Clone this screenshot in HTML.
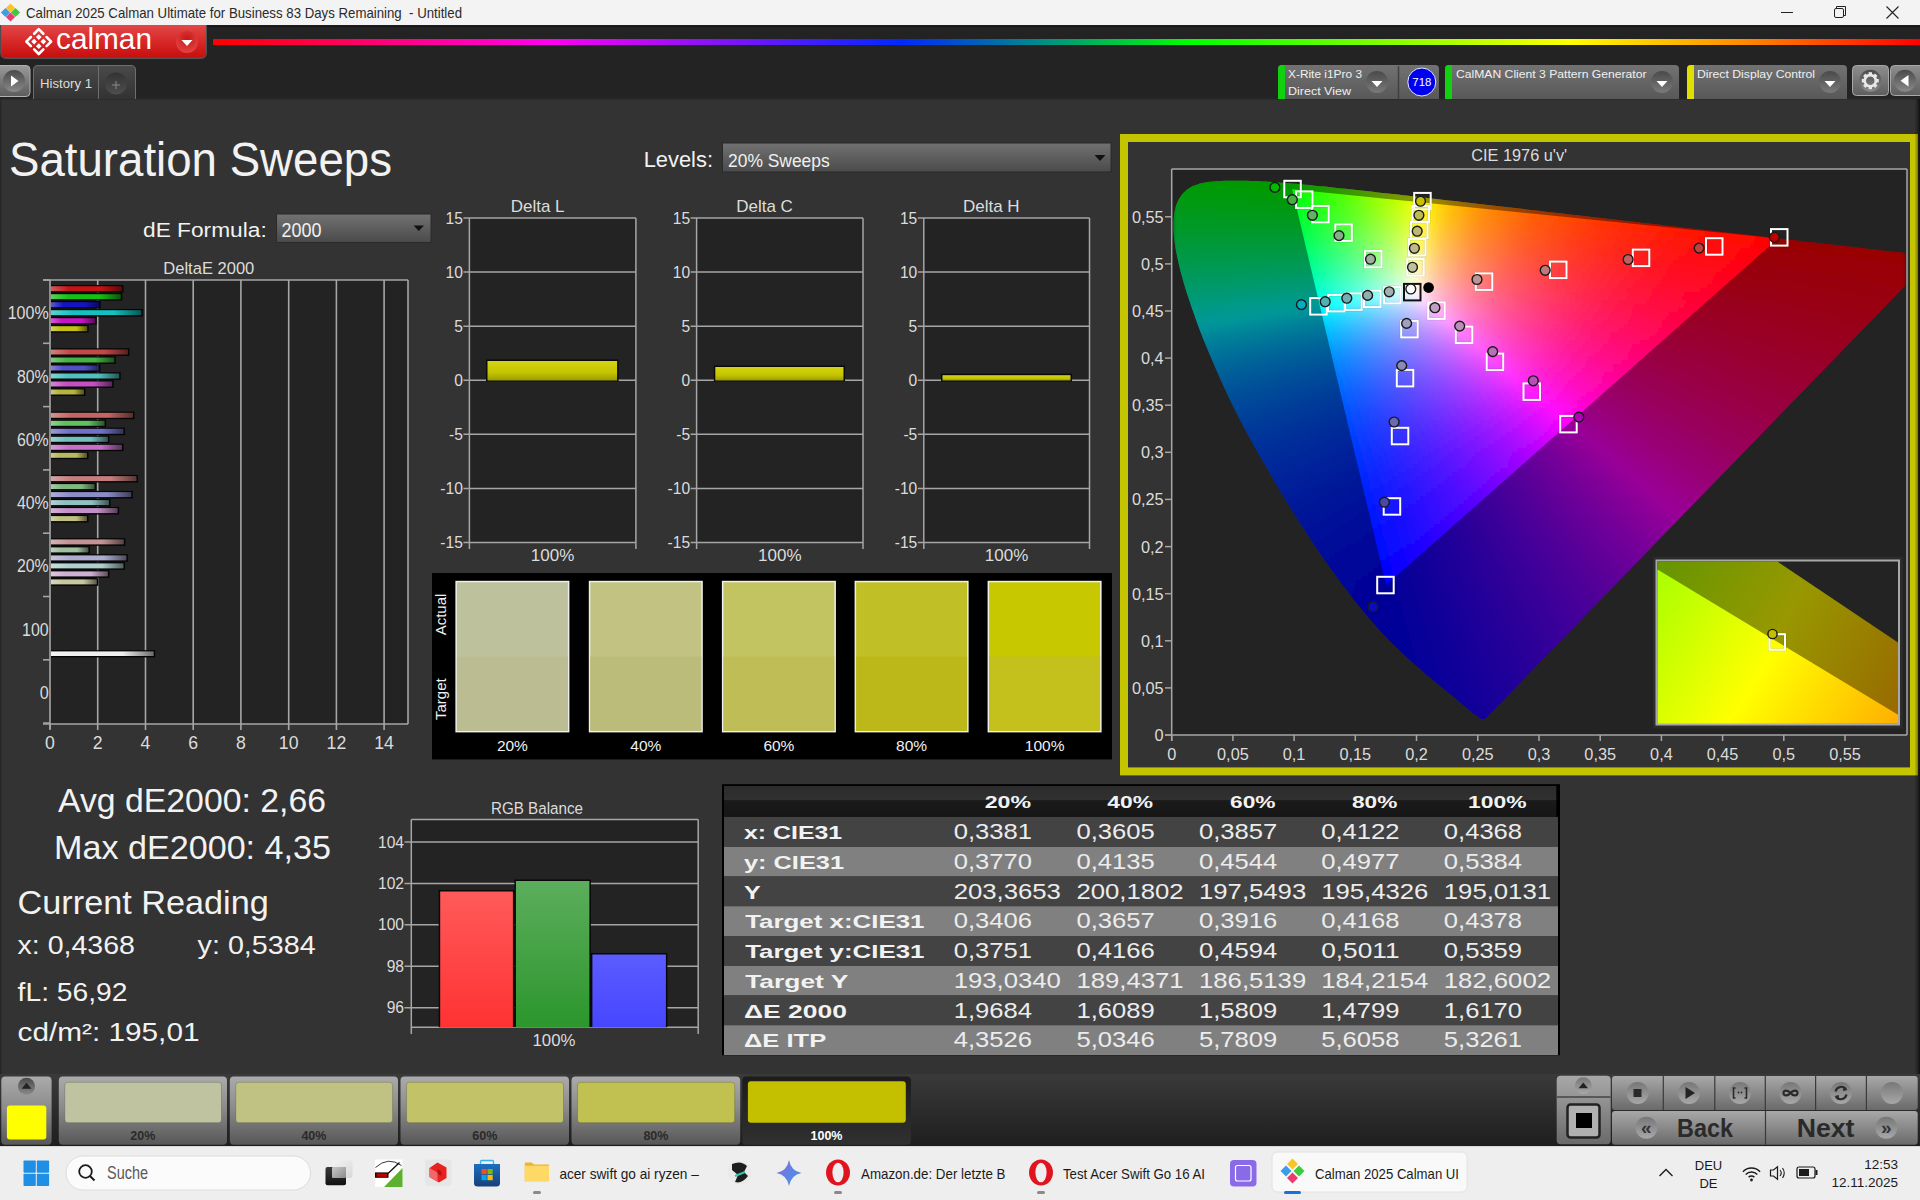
<!DOCTYPE html>
<html><head><meta charset="utf-8"><title>Calman</title>
<style>
html,body{margin:0;padding:0;width:1920px;height:1200px;overflow:hidden;background:#333;}
body{position:relative;font-family:'Liberation Sans', sans-serif;}
svg{position:absolute;left:0;top:0;display:block;}
text{font-family:'Liberation Sans', sans-serif;}
</style></head><body>
<svg width="1920" height="1200" viewBox="0 0 1920 1200">
<defs><linearGradient id="botg" x1="0" y1="0" x2="0" y2="1"><stop offset="0" stop-color="#3a3a3a"/><stop offset="1" stop-color="#1e1e1e"/></linearGradient><linearGradient id="redg" x1="0" y1="0" x2="0" y2="1"><stop offset="0" stop-color="#e24848"/><stop offset="0.5" stop-color="#d82828"/><stop offset="1" stop-color="#c60e0e"/></linearGradient><radialGradient id="ddred" cx="0.5" cy="0.35" r="0.6"><stop offset="0" stop-color="#c81818"/><stop offset="1" stop-color="#e04040"/></radialGradient><linearGradient id="rainb" x1="0" y1="0" x2="1" y2="0"><stop offset="0.0000" stop-color="#ff0000"/><stop offset="0.1974" stop-color="#ff00f0"/><stop offset="0.4025" stop-color="#0028ff"/><stop offset="0.4845" stop-color="#008c88"/><stop offset="0.5723" stop-color="#00ff00"/><stop offset="0.7950" stop-color="#ffff00"/><stop offset="0.8946" stop-color="#ff8c00"/><stop offset="1.0000" stop-color="#ff0000"/></linearGradient><linearGradient id="playg" x1="0" y1="0" x2="0" y2="1"><stop offset="0" stop-color="#9a9a9a"/><stop offset="1" stop-color="#5c5c5c"/></linearGradient><linearGradient id="circg" x1="0" y1="0" x2="0" y2="1"><stop offset="0" stop-color="#4a4a4a"/><stop offset="1" stop-color="#8a8a8a"/></linearGradient><linearGradient id="tabg" x1="0" y1="0" x2="0" y2="1"><stop offset="0" stop-color="#4a4a4a"/><stop offset="1" stop-color="#323232"/></linearGradient><linearGradient id="plusg" x1="0" y1="0" x2="0" y2="1"><stop offset="0" stop-color="#333"/><stop offset="1" stop-color="#4e4e4e"/></linearGradient><linearGradient id="devg" x1="0" y1="0" x2="0" y2="1"><stop offset="0" stop-color="#727272"/><stop offset="1" stop-color="#585858"/></linearGradient><linearGradient id="ddg" x1="0" y1="0" x2="0" y2="1"><stop offset="0" stop-color="#4a4a4a"/><stop offset="1" stop-color="#7a7a7a"/></linearGradient><linearGradient id="btng" x1="0" y1="0" x2="0" y2="1"><stop offset="0" stop-color="#8e8e8e"/><stop offset="1" stop-color="#5e5e5e"/></linearGradient><linearGradient id="dropg" x1="0" y1="0" x2="0" y2="1"><stop offset="0" stop-color="#727272"/><stop offset="1" stop-color="#4a4a4a"/></linearGradient><linearGradient id="hb1"><stop offset="0" stop-color="#d55a5a"/><stop offset="0.25" stop-color="#c41414"/><stop offset="0.7" stop-color="#c41414"/><stop offset="1" stop-color="#580909"/></linearGradient><linearGradient id="hb2"><stop offset="0" stop-color="#5ad25a"/><stop offset="0.25" stop-color="#14c014"/><stop offset="0.7" stop-color="#14c014"/><stop offset="1" stop-color="#095609"/></linearGradient><linearGradient id="hb3"><stop offset="0" stop-color="#5a5ad5"/><stop offset="0.25" stop-color="#1414c4"/><stop offset="0.7" stop-color="#1414c4"/><stop offset="1" stop-color="#090958"/></linearGradient><linearGradient id="hb4"><stop offset="0" stop-color="#5ad2d2"/><stop offset="0.25" stop-color="#14c0c0"/><stop offset="0.7" stop-color="#14c0c0"/><stop offset="1" stop-color="#095656"/></linearGradient><linearGradient id="hb5"><stop offset="0" stop-color="#d55ad5"/><stop offset="0.25" stop-color="#c414c4"/><stop offset="0.7" stop-color="#c414c4"/><stop offset="1" stop-color="#580958"/></linearGradient><linearGradient id="hb6"><stop offset="0" stop-color="#d5d25a"/><stop offset="0.25" stop-color="#c4c014"/><stop offset="0.7" stop-color="#c4c014"/><stop offset="1" stop-color="#585609"/></linearGradient><linearGradient id="hb7"><stop offset="0" stop-color="#d57e7e"/><stop offset="0.25" stop-color="#c44848"/><stop offset="0.7" stop-color="#c44848"/><stop offset="1" stop-color="#582020"/></linearGradient><linearGradient id="hb8"><stop offset="0" stop-color="#7cca7c"/><stop offset="0.25" stop-color="#44b444"/><stop offset="0.7" stop-color="#44b444"/><stop offset="1" stop-color="#1e501e"/></linearGradient><linearGradient id="hb9"><stop offset="0" stop-color="#8484d5"/><stop offset="0.25" stop-color="#5050c4"/><stop offset="0.7" stop-color="#5050c4"/><stop offset="1" stop-color="#242458"/></linearGradient><linearGradient id="hb10"><stop offset="0" stop-color="#84d2d2"/><stop offset="0.25" stop-color="#50c0c0"/><stop offset="0.7" stop-color="#50c0c0"/><stop offset="1" stop-color="#245656"/></linearGradient><linearGradient id="hb11"><stop offset="0" stop-color="#d584d5"/><stop offset="0.25" stop-color="#c450c4"/><stop offset="0.7" stop-color="#c450c4"/><stop offset="1" stop-color="#582458"/></linearGradient><linearGradient id="hb12"><stop offset="0" stop-color="#caca79"/><stop offset="0.25" stop-color="#b4b440"/><stop offset="0.7" stop-color="#b4b440"/><stop offset="1" stop-color="#50501c"/></linearGradient><linearGradient id="hb13"><stop offset="0" stop-color="#d59292"/><stop offset="0.25" stop-color="#c46464"/><stop offset="0.7" stop-color="#c46464"/><stop offset="1" stop-color="#582c2c"/></linearGradient><linearGradient id="hb14"><stop offset="0" stop-color="#8fd28f"/><stop offset="0.25" stop-color="#60c060"/><stop offset="0.7" stop-color="#60c060"/><stop offset="1" stop-color="#2b562b"/></linearGradient><linearGradient id="hb15"><stop offset="0" stop-color="#9a9ad8"/><stop offset="0.25" stop-color="#7070c8"/><stop offset="0.7" stop-color="#7070c8"/><stop offset="1" stop-color="#323259"/></linearGradient><linearGradient id="hb16"><stop offset="0" stop-color="#9ad2d2"/><stop offset="0.25" stop-color="#70c0c0"/><stop offset="0.7" stop-color="#70c0c0"/><stop offset="1" stop-color="#325656"/></linearGradient><linearGradient id="hb17"><stop offset="0" stop-color="#d59ad8"/><stop offset="0.25" stop-color="#c470c8"/><stop offset="0.7" stop-color="#c470c8"/><stop offset="1" stop-color="#583259"/></linearGradient><linearGradient id="hb18"><stop offset="0" stop-color="#cdcd8f"/><stop offset="0.25" stop-color="#b8b860"/><stop offset="0.7" stop-color="#b8b860"/><stop offset="1" stop-color="#52522b"/></linearGradient><linearGradient id="hb19"><stop offset="0" stop-color="#d5a3a3"/><stop offset="0.25" stop-color="#c47c7c"/><stop offset="0.7" stop-color="#c47c7c"/><stop offset="1" stop-color="#583737"/></linearGradient><linearGradient id="hb20"><stop offset="0" stop-color="#a6cda6"/><stop offset="0.25" stop-color="#80b880"/><stop offset="0.7" stop-color="#80b880"/><stop offset="1" stop-color="#395239"/></linearGradient><linearGradient id="hb21"><stop offset="0" stop-color="#aeaed8"/><stop offset="0.25" stop-color="#8c8cc8"/><stop offset="0.7" stop-color="#8c8cc8"/><stop offset="1" stop-color="#3e3e59"/></linearGradient><linearGradient id="hb22"><stop offset="0" stop-color="#b1d2d2"/><stop offset="0.25" stop-color="#90c0c0"/><stop offset="0.7" stop-color="#90c0c0"/><stop offset="1" stop-color="#405656"/></linearGradient><linearGradient id="hb23"><stop offset="0" stop-color="#d5b1d8"/><stop offset="0.25" stop-color="#c490c8"/><stop offset="0.7" stop-color="#c490c8"/><stop offset="1" stop-color="#584059"/></linearGradient><linearGradient id="hb24"><stop offset="0" stop-color="#d2d2a6"/><stop offset="0.25" stop-color="#c0c080"/><stop offset="0.7" stop-color="#c0c080"/><stop offset="1" stop-color="#565639"/></linearGradient><linearGradient id="hb25"><stop offset="0" stop-color="#d5b4b4"/><stop offset="0.25" stop-color="#c49494"/><stop offset="0.7" stop-color="#c49494"/><stop offset="1" stop-color="#584242"/></linearGradient><linearGradient id="hb26"><stop offset="0" stop-color="#bcd2bc"/><stop offset="0.25" stop-color="#a0c0a0"/><stop offset="0.7" stop-color="#a0c0a0"/><stop offset="1" stop-color="#485648"/></linearGradient><linearGradient id="hb27"><stop offset="0" stop-color="#c4c4de"/><stop offset="0.25" stop-color="#acacd0"/><stop offset="0.7" stop-color="#acacd0"/><stop offset="1" stop-color="#4d4d5d"/></linearGradient><linearGradient id="hb28"><stop offset="0" stop-color="#c7dede"/><stop offset="0.25" stop-color="#b0d0d0"/><stop offset="0.7" stop-color="#b0d0d0"/><stop offset="1" stop-color="#4f5d5d"/></linearGradient><linearGradient id="hb29"><stop offset="0" stop-color="#dec7de"/><stop offset="0.25" stop-color="#d0b0d0"/><stop offset="0.7" stop-color="#d0b0d0"/><stop offset="1" stop-color="#5d4f5d"/></linearGradient><linearGradient id="hb30"><stop offset="0" stop-color="#d8d8bc"/><stop offset="0.25" stop-color="#c8c8a0"/><stop offset="0.7" stop-color="#c8c8a0"/><stop offset="1" stop-color="#595948"/></linearGradient><linearGradient id="hb31"><stop offset="0" stop-color="#f3f3f3"/><stop offset="0.25" stop-color="#eeeeee"/><stop offset="0.7" stop-color="#eeeeee"/><stop offset="1" stop-color="#6b6b6b"/></linearGradient><linearGradient id="ybar" x1="0" y1="0" x2="0" y2="1"><stop offset="0" stop-color="#d4d414"/><stop offset="0.6" stop-color="#c4c400"/><stop offset="1" stop-color="#9a9a00"/></linearGradient><linearGradient id="rbar" x1="0" y1="0" x2="0" y2="1"><stop offset="0" stop-color="#ff5a5a"/><stop offset="1" stop-color="#ff3232"/></linearGradient><linearGradient id="gbar" x1="0" y1="0" x2="0" y2="1"><stop offset="0" stop-color="#5cae5c"/><stop offset="1" stop-color="#2c962c"/></linearGradient><linearGradient id="bbar" x1="0" y1="0" x2="0" y2="1"><stop offset="0" stop-color="#5c5cff"/><stop offset="1" stop-color="#4646ff"/></linearGradient><linearGradient id="thead" x1="0" y1="0" x2="0" y2="1"><stop offset="0" stop-color="#2c2c2c"/><stop offset="0.45" stop-color="#303030"/><stop offset="0.47" stop-color="#1a1a1a"/><stop offset="1" stop-color="#161616"/></linearGradient><linearGradient id="g0"><stop offset="0.000" stop-color="#00ff01"/><stop offset="0.161" stop-color="#01ff00"/><stop offset="0.245" stop-color="#65ff00"/><stop offset="0.313" stop-color="#caff00"/><stop offset="0.343" stop-color="#ffff00"/><stop offset="0.384" stop-color="#ffc200"/><stop offset="0.435" stop-color="#ff8e00"/><stop offset="0.509" stop-color="#ff5f00"/><stop offset="0.620" stop-color="#ff3400"/><stop offset="0.792" stop-color="#ff1000"/><stop offset="0.941" stop-color="#ff0000"/><stop offset="0.999" stop-color="#ff0000"/><stop offset="1.000" stop-color="#ff0000"/></linearGradient><linearGradient id="g1"><stop offset="0.000" stop-color="#00ff06"/><stop offset="0.128" stop-color="#00ff00"/><stop offset="0.163" stop-color="#02ff00"/><stop offset="0.242" stop-color="#61ff00"/><stop offset="0.310" stop-color="#c6ff00"/><stop offset="0.340" stop-color="#fbff00"/><stop offset="0.348" stop-color="#fff500"/><stop offset="0.389" stop-color="#ffba00"/><stop offset="0.446" stop-color="#ff8500"/><stop offset="0.525" stop-color="#ff5600"/><stop offset="0.642" stop-color="#ff2e00"/><stop offset="0.830" stop-color="#ff0a00"/><stop offset="0.947" stop-color="#ff0000"/><stop offset="0.999" stop-color="#ff0000"/><stop offset="1.000" stop-color="#ff0000"/></linearGradient><linearGradient id="g2"><stop offset="0.000" stop-color="#00ff0b"/><stop offset="0.161" stop-color="#00ff00"/><stop offset="0.223" stop-color="#47ff00"/><stop offset="0.297" stop-color="#b0ff00"/><stop offset="0.343" stop-color="#fffd00"/><stop offset="0.378" stop-color="#ffc700"/><stop offset="0.430" stop-color="#ff9000"/><stop offset="0.503" stop-color="#ff6000"/><stop offset="0.610" stop-color="#ff3600"/><stop offset="0.776" stop-color="#ff1100"/><stop offset="0.931" stop-color="#ff0000"/><stop offset="0.999" stop-color="#ff0000"/><stop offset="1.000" stop-color="#ff0000"/></linearGradient><linearGradient id="g3"><stop offset="0.000" stop-color="#00ff11"/><stop offset="0.166" stop-color="#02ff01"/><stop offset="0.245" stop-color="#63ff00"/><stop offset="0.313" stop-color="#ccff00"/><stop offset="0.343" stop-color="#fffc00"/><stop offset="0.378" stop-color="#ffc500"/><stop offset="0.430" stop-color="#ff8f00"/><stop offset="0.503" stop-color="#ff5f00"/><stop offset="0.610" stop-color="#ff3500"/><stop offset="0.776" stop-color="#ff1000"/><stop offset="0.925" stop-color="#ff0000"/><stop offset="0.999" stop-color="#ff0000"/><stop offset="1.000" stop-color="#ff0000"/></linearGradient><linearGradient id="g4"><stop offset="0.000" stop-color="#00ff16"/><stop offset="0.166" stop-color="#01ff07"/><stop offset="0.245" stop-color="#63ff00"/><stop offset="0.313" stop-color="#ccff00"/><stop offset="0.337" stop-color="#f8ff00"/><stop offset="0.340" stop-color="#fdff00"/><stop offset="0.381" stop-color="#ffc100"/><stop offset="0.433" stop-color="#ff8c00"/><stop offset="0.506" stop-color="#ff5c00"/><stop offset="0.612" stop-color="#ff3300"/><stop offset="0.784" stop-color="#ff0e00"/><stop offset="0.917" stop-color="#ff0000"/><stop offset="0.996" stop-color="#ff0000"/><stop offset="0.999" stop-color="#ff0000"/><stop offset="1.000" stop-color="#ff0000"/></linearGradient><linearGradient id="g5"><stop offset="0.000" stop-color="#00ff1b"/><stop offset="0.166" stop-color="#00ff0e"/><stop offset="0.239" stop-color="#5aff06"/><stop offset="0.307" stop-color="#c3ff00"/><stop offset="0.337" stop-color="#f9ff00"/><stop offset="0.340" stop-color="#feff00"/><stop offset="0.376" stop-color="#ffc700"/><stop offset="0.422" stop-color="#ff9400"/><stop offset="0.490" stop-color="#ff6400"/><stop offset="0.590" stop-color="#ff3900"/><stop offset="0.746" stop-color="#ff1400"/><stop offset="0.906" stop-color="#ff0000"/><stop offset="0.996" stop-color="#ff0000"/><stop offset="0.999" stop-color="#ff0000"/><stop offset="1.000" stop-color="#ff0000"/></linearGradient><linearGradient id="g6"><stop offset="0.000" stop-color="#00ff21"/><stop offset="0.166" stop-color="#00ff14"/><stop offset="0.229" stop-color="#4bff0e"/><stop offset="0.297" stop-color="#b1ff06"/><stop offset="0.337" stop-color="#faff00"/><stop offset="0.340" stop-color="#ffff00"/><stop offset="0.376" stop-color="#ffc600"/><stop offset="0.422" stop-color="#ff9300"/><stop offset="0.490" stop-color="#ff6300"/><stop offset="0.590" stop-color="#ff3800"/><stop offset="0.746" stop-color="#ff1300"/><stop offset="0.901" stop-color="#ff0000"/><stop offset="0.996" stop-color="#ff0000"/><stop offset="0.999" stop-color="#ff0000"/><stop offset="1.000" stop-color="#ff0000"/></linearGradient><linearGradient id="g7"><stop offset="0.000" stop-color="#00ff26"/><stop offset="0.171" stop-color="#03ff1b"/><stop offset="0.245" stop-color="#61ff14"/><stop offset="0.307" stop-color="#c3ff0c"/><stop offset="0.337" stop-color="#fbff08"/><stop offset="0.346" stop-color="#fff307"/><stop offset="0.381" stop-color="#ffbd01"/><stop offset="0.433" stop-color="#ff8800"/><stop offset="0.506" stop-color="#ff5900"/><stop offset="0.612" stop-color="#ff3000"/><stop offset="0.784" stop-color="#ff0c00"/><stop offset="0.901" stop-color="#ff0000"/><stop offset="0.996" stop-color="#ff0000"/><stop offset="0.999" stop-color="#ff0000"/><stop offset="1.000" stop-color="#ff0000"/></linearGradient><linearGradient id="g8"><stop offset="0.000" stop-color="#00ff2c"/><stop offset="0.171" stop-color="#01ff22"/><stop offset="0.245" stop-color="#60ff1b"/><stop offset="0.307" stop-color="#c4ff15"/><stop offset="0.337" stop-color="#fcff11"/><stop offset="0.384" stop-color="#ffb908"/><stop offset="0.435" stop-color="#ff8501"/><stop offset="0.509" stop-color="#ff5600"/><stop offset="0.620" stop-color="#ff2d00"/><stop offset="0.797" stop-color="#ff0900"/><stop offset="0.898" stop-color="#ff0000"/><stop offset="0.999" stop-color="#ff0000"/><stop offset="1.000" stop-color="#ff0000"/></linearGradient><linearGradient id="g9"><stop offset="0.000" stop-color="#00ff32"/><stop offset="0.171" stop-color="#00ff29"/><stop offset="0.245" stop-color="#5fff23"/><stop offset="0.307" stop-color="#c4ff1d"/><stop offset="0.337" stop-color="#fdff1a"/><stop offset="0.378" stop-color="#ffbe10"/><stop offset="0.424" stop-color="#ff8d08"/><stop offset="0.493" stop-color="#ff5e00"/><stop offset="0.593" stop-color="#ff3400"/><stop offset="0.754" stop-color="#ff0f00"/><stop offset="0.887" stop-color="#ff0000"/><stop offset="0.999" stop-color="#ff0000"/><stop offset="1.000" stop-color="#ff0000"/></linearGradient><linearGradient id="g10"><stop offset="0.000" stop-color="#00ff37"/><stop offset="0.171" stop-color="#00ff30"/><stop offset="0.234" stop-color="#4fff2c"/><stop offset="0.297" stop-color="#b1ff27"/><stop offset="0.337" stop-color="#feff23"/><stop offset="0.373" stop-color="#ffc418"/><stop offset="0.419" stop-color="#ff900f"/><stop offset="0.487" stop-color="#ff5f06"/><stop offset="0.588" stop-color="#ff3500"/><stop offset="0.743" stop-color="#ff1000"/><stop offset="0.882" stop-color="#ff0000"/><stop offset="0.999" stop-color="#ff0000"/><stop offset="1.000" stop-color="#ff0000"/></linearGradient><linearGradient id="g11"><stop offset="0.000" stop-color="#00ff3d"/><stop offset="0.171" stop-color="#00ff37"/><stop offset="0.201" stop-color="#22ff36"/><stop offset="0.269" stop-color="#83ff32"/><stop offset="0.327" stop-color="#e9ff2e"/><stop offset="0.335" stop-color="#f9ff2d"/><stop offset="0.337" stop-color="#ffff2d"/><stop offset="0.373" stop-color="#ffc320"/><stop offset="0.419" stop-color="#ff8f15"/><stop offset="0.487" stop-color="#ff5e0a"/><stop offset="0.588" stop-color="#ff3401"/><stop offset="0.743" stop-color="#ff0f00"/><stop offset="0.876" stop-color="#ff0000"/><stop offset="0.999" stop-color="#ff0000"/><stop offset="1.000" stop-color="#ff0000"/></linearGradient><linearGradient id="g12"><stop offset="0.000" stop-color="#00ff43"/><stop offset="0.177" stop-color="#02ff3e"/><stop offset="0.250" stop-color="#65ff3b"/><stop offset="0.313" stop-color="#cfff38"/><stop offset="0.337" stop-color="#fffe36"/><stop offset="0.373" stop-color="#ffc228"/><stop offset="0.419" stop-color="#ff8e1b"/><stop offset="0.487" stop-color="#ff5d0f"/><stop offset="0.588" stop-color="#ff3205"/><stop offset="0.743" stop-color="#ff0e00"/><stop offset="0.865" stop-color="#ff0000"/><stop offset="0.999" stop-color="#ff0000"/><stop offset="1.000" stop-color="#ff0000"/></linearGradient><linearGradient id="g13"><stop offset="0.000" stop-color="#00ff49"/><stop offset="0.177" stop-color="#00ff46"/><stop offset="0.250" stop-color="#64ff44"/><stop offset="0.307" stop-color="#c5ff42"/><stop offset="0.337" stop-color="#fffd40"/><stop offset="0.373" stop-color="#ffc12f"/><stop offset="0.419" stop-color="#ff8c21"/><stop offset="0.487" stop-color="#ff5c14"/><stop offset="0.588" stop-color="#ff3108"/><stop offset="0.743" stop-color="#ff0e00"/><stop offset="0.860" stop-color="#ff0000"/><stop offset="0.999" stop-color="#ff0000"/><stop offset="1.000" stop-color="#ff0000"/></linearGradient><linearGradient id="g14"><stop offset="0.000" stop-color="#00ff4f"/><stop offset="0.177" stop-color="#00ff4e"/><stop offset="0.239" stop-color="#53ff4d"/><stop offset="0.302" stop-color="#bbff4b"/><stop offset="0.337" stop-color="#fffc4a"/><stop offset="0.367" stop-color="#ffc73a"/><stop offset="0.408" stop-color="#ff952b"/><stop offset="0.471" stop-color="#ff641c"/><stop offset="0.561" stop-color="#ff3a0f"/><stop offset="0.699" stop-color="#ff1503"/><stop offset="0.849" stop-color="#ff0000"/><stop offset="0.999" stop-color="#ff0000"/><stop offset="1.000" stop-color="#ff0000"/></linearGradient><linearGradient id="g15"><stop offset="0.000" stop-color="#00ff56"/><stop offset="0.177" stop-color="#00ff55"/><stop offset="0.218" stop-color="#33ff55"/><stop offset="0.280" stop-color="#94ff55"/><stop offset="0.332" stop-color="#f8ff55"/><stop offset="0.335" stop-color="#fdff55"/><stop offset="0.370" stop-color="#ffc241"/><stop offset="0.416" stop-color="#ff8c2f"/><stop offset="0.479" stop-color="#ff5e1f"/><stop offset="0.574" stop-color="#ff3411"/><stop offset="0.724" stop-color="#ff0f05"/><stop offset="0.846" stop-color="#ff0000"/><stop offset="0.996" stop-color="#ff0000"/><stop offset="0.999" stop-color="#ff0000"/><stop offset="1.000" stop-color="#ff0000"/></linearGradient><linearGradient id="g16"><stop offset="0.000" stop-color="#00ff5c"/><stop offset="0.182" stop-color="#02ff5e"/><stop offset="0.250" stop-color="#62ff5e"/><stop offset="0.307" stop-color="#c6ff5f"/><stop offset="0.332" stop-color="#f9ff60"/><stop offset="0.335" stop-color="#ffff60"/><stop offset="0.365" stop-color="#ffc94c"/><stop offset="0.405" stop-color="#ff9639"/><stop offset="0.463" stop-color="#ff6728"/><stop offset="0.547" stop-color="#ff3c18"/><stop offset="0.680" stop-color="#ff170b"/><stop offset="0.835" stop-color="#ff0002"/><stop offset="0.996" stop-color="#ff0000"/><stop offset="0.999" stop-color="#ff0000"/><stop offset="1.000" stop-color="#ff0000"/></linearGradient><linearGradient id="g17"><stop offset="0.000" stop-color="#00ff62"/><stop offset="0.182" stop-color="#01ff66"/><stop offset="0.250" stop-color="#61ff68"/><stop offset="0.307" stop-color="#c7ff6a"/><stop offset="0.332" stop-color="#faff6b"/><stop offset="0.335" stop-color="#fffe6a"/><stop offset="0.365" stop-color="#ffc755"/><stop offset="0.405" stop-color="#ff9440"/><stop offset="0.463" stop-color="#ff652d"/><stop offset="0.547" stop-color="#ff3b1d"/><stop offset="0.680" stop-color="#ff160e"/><stop offset="0.830" stop-color="#ff0004"/><stop offset="0.996" stop-color="#ff0000"/><stop offset="0.999" stop-color="#ff0000"/><stop offset="1.000" stop-color="#ff0000"/></linearGradient><linearGradient id="g18"><stop offset="0.000" stop-color="#00ff69"/><stop offset="0.182" stop-color="#00ff6e"/><stop offset="0.245" stop-color="#58ff71"/><stop offset="0.302" stop-color="#bcff74"/><stop offset="0.332" stop-color="#fbff76"/><stop offset="0.340" stop-color="#fff270"/><stop offset="0.370" stop-color="#ffbe5a"/><stop offset="0.416" stop-color="#ff8842"/><stop offset="0.479" stop-color="#ff5a2f"/><stop offset="0.574" stop-color="#ff301d"/><stop offset="0.724" stop-color="#ff0c0d"/><stop offset="0.830" stop-color="#ff0006"/><stop offset="0.996" stop-color="#ff0000"/><stop offset="0.999" stop-color="#ff0000"/><stop offset="1.000" stop-color="#ff0000"/></linearGradient><linearGradient id="g19"><stop offset="0.000" stop-color="#00ff6f"/><stop offset="0.182" stop-color="#00ff77"/><stop offset="0.229" stop-color="#3eff79"/><stop offset="0.286" stop-color="#9dff7d"/><stop offset="0.332" stop-color="#fcff81"/><stop offset="0.373" stop-color="#ffb961"/><stop offset="0.419" stop-color="#ff8448"/><stop offset="0.482" stop-color="#ff5733"/><stop offset="0.577" stop-color="#ff2e20"/><stop offset="0.727" stop-color="#ff0b10"/><stop offset="0.827" stop-color="#ff0009"/><stop offset="0.999" stop-color="#ff0001"/><stop offset="1.000" stop-color="#ff0001"/></linearGradient><linearGradient id="g20"><stop offset="0.000" stop-color="#00ff76"/><stop offset="0.188" stop-color="#03ff80"/><stop offset="0.250" stop-color="#5fff85"/><stop offset="0.307" stop-color="#c8ff8a"/><stop offset="0.332" stop-color="#fdff8d"/><stop offset="0.367" stop-color="#ffbf6d"/><stop offset="0.408" stop-color="#ff8d54"/><stop offset="0.465" stop-color="#ff603d"/><stop offset="0.555" stop-color="#ff3528"/><stop offset="0.694" stop-color="#ff1015"/><stop offset="0.816" stop-color="#ff000c"/><stop offset="0.999" stop-color="#ff0003"/><stop offset="1.000" stop-color="#ff0003"/></linearGradient><linearGradient id="g21"><stop offset="0.000" stop-color="#00ff7d"/><stop offset="0.188" stop-color="#01ff89"/><stop offset="0.250" stop-color="#5eff8f"/><stop offset="0.307" stop-color="#c8ff96"/><stop offset="0.332" stop-color="#feff99"/><stop offset="0.362" stop-color="#ffc67b"/><stop offset="0.403" stop-color="#ff915e"/><stop offset="0.460" stop-color="#ff6245"/><stop offset="0.544" stop-color="#ff382e"/><stop offset="0.678" stop-color="#ff121a"/><stop offset="0.805" stop-color="#ff000f"/><stop offset="0.999" stop-color="#ff0005"/><stop offset="1.000" stop-color="#ff0005"/></linearGradient><linearGradient id="g22"><stop offset="0.000" stop-color="#00ff84"/><stop offset="0.188" stop-color="#00ff92"/><stop offset="0.250" stop-color="#5dff99"/><stop offset="0.302" stop-color="#beffa0"/><stop offset="0.332" stop-color="#ffffa5"/><stop offset="0.362" stop-color="#ffc584"/><stop offset="0.403" stop-color="#ff9066"/><stop offset="0.460" stop-color="#ff604a"/><stop offset="0.544" stop-color="#ff3632"/><stop offset="0.678" stop-color="#ff111d"/><stop offset="0.800" stop-color="#ff0012"/><stop offset="0.999" stop-color="#ff0007"/><stop offset="1.000" stop-color="#ff0007"/></linearGradient><linearGradient id="g23"><stop offset="0.000" stop-color="#00ff8b"/><stop offset="0.188" stop-color="#00ff9c"/><stop offset="0.234" stop-color="#42ffa2"/><stop offset="0.291" stop-color="#a8ffaa"/><stop offset="0.332" stop-color="#fffeb1"/><stop offset="0.362" stop-color="#ffc38e"/><stop offset="0.403" stop-color="#ff8e6d"/><stop offset="0.460" stop-color="#ff5f50"/><stop offset="0.544" stop-color="#ff3537"/><stop offset="0.678" stop-color="#ff1020"/><stop offset="0.795" stop-color="#ff0015"/><stop offset="0.999" stop-color="#ff0009"/><stop offset="1.000" stop-color="#ff0008"/></linearGradient><linearGradient id="g24"><stop offset="0.000" stop-color="#00ff92"/><stop offset="0.188" stop-color="#00ffa5"/><stop offset="0.196" stop-color="#07ffa6"/><stop offset="0.259" stop-color="#6affb0"/><stop offset="0.310" stop-color="#d0ffba"/><stop offset="0.329" stop-color="#fbffbf"/><stop offset="0.337" stop-color="#fff0b5"/><stop offset="0.367" stop-color="#ffb992"/><stop offset="0.408" stop-color="#ff8771"/><stop offset="0.465" stop-color="#ff5a54"/><stop offset="0.555" stop-color="#ff3038"/><stop offset="0.694" stop-color="#ff0c21"/><stop offset="0.795" stop-color="#ff0017"/><stop offset="0.999" stop-color="#ff000a"/><stop offset="1.000" stop-color="#ff000a"/></linearGradient><linearGradient id="g25"><stop offset="0.000" stop-color="#00ff99"/><stop offset="0.193" stop-color="#01ffb0"/><stop offset="0.256" stop-color="#64ffbb"/><stop offset="0.307" stop-color="#caffc6"/><stop offset="0.327" stop-color="#f6ffcb"/><stop offset="0.329" stop-color="#fcffcc"/><stop offset="0.365" stop-color="#ffbc9e"/><stop offset="0.405" stop-color="#ff897b"/><stop offset="0.463" stop-color="#ff5b5b"/><stop offset="0.547" stop-color="#ff323f"/><stop offset="0.680" stop-color="#ff0e26"/><stop offset="0.786" stop-color="#ff001a"/><stop offset="0.996" stop-color="#ff000c"/><stop offset="0.999" stop-color="#ff000c"/><stop offset="1.000" stop-color="#ff000c"/></linearGradient><linearGradient id="g26"><stop offset="0.000" stop-color="#00ffa1"/><stop offset="0.193" stop-color="#00ffba"/><stop offset="0.250" stop-color="#5affc5"/><stop offset="0.302" stop-color="#bfffd2"/><stop offset="0.327" stop-color="#f7ffd9"/><stop offset="0.329" stop-color="#feffda"/><stop offset="0.359" stop-color="#ffc3ae"/><stop offset="0.395" stop-color="#ff938b"/><stop offset="0.446" stop-color="#ff6469"/><stop offset="0.525" stop-color="#ff3949"/><stop offset="0.648" stop-color="#ff142e"/><stop offset="0.776" stop-color="#ff001e"/><stop offset="0.996" stop-color="#ff000e"/><stop offset="0.999" stop-color="#ff000e"/><stop offset="1.000" stop-color="#ff000e"/></linearGradient><linearGradient id="g27"><stop offset="0.000" stop-color="#00ffa8"/><stop offset="0.193" stop-color="#00ffc4"/><stop offset="0.239" stop-color="#46ffce"/><stop offset="0.291" stop-color="#a8ffdc"/><stop offset="0.327" stop-color="#f8ffe7"/><stop offset="0.329" stop-color="#ffffe8"/><stop offset="0.359" stop-color="#ffc2b9"/><stop offset="0.395" stop-color="#ff9193"/><stop offset="0.446" stop-color="#ff636f"/><stop offset="0.525" stop-color="#ff384e"/><stop offset="0.648" stop-color="#ff1332"/><stop offset="0.770" stop-color="#ff0021"/><stop offset="0.996" stop-color="#ff0010"/><stop offset="0.999" stop-color="#ff0010"/><stop offset="1.000" stop-color="#ff0010"/></linearGradient><linearGradient id="g28"><stop offset="0.000" stop-color="#00ffb0"/><stop offset="0.193" stop-color="#00ffcf"/><stop offset="0.201" stop-color="#08ffd1"/><stop offset="0.259" stop-color="#67ffdf"/><stop offset="0.305" stop-color="#c5ffee"/><stop offset="0.329" stop-color="#fffef5"/><stop offset="0.354" stop-color="#ffcacb"/><stop offset="0.389" stop-color="#ff96a1"/><stop offset="0.441" stop-color="#ff6579"/><stop offset="0.514" stop-color="#ff3b57"/><stop offset="0.631" stop-color="#ff1538"/><stop offset="0.759" stop-color="#ff0025"/><stop offset="0.996" stop-color="#ff0012"/><stop offset="0.999" stop-color="#ff0012"/><stop offset="1.000" stop-color="#ff0012"/></linearGradient><linearGradient id="g29"><stop offset="0.000" stop-color="#00ffb7"/><stop offset="0.199" stop-color="#02ffdb"/><stop offset="0.256" stop-color="#61ffeb"/><stop offset="0.302" stop-color="#c0fffb"/><stop offset="0.327" stop-color="#f5faff"/><stop offset="0.329" stop-color="#fbf9ff"/><stop offset="0.337" stop-color="#ffe9f2"/><stop offset="0.367" stop-color="#ffb2c3"/><stop offset="0.408" stop-color="#ff8098"/><stop offset="0.465" stop-color="#ff5372"/><stop offset="0.555" stop-color="#ff2a4e"/><stop offset="0.699" stop-color="#ff0630"/><stop offset="0.773" stop-color="#ff0026"/><stop offset="0.999" stop-color="#ff0014"/><stop offset="1.000" stop-color="#ff0014"/></linearGradient><linearGradient id="g30"><stop offset="0.000" stop-color="#00ffbf"/><stop offset="0.193" stop-color="#00ffe5"/><stop offset="0.201" stop-color="#04ffe7"/><stop offset="0.259" stop-color="#65fff9"/><stop offset="0.288" stop-color="#9ffbff"/><stop offset="0.335" stop-color="#f9e9ff"/><stop offset="0.337" stop-color="#ffe8ff"/><stop offset="0.367" stop-color="#ffb0cd"/><stop offset="0.408" stop-color="#ff7ea0"/><stop offset="0.465" stop-color="#ff5278"/><stop offset="0.555" stop-color="#ff2953"/><stop offset="0.699" stop-color="#ff0533"/><stop offset="0.773" stop-color="#ff0029"/><stop offset="0.999" stop-color="#ff0016"/><stop offset="1.000" stop-color="#ff0015"/></linearGradient><linearGradient id="g31"><stop offset="0.000" stop-color="#00ffc7"/><stop offset="0.188" stop-color="#00ffef"/><stop offset="0.201" stop-color="#02fff3"/><stop offset="0.248" stop-color="#4ffcff"/><stop offset="0.343" stop-color="#fdd9ff"/><stop offset="0.378" stop-color="#ff9fc9"/><stop offset="0.424" stop-color="#ff6d9a"/><stop offset="0.493" stop-color="#ff4170"/><stop offset="0.593" stop-color="#ff1c4c"/><stop offset="0.732" stop-color="#ff0031"/><stop offset="0.996" stop-color="#ff0018"/><stop offset="0.999" stop-color="#ff0017"/><stop offset="1.000" stop-color="#ff0017"/></linearGradient><linearGradient id="g32"><stop offset="0.000" stop-color="#00ffcf"/><stop offset="0.182" stop-color="#00fff8"/><stop offset="0.201" stop-color="#00fffe"/><stop offset="0.302" stop-color="#a7ddff"/><stop offset="0.348" stop-color="#fbcbff"/><stop offset="0.356" stop-color="#ffbff4"/><stop offset="0.392" stop-color="#ff8cc1"/><stop offset="0.444" stop-color="#ff5d92"/><stop offset="0.517" stop-color="#ff346a"/><stop offset="0.634" stop-color="#ff1046"/><stop offset="0.740" stop-color="#ff0033"/><stop offset="0.999" stop-color="#ff0019"/><stop offset="1.000" stop-color="#ff0019"/></linearGradient><linearGradient id="g33"><stop offset="0.000" stop-color="#00ffd8"/><stop offset="0.171" stop-color="#00fdff"/><stop offset="0.201" stop-color="#00f4ff"/><stop offset="0.291" stop-color="#8cd5ff"/><stop offset="0.354" stop-color="#fabeff"/><stop offset="0.356" stop-color="#ffbdff"/><stop offset="0.392" stop-color="#ff8bcb"/><stop offset="0.444" stop-color="#ff5b99"/><stop offset="0.517" stop-color="#ff336f"/><stop offset="0.634" stop-color="#ff0f49"/><stop offset="0.729" stop-color="#ff0037"/><stop offset="0.999" stop-color="#ff001b"/><stop offset="1.000" stop-color="#ff001b"/></linearGradient><linearGradient id="g34"><stop offset="0.000" stop-color="#00ffe0"/><stop offset="0.139" stop-color="#00fcff"/><stop offset="0.201" stop-color="#00e9ff"/><stop offset="0.215" stop-color="#10e5ff"/><stop offset="0.321" stop-color="#b7c0ff"/><stop offset="0.362" stop-color="#fdb1ff"/><stop offset="0.403" stop-color="#ff7dc7"/><stop offset="0.454" stop-color="#ff5298"/><stop offset="0.533" stop-color="#ff2b6d"/><stop offset="0.656" stop-color="#ff0948"/><stop offset="0.729" stop-color="#ff003a"/><stop offset="0.999" stop-color="#ff001d"/><stop offset="1.000" stop-color="#ff001d"/></linearGradient><linearGradient id="g35"><stop offset="0.000" stop-color="#00ffe9"/><stop offset="0.101" stop-color="#00fdff"/><stop offset="0.207" stop-color="#02ddff"/><stop offset="0.318" stop-color="#aab8ff"/><stop offset="0.370" stop-color="#ffa4fe"/><stop offset="0.405" stop-color="#ff78cc"/><stop offset="0.457" stop-color="#ff4f9d"/><stop offset="0.536" stop-color="#ff2971"/><stop offset="0.659" stop-color="#ff084b"/><stop offset="0.727" stop-color="#ff003e"/><stop offset="0.985" stop-color="#ff0020"/><stop offset="0.999" stop-color="#ff001f"/><stop offset="1.000" stop-color="#ff001f"/></linearGradient><linearGradient id="g36"><stop offset="0.000" stop-color="#00fff1"/><stop offset="0.068" stop-color="#00fcff"/><stop offset="0.207" stop-color="#01d4ff"/><stop offset="0.324" stop-color="#abadff"/><stop offset="0.376" stop-color="#fe9aff"/><stop offset="0.416" stop-color="#ff6cc9"/><stop offset="0.473" stop-color="#ff4498"/><stop offset="0.558" stop-color="#ff206d"/><stop offset="0.686" stop-color="#ff0248"/><stop offset="0.906" stop-color="#ff0029"/><stop offset="0.996" stop-color="#ff0021"/><stop offset="0.999" stop-color="#ff0021"/><stop offset="1.000" stop-color="#ff0021"/></linearGradient><linearGradient id="g37"><stop offset="0.000" stop-color="#00fffa"/><stop offset="0.046" stop-color="#00f8ff"/><stop offset="0.207" stop-color="#00cbff"/><stop offset="0.313" stop-color="#93a8ff"/><stop offset="0.381" stop-color="#fd90ff"/><stop offset="0.427" stop-color="#ff61c5"/><stop offset="0.484" stop-color="#ff3c97"/><stop offset="0.569" stop-color="#ff1b6d"/><stop offset="0.697" stop-color="#ff0049"/><stop offset="0.917" stop-color="#ff002a"/><stop offset="0.996" stop-color="#ff0023"/><stop offset="0.999" stop-color="#ff0023"/><stop offset="1.000" stop-color="#ff0023"/></linearGradient><linearGradient id="g38"><stop offset="0.000" stop-color="#00fbff"/><stop offset="0.210" stop-color="#01c2ff"/><stop offset="0.332" stop-color="#a99aff"/><stop offset="0.389" stop-color="#ff85fe"/><stop offset="0.430" stop-color="#ff5dca"/><stop offset="0.487" stop-color="#ff399b"/><stop offset="0.571" stop-color="#ff1971"/><stop offset="0.694" stop-color="#ff004d"/><stop offset="0.909" stop-color="#ff002d"/><stop offset="0.999" stop-color="#ff0025"/><stop offset="1.000" stop-color="#ff0025"/></linearGradient><linearGradient id="g39"><stop offset="0.000" stop-color="#00f2ff"/><stop offset="0.210" stop-color="#00baff"/><stop offset="0.327" stop-color="#9a94ff"/><stop offset="0.395" stop-color="#fe7cff"/><stop offset="0.441" stop-color="#ff53c7"/><stop offset="0.503" stop-color="#ff3097"/><stop offset="0.593" stop-color="#ff126d"/><stop offset="0.694" stop-color="#ff0050"/><stop offset="0.903" stop-color="#ff0030"/><stop offset="0.999" stop-color="#ff0027"/><stop offset="1.000" stop-color="#ff0027"/></linearGradient><linearGradient id="g40"><stop offset="0.000" stop-color="#00eaff"/><stop offset="0.210" stop-color="#00b2ff"/><stop offset="0.305" stop-color="#7795ff"/><stop offset="0.400" stop-color="#fd74ff"/><stop offset="0.452" stop-color="#ff4ac4"/><stop offset="0.514" stop-color="#ff2a96"/><stop offset="0.610" stop-color="#ff0d6b"/><stop offset="0.688" stop-color="#ff0055"/><stop offset="0.893" stop-color="#ff0033"/><stop offset="0.999" stop-color="#ff0029"/><stop offset="1.000" stop-color="#ff0029"/></linearGradient><linearGradient id="g41"><stop offset="0.000" stop-color="#00e2ff"/><stop offset="0.215" stop-color="#03aaff"/><stop offset="0.348" stop-color="#ab80ff"/><stop offset="0.405" stop-color="#fb6cff"/><stop offset="0.419" stop-color="#ff61f0"/><stop offset="0.471" stop-color="#ff3dba"/><stop offset="0.544" stop-color="#ff1e8b"/><stop offset="0.650" stop-color="#ff0362"/><stop offset="0.822" stop-color="#ff003f"/><stop offset="0.999" stop-color="#ff002b"/><stop offset="1.000" stop-color="#ff002b"/></linearGradient><linearGradient id="g42"><stop offset="0.000" stop-color="#00dbff"/><stop offset="0.215" stop-color="#01a3ff"/><stop offset="0.354" stop-color="#ac78ff"/><stop offset="0.416" stop-color="#ff62fc"/><stop offset="0.463" stop-color="#ff40c8"/><stop offset="0.531" stop-color="#ff2197"/><stop offset="0.631" stop-color="#ff056c"/><stop offset="0.694" stop-color="#ff005a"/><stop offset="0.893" stop-color="#ff0038"/><stop offset="0.999" stop-color="#ff002d"/><stop offset="1.000" stop-color="#ff002c"/></linearGradient><linearGradient id="g43"><stop offset="0.000" stop-color="#00d4ff"/><stop offset="0.215" stop-color="#009dff"/><stop offset="0.348" stop-color="#9f74ff"/><stop offset="0.422" stop-color="#ff5bfe"/><stop offset="0.468" stop-color="#ff3cca"/><stop offset="0.536" stop-color="#ff1e99"/><stop offset="0.637" stop-color="#ff036e"/><stop offset="0.792" stop-color="#ff0049"/><stop offset="0.996" stop-color="#ff002f"/><stop offset="0.999" stop-color="#ff002f"/><stop offset="1.000" stop-color="#ff002e"/></linearGradient><linearGradient id="g44"><stop offset="0.000" stop-color="#00cdff"/><stop offset="0.215" stop-color="#0096ff"/><stop offset="0.332" stop-color="#8574ff"/><stop offset="0.427" stop-color="#ff55ff"/><stop offset="0.473" stop-color="#ff37cc"/><stop offset="0.541" stop-color="#ff1a9c"/><stop offset="0.642" stop-color="#ff0170"/><stop offset="0.797" stop-color="#ff004b"/><stop offset="0.996" stop-color="#ff0031"/><stop offset="0.999" stop-color="#ff0031"/><stop offset="1.000" stop-color="#ff0030"/></linearGradient><linearGradient id="g45"><stop offset="0.000" stop-color="#00c7ff"/><stop offset="0.220" stop-color="#038fff"/><stop offset="0.365" stop-color="#a865ff"/><stop offset="0.433" stop-color="#fe4eff"/><stop offset="0.490" stop-color="#ff2dc4"/><stop offset="0.563" stop-color="#ff1295"/><stop offset="0.653" stop-color="#ff0070"/><stop offset="0.814" stop-color="#ff004b"/><stop offset="0.996" stop-color="#ff0033"/><stop offset="0.999" stop-color="#ff0033"/><stop offset="1.000" stop-color="#ff0032"/></linearGradient><linearGradient id="g46"><stop offset="0.000" stop-color="#00c0ff"/><stop offset="0.220" stop-color="#018aff"/><stop offset="0.370" stop-color="#a95eff"/><stop offset="0.438" stop-color="#fd48ff"/><stop offset="0.501" stop-color="#ff27c2"/><stop offset="0.580" stop-color="#ff0c91"/><stop offset="0.648" stop-color="#ff0076"/><stop offset="0.803" stop-color="#ff004f"/><stop offset="0.996" stop-color="#ff0035"/><stop offset="0.999" stop-color="#ff0034"/><stop offset="1.000" stop-color="#ff0034"/></linearGradient><linearGradient id="g47"><stop offset="0.000" stop-color="#00bbff"/><stop offset="0.220" stop-color="#0085ff"/><stop offset="0.370" stop-color="#a35aff"/><stop offset="0.444" stop-color="#fc42ff"/><stop offset="0.463" stop-color="#ff38ec"/><stop offset="0.520" stop-color="#ff1eba"/><stop offset="0.604" stop-color="#ff058b"/><stop offset="0.661" stop-color="#ff0075"/><stop offset="0.822" stop-color="#ff004f"/><stop offset="0.999" stop-color="#ff0036"/><stop offset="1.000" stop-color="#ff0036"/></linearGradient><linearGradient id="g48"><stop offset="0.000" stop-color="#00b5ff"/><stop offset="0.220" stop-color="#0080ff"/><stop offset="0.359" stop-color="#9159ff"/><stop offset="0.454" stop-color="#ff3bfd"/><stop offset="0.506" stop-color="#ff21ca"/><stop offset="0.580" stop-color="#ff0a9b"/><stop offset="0.637" stop-color="#ff0082"/><stop offset="0.776" stop-color="#ff005a"/><stop offset="0.996" stop-color="#ff0039"/><stop offset="0.999" stop-color="#ff0038"/><stop offset="1.000" stop-color="#ff0038"/></linearGradient><linearGradient id="g49"><stop offset="0.000" stop-color="#00afff"/><stop offset="0.226" stop-color="#0379ff"/><stop offset="0.386" stop-color="#ab4dff"/><stop offset="0.460" stop-color="#ff36fe"/><stop offset="0.517" stop-color="#ff1bc7"/><stop offset="0.596" stop-color="#ff0497"/><stop offset="0.659" stop-color="#ff007e"/><stop offset="0.808" stop-color="#ff0056"/><stop offset="0.996" stop-color="#ff003b"/><stop offset="0.999" stop-color="#ff003a"/><stop offset="1.000" stop-color="#ff003a"/></linearGradient><linearGradient id="g50"><stop offset="0.000" stop-color="#00aaff"/><stop offset="0.226" stop-color="#0175ff"/><stop offset="0.392" stop-color="#ab47ff"/><stop offset="0.465" stop-color="#ff31ff"/><stop offset="0.522" stop-color="#ff18c9"/><stop offset="0.601" stop-color="#ff0299"/><stop offset="0.718" stop-color="#ff006e"/><stop offset="0.901" stop-color="#ff0049"/><stop offset="0.996" stop-color="#ff003d"/><stop offset="0.999" stop-color="#ff003c"/><stop offset="1.000" stop-color="#ff003c"/></linearGradient><linearGradient id="g51"><stop offset="0.000" stop-color="#00a5ff"/><stop offset="0.226" stop-color="#0071ff"/><stop offset="0.392" stop-color="#a644ff"/><stop offset="0.471" stop-color="#fe2cff"/><stop offset="0.533" stop-color="#ff13c7"/><stop offset="0.612" stop-color="#ff0098"/><stop offset="0.735" stop-color="#ff006d"/><stop offset="0.922" stop-color="#ff0048"/><stop offset="0.996" stop-color="#ff003f"/><stop offset="0.999" stop-color="#ff003e"/><stop offset="1.000" stop-color="#ff003e"/></linearGradient><linearGradient id="g52"><stop offset="0.000" stop-color="#00a0ff"/><stop offset="0.226" stop-color="#006dff"/><stop offset="0.381" stop-color="#9643ff"/><stop offset="0.476" stop-color="#fd27ff"/><stop offset="0.544" stop-color="#ff0ec4"/><stop offset="0.612" stop-color="#ff009d"/><stop offset="0.729" stop-color="#ff0072"/><stop offset="0.912" stop-color="#ff004c"/><stop offset="0.996" stop-color="#ff0041"/><stop offset="0.999" stop-color="#ff0041"/><stop offset="1.000" stop-color="#ff0040"/></linearGradient><linearGradient id="g53"><stop offset="0.000" stop-color="#009cff"/><stop offset="0.231" stop-color="#0367ff"/><stop offset="0.408" stop-color="#ad38ff"/><stop offset="0.487" stop-color="#ff21fc"/><stop offset="0.550" stop-color="#ff0bc6"/><stop offset="0.607" stop-color="#ff00a4"/><stop offset="0.718" stop-color="#ff0078"/><stop offset="0.890" stop-color="#ff0052"/><stop offset="0.996" stop-color="#ff0043"/><stop offset="0.999" stop-color="#ff0043"/><stop offset="1.000" stop-color="#ff0042"/></linearGradient><linearGradient id="g54"><stop offset="0.000" stop-color="#0097ff"/><stop offset="0.231" stop-color="#0163ff"/><stop offset="0.408" stop-color="#a835ff"/><stop offset="0.493" stop-color="#ff1dfd"/><stop offset="0.555" stop-color="#ff08c7"/><stop offset="0.601" stop-color="#ff00ab"/><stop offset="0.707" stop-color="#ff007f"/><stop offset="0.873" stop-color="#ff0057"/><stop offset="0.996" stop-color="#ff0045"/><stop offset="0.999" stop-color="#ff0045"/><stop offset="1.000" stop-color="#ff0044"/></linearGradient><linearGradient id="g55"><stop offset="0.000" stop-color="#0093ff"/><stop offset="0.231" stop-color="#0060ff"/><stop offset="0.414" stop-color="#a931ff"/><stop offset="0.498" stop-color="#ff19fe"/><stop offset="0.561" stop-color="#ff05c9"/><stop offset="0.612" stop-color="#ff00aa"/><stop offset="0.724" stop-color="#ff007d"/><stop offset="0.895" stop-color="#ff0056"/><stop offset="0.996" stop-color="#ff0047"/><stop offset="0.999" stop-color="#ff0047"/><stop offset="1.000" stop-color="#ff0046"/></linearGradient><linearGradient id="g56"><stop offset="0.000" stop-color="#008fff"/><stop offset="0.231" stop-color="#005cff"/><stop offset="0.408" stop-color="#9f30ff"/><stop offset="0.503" stop-color="#ff15ff"/><stop offset="0.571" stop-color="#ff00c7"/><stop offset="0.661" stop-color="#ff0097"/><stop offset="0.795" stop-color="#ff006d"/><stop offset="0.999" stop-color="#ff0049"/><stop offset="1.000" stop-color="#ff0048"/></linearGradient><linearGradient id="g57"><stop offset="0.000" stop-color="#008bff"/><stop offset="0.237" stop-color="#0358ff"/><stop offset="0.424" stop-color="#aa28ff"/><stop offset="0.509" stop-color="#fe11ff"/><stop offset="0.577" stop-color="#ff00c8"/><stop offset="0.667" stop-color="#ff0099"/><stop offset="0.800" stop-color="#ff006f"/><stop offset="0.999" stop-color="#ff004b"/><stop offset="1.000" stop-color="#ff004b"/></linearGradient><linearGradient id="g58"><stop offset="0.000" stop-color="#0087ff"/><stop offset="0.237" stop-color="#0254ff"/><stop offset="0.430" stop-color="#ab24ff"/><stop offset="0.520" stop-color="#ff0cfc"/><stop offset="0.571" stop-color="#ff00d1"/><stop offset="0.661" stop-color="#ff009f"/><stop offset="0.789" stop-color="#ff0074"/><stop offset="0.988" stop-color="#ff004e"/><stop offset="0.996" stop-color="#ff004d"/><stop offset="0.999" stop-color="#ff004d"/><stop offset="1.000" stop-color="#ff004d"/></linearGradient><linearGradient id="g59"><stop offset="0.000" stop-color="#0083ff"/><stop offset="0.237" stop-color="#0151ff"/><stop offset="0.435" stop-color="#ab21ff"/><stop offset="0.525" stop-color="#ff08fd"/><stop offset="0.571" stop-color="#ff00d6"/><stop offset="0.656" stop-color="#ff00a6"/><stop offset="0.784" stop-color="#ff0079"/><stop offset="0.977" stop-color="#ff0052"/><stop offset="0.996" stop-color="#ff004f"/><stop offset="0.999" stop-color="#ff004f"/><stop offset="1.000" stop-color="#ff004f"/></linearGradient><linearGradient id="g60"><stop offset="0.000" stop-color="#0080ff"/><stop offset="0.237" stop-color="#004eff"/><stop offset="0.430" stop-color="#a220ff"/><stop offset="0.531" stop-color="#ff05fe"/><stop offset="0.571" stop-color="#ff00dc"/><stop offset="0.656" stop-color="#ff00aa"/><stop offset="0.778" stop-color="#ff007d"/><stop offset="0.966" stop-color="#ff0056"/><stop offset="0.996" stop-color="#ff0051"/><stop offset="0.999" stop-color="#ff0051"/><stop offset="1.000" stop-color="#ff0051"/></linearGradient><linearGradient id="g61"><stop offset="0.000" stop-color="#007cff"/><stop offset="0.242" stop-color="#034aff"/><stop offset="0.446" stop-color="#ad19ff"/><stop offset="0.536" stop-color="#ff02ff"/><stop offset="0.604" stop-color="#ff00ca"/><stop offset="0.699" stop-color="#ff009b"/><stop offset="0.844" stop-color="#ff006f"/><stop offset="0.999" stop-color="#ff0053"/><stop offset="1.000" stop-color="#ff0053"/></linearGradient><linearGradient id="g62"><stop offset="0.000" stop-color="#0079ff"/><stop offset="0.242" stop-color="#0247ff"/><stop offset="0.452" stop-color="#ad16ff"/><stop offset="0.541" stop-color="#fe00ff"/><stop offset="0.615" stop-color="#ff00c8"/><stop offset="0.716" stop-color="#ff0098"/><stop offset="0.865" stop-color="#ff006d"/><stop offset="0.999" stop-color="#ff0055"/><stop offset="1.000" stop-color="#ff0055"/></linearGradient><linearGradient id="g63"><stop offset="0.000" stop-color="#0075ff"/><stop offset="0.242" stop-color="#0145ff"/><stop offset="0.452" stop-color="#a914ff"/><stop offset="0.541" stop-color="#f800ff"/><stop offset="0.555" stop-color="#ff00f9"/><stop offset="0.629" stop-color="#ff00c5"/><stop offset="0.735" stop-color="#ff0095"/><stop offset="0.890" stop-color="#ff006a"/><stop offset="0.996" stop-color="#ff0058"/><stop offset="0.999" stop-color="#ff0057"/><stop offset="1.000" stop-color="#ff0057"/></linearGradient><linearGradient id="g64"><stop offset="0.000" stop-color="#0072ff"/><stop offset="0.242" stop-color="#0042ff"/><stop offset="0.452" stop-color="#a512ff"/><stop offset="0.536" stop-color="#ee00ff"/><stop offset="0.555" stop-color="#ff00ff"/><stop offset="0.629" stop-color="#ff00c9"/><stop offset="0.735" stop-color="#ff0098"/><stop offset="0.890" stop-color="#ff006d"/><stop offset="0.996" stop-color="#ff005a"/><stop offset="0.999" stop-color="#ff0059"/><stop offset="1.000" stop-color="#ff0059"/></linearGradient><linearGradient id="g65"><stop offset="0.000" stop-color="#006fff"/><stop offset="0.248" stop-color="#033eff"/><stop offset="0.463" stop-color="#aa0eff"/><stop offset="0.531" stop-color="#e400ff"/><stop offset="0.561" stop-color="#fe00ff"/><stop offset="0.639" stop-color="#ff00c7"/><stop offset="0.746" stop-color="#ff0097"/><stop offset="0.901" stop-color="#ff006d"/><stop offset="0.996" stop-color="#ff005c"/><stop offset="0.999" stop-color="#ff005b"/><stop offset="1.000" stop-color="#ff005b"/></linearGradient><linearGradient id="g66"><stop offset="0.000" stop-color="#006cff"/><stop offset="0.248" stop-color="#023cff"/><stop offset="0.468" stop-color="#aa0bff"/><stop offset="0.525" stop-color="#da00ff"/><stop offset="0.571" stop-color="#ff00fc"/><stop offset="0.650" stop-color="#ff00c6"/><stop offset="0.762" stop-color="#ff0095"/><stop offset="0.928" stop-color="#ff006a"/><stop offset="0.996" stop-color="#ff005e"/><stop offset="0.999" stop-color="#ff005e"/><stop offset="1.000" stop-color="#ff005d"/></linearGradient><linearGradient id="g67"><stop offset="0.000" stop-color="#0069ff"/><stop offset="0.248" stop-color="#013aff"/><stop offset="0.473" stop-color="#ab08ff"/><stop offset="0.525" stop-color="#d500ff"/><stop offset="0.577" stop-color="#ff00fd"/><stop offset="0.656" stop-color="#ff00c7"/><stop offset="0.767" stop-color="#ff0096"/><stop offset="0.933" stop-color="#ff006b"/><stop offset="0.996" stop-color="#ff0060"/><stop offset="0.999" stop-color="#ff0060"/><stop offset="1.000" stop-color="#ff005f"/></linearGradient><linearGradient id="g68"><stop offset="0.000" stop-color="#0067ff"/><stop offset="0.248" stop-color="#0037ff"/><stop offset="0.473" stop-color="#a706ff"/><stop offset="0.520" stop-color="#cc00ff"/><stop offset="0.582" stop-color="#ff00fe"/><stop offset="0.661" stop-color="#ff00c8"/><stop offset="0.773" stop-color="#ff0098"/><stop offset="0.939" stop-color="#ff006d"/><stop offset="0.996" stop-color="#ff0062"/><stop offset="0.999" stop-color="#ff0062"/><stop offset="1.000" stop-color="#ff0062"/></linearGradient><linearGradient id="g69"><stop offset="0.000" stop-color="#0064ff"/><stop offset="0.253" stop-color="#0334ff"/><stop offset="0.484" stop-color="#ac02ff"/><stop offset="0.590" stop-color="#ff00fc"/><stop offset="0.669" stop-color="#ff00c8"/><stop offset="0.781" stop-color="#ff0098"/><stop offset="0.947" stop-color="#ff006d"/><stop offset="0.999" stop-color="#ff0064"/><stop offset="1.000" stop-color="#ff0064"/></linearGradient><linearGradient id="g70"><stop offset="0.000" stop-color="#0061ff"/><stop offset="0.253" stop-color="#0232ff"/><stop offset="0.490" stop-color="#ac00ff"/><stop offset="0.596" stop-color="#ff00fd"/><stop offset="0.675" stop-color="#ff00c9"/><stop offset="0.792" stop-color="#ff0098"/><stop offset="0.963" stop-color="#ff006c"/><stop offset="0.999" stop-color="#ff0066"/><stop offset="1.000" stop-color="#ff0066"/></linearGradient><linearGradient id="g71"><stop offset="0.000" stop-color="#005fff"/><stop offset="0.253" stop-color="#0130ff"/><stop offset="0.490" stop-color="#a900ff"/><stop offset="0.601" stop-color="#ff00fe"/><stop offset="0.686" stop-color="#ff00c7"/><stop offset="0.803" stop-color="#ff0097"/><stop offset="0.974" stop-color="#ff006d"/><stop offset="0.999" stop-color="#ff0068"/><stop offset="1.000" stop-color="#ff0068"/></linearGradient><linearGradient id="g72"><stop offset="0.000" stop-color="#005cff"/><stop offset="0.253" stop-color="#002eff"/><stop offset="0.490" stop-color="#a500ff"/><stop offset="0.607" stop-color="#ff00ff"/><stop offset="0.691" stop-color="#ff00c8"/><stop offset="0.808" stop-color="#ff0098"/><stop offset="0.985" stop-color="#ff006d"/><stop offset="0.999" stop-color="#ff006a"/><stop offset="1.000" stop-color="#ff006a"/></linearGradient><linearGradient id="g73"><stop offset="0.000" stop-color="#005aff"/><stop offset="0.259" stop-color="#032bff"/><stop offset="0.479" stop-color="#9a00ff"/><stop offset="0.612" stop-color="#ff00ff"/><stop offset="0.702" stop-color="#ff00c7"/><stop offset="0.824" stop-color="#ff0096"/><stop offset="0.996" stop-color="#ff006d"/><stop offset="0.999" stop-color="#ff006d"/><stop offset="1.000" stop-color="#ff006c"/></linearGradient><linearGradient id="g74"><stop offset="0.000" stop-color="#0057ff"/><stop offset="0.259" stop-color="#0229ff"/><stop offset="0.473" stop-color="#9300ff"/><stop offset="0.618" stop-color="#fe00ff"/><stop offset="0.713" stop-color="#ff00c5"/><stop offset="0.835" stop-color="#ff0096"/><stop offset="0.996" stop-color="#ff006f"/><stop offset="0.999" stop-color="#ff006f"/><stop offset="1.000" stop-color="#ff006e"/></linearGradient><linearGradient id="g75"><stop offset="0.000" stop-color="#0055ff"/><stop offset="0.259" stop-color="#0127ff"/><stop offset="0.468" stop-color="#8c00ff"/><stop offset="0.629" stop-color="#ff00fd"/><stop offset="0.718" stop-color="#ff00c6"/><stop offset="0.846" stop-color="#ff0095"/><stop offset="0.996" stop-color="#ff0071"/><stop offset="0.999" stop-color="#ff0071"/><stop offset="1.000" stop-color="#ff0071"/></linearGradient><linearGradient id="g76"><stop offset="0.000" stop-color="#0053ff"/><stop offset="0.259" stop-color="#0026ff"/><stop offset="0.463" stop-color="#8500ff"/><stop offset="0.634" stop-color="#ff00fd"/><stop offset="0.724" stop-color="#ff00c7"/><stop offset="0.852" stop-color="#ff0096"/><stop offset="0.996" stop-color="#ff0074"/><stop offset="0.999" stop-color="#ff0073"/><stop offset="1.000" stop-color="#ff0073"/></linearGradient><linearGradient id="g77"><stop offset="0.000" stop-color="#0051ff"/><stop offset="0.264" stop-color="#0323ff"/><stop offset="0.457" stop-color="#7f00ff"/><stop offset="0.639" stop-color="#ff00fe"/><stop offset="0.729" stop-color="#ff00c8"/><stop offset="0.857" stop-color="#ff0098"/><stop offset="0.996" stop-color="#ff0076"/><stop offset="0.999" stop-color="#ff0075"/><stop offset="1.000" stop-color="#ff0075"/></linearGradient><linearGradient id="g78"><stop offset="0.000" stop-color="#004eff"/><stop offset="0.264" stop-color="#0221ff"/><stop offset="0.452" stop-color="#7800ff"/><stop offset="0.645" stop-color="#ff00ff"/><stop offset="0.735" stop-color="#ff00c9"/><stop offset="0.863" stop-color="#ff0099"/><stop offset="0.996" stop-color="#ff0078"/><stop offset="0.999" stop-color="#ff0078"/><stop offset="1.000" stop-color="#ff0077"/></linearGradient><linearGradient id="g79"><stop offset="0.000" stop-color="#004cff"/><stop offset="0.264" stop-color="#0120ff"/><stop offset="0.446" stop-color="#7200ff"/><stop offset="0.650" stop-color="#fe00ff"/><stop offset="0.746" stop-color="#ff00c8"/><stop offset="0.879" stop-color="#ff0097"/><stop offset="0.996" stop-color="#ff007a"/><stop offset="0.999" stop-color="#ff007a"/><stop offset="1.000" stop-color="#ff0079"/></linearGradient><linearGradient id="g80"><stop offset="0.000" stop-color="#004aff"/><stop offset="0.264" stop-color="#001eff"/><stop offset="0.441" stop-color="#6c00ff"/><stop offset="0.661" stop-color="#ff00fc"/><stop offset="0.756" stop-color="#ff00c6"/><stop offset="0.890" stop-color="#ff0096"/><stop offset="0.996" stop-color="#ff007d"/><stop offset="0.999" stop-color="#ff007c"/><stop offset="1.000" stop-color="#ff007c"/></linearGradient><linearGradient id="g81"><stop offset="0.000" stop-color="#0048ff"/><stop offset="0.269" stop-color="#031cff"/><stop offset="0.435" stop-color="#6700ff"/><stop offset="0.667" stop-color="#ff00fd"/><stop offset="0.762" stop-color="#ff00c7"/><stop offset="0.895" stop-color="#ff0097"/><stop offset="0.996" stop-color="#ff007f"/><stop offset="0.999" stop-color="#ff007e"/><stop offset="1.000" stop-color="#ff007e"/></linearGradient><linearGradient id="g82"><stop offset="0.000" stop-color="#0046ff"/><stop offset="0.269" stop-color="#021aff"/><stop offset="0.430" stop-color="#6100ff"/><stop offset="0.672" stop-color="#ff00fe"/><stop offset="0.767" stop-color="#ff00c8"/><stop offset="0.901" stop-color="#ff0098"/><stop offset="0.996" stop-color="#ff0081"/><stop offset="0.999" stop-color="#ff0080"/><stop offset="1.000" stop-color="#ff0080"/></linearGradient><linearGradient id="g83"><stop offset="0.000" stop-color="#0045ff"/><stop offset="0.269" stop-color="#0119ff"/><stop offset="0.424" stop-color="#5c00ff"/><stop offset="0.678" stop-color="#ff00fe"/><stop offset="0.773" stop-color="#ff00c9"/><stop offset="0.912" stop-color="#ff0098"/><stop offset="0.996" stop-color="#ff0083"/><stop offset="0.999" stop-color="#ff0083"/><stop offset="1.000" stop-color="#ff0082"/></linearGradient><linearGradient id="g84"><stop offset="0.000" stop-color="#0043ff"/><stop offset="0.269" stop-color="#0117ff"/><stop offset="0.419" stop-color="#5700ff"/><stop offset="0.683" stop-color="#ff00ff"/><stop offset="0.784" stop-color="#ff00c8"/><stop offset="0.922" stop-color="#ff0098"/><stop offset="0.996" stop-color="#ff0086"/><stop offset="0.999" stop-color="#ff0085"/><stop offset="1.000" stop-color="#ff0085"/></linearGradient><linearGradient id="g85"><stop offset="0.000" stop-color="#0041ff"/><stop offset="0.275" stop-color="#0315ff"/><stop offset="0.414" stop-color="#5200ff"/><stop offset="0.694" stop-color="#ff00fc"/><stop offset="0.795" stop-color="#ff00c6"/><stop offset="0.939" stop-color="#ff0096"/><stop offset="0.996" stop-color="#ff0088"/><stop offset="0.999" stop-color="#ff0087"/><stop offset="1.000" stop-color="#ff0087"/></linearGradient><linearGradient id="g86"><stop offset="0.000" stop-color="#003fff"/><stop offset="0.275" stop-color="#0214ff"/><stop offset="0.408" stop-color="#4d00ff"/><stop offset="0.688" stop-color="#fa00ff"/><stop offset="0.707" stop-color="#ff00f7"/><stop offset="0.814" stop-color="#ff00c2"/><stop offset="0.963" stop-color="#ff0092"/><stop offset="0.999" stop-color="#ff0089"/><stop offset="1.000" stop-color="#ff0089"/></linearGradient><linearGradient id="g87"><stop offset="0.000" stop-color="#003dff"/><stop offset="0.275" stop-color="#0112ff"/><stop offset="0.403" stop-color="#4800ff"/><stop offset="0.688" stop-color="#f600ff"/><stop offset="0.707" stop-color="#ff00fc"/><stop offset="0.814" stop-color="#ff00c5"/><stop offset="0.963" stop-color="#ff0094"/><stop offset="0.999" stop-color="#ff008c"/><stop offset="1.000" stop-color="#ff008b"/></linearGradient><linearGradient id="g88"><stop offset="0.000" stop-color="#003cff"/><stop offset="0.275" stop-color="#0111ff"/><stop offset="0.397" stop-color="#4300ff"/><stop offset="0.683" stop-color="#ee00ff"/><stop offset="0.713" stop-color="#ff00fc"/><stop offset="0.819" stop-color="#ff00c6"/><stop offset="0.969" stop-color="#ff0095"/><stop offset="0.999" stop-color="#ff008e"/><stop offset="1.000" stop-color="#ff008e"/></linearGradient><linearGradient id="g89"><stop offset="0.000" stop-color="#003aff"/><stop offset="0.280" stop-color="#030fff"/><stop offset="0.392" stop-color="#3f00ff"/><stop offset="0.683" stop-color="#eb00ff"/><stop offset="0.718" stop-color="#ff00fd"/><stop offset="0.824" stop-color="#ff00c7"/><stop offset="0.974" stop-color="#ff0096"/><stop offset="0.999" stop-color="#ff0090"/><stop offset="1.000" stop-color="#ff0090"/></linearGradient><linearGradient id="g90"><stop offset="0.000" stop-color="#0039ff"/><stop offset="0.280" stop-color="#020eff"/><stop offset="0.386" stop-color="#3a00ff"/><stop offset="0.683" stop-color="#e700ff"/><stop offset="0.724" stop-color="#ff00fe"/><stop offset="0.830" stop-color="#ff00c8"/><stop offset="0.980" stop-color="#ff0097"/><stop offset="0.999" stop-color="#ff0093"/><stop offset="1.000" stop-color="#ff0092"/></linearGradient><linearGradient id="g91"><stop offset="0.000" stop-color="#0037ff"/><stop offset="0.280" stop-color="#010dff"/><stop offset="0.381" stop-color="#3600ff"/><stop offset="0.683" stop-color="#e300ff"/><stop offset="0.729" stop-color="#ff00fe"/><stop offset="0.835" stop-color="#ff00c9"/><stop offset="0.985" stop-color="#ff0098"/><stop offset="0.999" stop-color="#ff0095"/><stop offset="1.000" stop-color="#ff0095"/></linearGradient><linearGradient id="g92"><stop offset="0.000" stop-color="#0035ff"/><stop offset="0.280" stop-color="#010bff"/><stop offset="0.376" stop-color="#3200ff"/><stop offset="0.678" stop-color="#dc00ff"/><stop offset="0.735" stop-color="#ff00ff"/><stop offset="0.841" stop-color="#ff00c9"/><stop offset="0.990" stop-color="#ff0099"/><stop offset="0.999" stop-color="#ff0097"/><stop offset="1.000" stop-color="#ff0097"/></linearGradient><linearGradient id="g93"><stop offset="0.000" stop-color="#0034ff"/><stop offset="0.286" stop-color="#0309ff"/><stop offset="0.370" stop-color="#2e00ff"/><stop offset="0.678" stop-color="#d900ff"/><stop offset="0.746" stop-color="#ff00fc"/><stop offset="0.857" stop-color="#ff00c6"/><stop offset="0.996" stop-color="#ff009a"/><stop offset="0.999" stop-color="#ff009a"/><stop offset="1.000" stop-color="#ff0099"/></linearGradient><linearGradient id="g94"><stop offset="0.000" stop-color="#0032ff"/><stop offset="0.286" stop-color="#0208ff"/><stop offset="0.365" stop-color="#2a00ff"/><stop offset="0.678" stop-color="#d600ff"/><stop offset="0.751" stop-color="#ff00fd"/><stop offset="0.863" stop-color="#ff00c7"/><stop offset="0.996" stop-color="#ff009d"/><stop offset="0.999" stop-color="#ff009c"/><stop offset="1.000" stop-color="#ff009c"/></linearGradient><linearGradient id="g95"><stop offset="0.000" stop-color="#0031ff"/><stop offset="0.286" stop-color="#0207ff"/><stop offset="0.365" stop-color="#2900ff"/><stop offset="0.683" stop-color="#d500ff"/><stop offset="0.756" stop-color="#ff00fd"/><stop offset="0.868" stop-color="#ff00c8"/><stop offset="0.996" stop-color="#ff009f"/><stop offset="0.999" stop-color="#ff009e"/><stop offset="1.000" stop-color="#ff009e"/></linearGradient><linearGradient id="g96"><stop offset="0.000" stop-color="#0030ff"/><stop offset="0.286" stop-color="#0106ff"/><stop offset="0.359" stop-color="#2500ff"/><stop offset="0.678" stop-color="#cf00ff"/><stop offset="0.762" stop-color="#ff00fe"/><stop offset="0.873" stop-color="#ff00c9"/><stop offset="0.996" stop-color="#ff00a1"/><stop offset="0.999" stop-color="#ff00a1"/><stop offset="1.000" stop-color="#ff00a0"/></linearGradient><linearGradient id="g97"><stop offset="0.000" stop-color="#002eff"/><stop offset="0.291" stop-color="#0305ff"/><stop offset="0.376" stop-color="#2c00ff"/><stop offset="0.699" stop-color="#d800ff"/><stop offset="0.767" stop-color="#ff00fe"/><stop offset="0.884" stop-color="#ff00c7"/><stop offset="0.996" stop-color="#ff00a4"/><stop offset="0.999" stop-color="#ff00a3"/><stop offset="1.000" stop-color="#ff00a3"/></linearGradient><linearGradient id="g98"><stop offset="0.000" stop-color="#002dff"/><stop offset="0.291" stop-color="#0204ff"/><stop offset="0.452" stop-color="#5100ff"/><stop offset="0.776" stop-color="#ff00fd"/><stop offset="0.893" stop-color="#ff00c7"/><stop offset="0.999" stop-color="#ff00a5"/><stop offset="1.000" stop-color="#ff00a5"/></linearGradient><linearGradient id="g99"><stop offset="0.000" stop-color="#002cff"/><stop offset="0.291" stop-color="#0203ff"/><stop offset="0.631" stop-color="#ad00ff"/><stop offset="0.781" stop-color="#ff00fe"/><stop offset="0.898" stop-color="#ff00c8"/><stop offset="0.999" stop-color="#ff00a8"/><stop offset="1.000" stop-color="#ff00a7"/></linearGradient><linearGradient id="g100"><stop offset="0.000" stop-color="#002aff"/><stop offset="0.291" stop-color="#0102ff"/><stop offset="0.631" stop-color="#aa00ff"/><stop offset="0.786" stop-color="#ff00fe"/><stop offset="0.903" stop-color="#ff00c9"/><stop offset="0.999" stop-color="#ff00aa"/><stop offset="1.000" stop-color="#ff00aa"/></linearGradient><linearGradient id="g101"><stop offset="0.000" stop-color="#0029ff"/><stop offset="0.297" stop-color="#0300ff"/><stop offset="0.642" stop-color="#ad00ff"/><stop offset="0.797" stop-color="#ff00fc"/><stop offset="0.920" stop-color="#ff00c6"/><stop offset="0.999" stop-color="#ff00ad"/><stop offset="1.000" stop-color="#ff00ac"/></linearGradient><linearGradient id="g102"><stop offset="0.000" stop-color="#0028ff"/><stop offset="0.297" stop-color="#0200ff"/><stop offset="0.648" stop-color="#ae00ff"/><stop offset="0.803" stop-color="#ff00fd"/><stop offset="0.925" stop-color="#ff00c6"/><stop offset="0.999" stop-color="#ff00af"/><stop offset="1.000" stop-color="#ff00af"/></linearGradient><linearGradient id="g103"><stop offset="0.000" stop-color="#0027ff"/><stop offset="0.297" stop-color="#0200ff"/><stop offset="0.648" stop-color="#ab00ff"/><stop offset="0.808" stop-color="#ff00fd"/><stop offset="0.931" stop-color="#ff00c7"/><stop offset="0.999" stop-color="#ff00b1"/><stop offset="1.000" stop-color="#ff00b1"/></linearGradient><linearGradient id="g104"><stop offset="0.000" stop-color="#0025ff"/><stop offset="0.297" stop-color="#0100ff"/><stop offset="0.653" stop-color="#ab00ff"/><stop offset="0.814" stop-color="#ff00fe"/><stop offset="0.936" stop-color="#ff00c8"/><stop offset="0.999" stop-color="#ff00b4"/><stop offset="1.000" stop-color="#ff00b3"/></linearGradient><linearGradient id="g105"><stop offset="0.000" stop-color="#0024ff"/><stop offset="0.291" stop-color="#0000ff"/><stop offset="0.582" stop-color="#8600ff"/><stop offset="0.819" stop-color="#ff00fe"/><stop offset="0.941" stop-color="#ff00c9"/><stop offset="0.999" stop-color="#ff00b6"/><stop offset="1.000" stop-color="#ff00b6"/></linearGradient><linearGradient id="g106"><stop offset="0.000" stop-color="#0023ff"/><stop offset="0.286" stop-color="#0000ff"/><stop offset="0.310" stop-color="#0600ff"/><stop offset="0.672" stop-color="#b000ff"/><stop offset="0.827" stop-color="#ff00fd"/><stop offset="0.955" stop-color="#ff00c7"/><stop offset="0.996" stop-color="#ff00b9"/><stop offset="0.999" stop-color="#ff00b9"/><stop offset="1.000" stop-color="#ff00b8"/></linearGradient><linearGradient id="g107"><stop offset="0.000" stop-color="#0022ff"/><stop offset="0.280" stop-color="#0000ff"/><stop offset="0.305" stop-color="#0300ff"/><stop offset="0.672" stop-color="#ae00ff"/><stop offset="0.833" stop-color="#ff00fe"/><stop offset="0.961" stop-color="#ff00c7"/><stop offset="0.996" stop-color="#ff00bc"/><stop offset="0.999" stop-color="#ff00bb"/><stop offset="1.000" stop-color="#ff00bb"/></linearGradient><linearGradient id="g108"><stop offset="0.000" stop-color="#0021ff"/><stop offset="0.275" stop-color="#0000ff"/><stop offset="0.305" stop-color="#0200ff"/><stop offset="0.672" stop-color="#ab00ff"/><stop offset="0.838" stop-color="#ff00fe"/><stop offset="0.966" stop-color="#ff00c8"/><stop offset="0.996" stop-color="#ff00be"/><stop offset="0.999" stop-color="#ff00be"/><stop offset="1.000" stop-color="#ff00bd"/></linearGradient><linearGradient id="g109"><stop offset="0.000" stop-color="#0020ff"/><stop offset="0.269" stop-color="#0000ff"/><stop offset="0.305" stop-color="#0200ff"/><stop offset="0.678" stop-color="#ac00ff"/><stop offset="0.849" stop-color="#ff00fc"/><stop offset="0.982" stop-color="#ff00c5"/><stop offset="0.996" stop-color="#ff00c1"/><stop offset="0.999" stop-color="#ff00c0"/><stop offset="1.000" stop-color="#ff00c0"/></linearGradient><linearGradient id="g110"><stop offset="0.000" stop-color="#001fff"/><stop offset="0.264" stop-color="#0000ff"/><stop offset="0.310" stop-color="#0400ff"/><stop offset="0.688" stop-color="#ae00ff"/><stop offset="0.854" stop-color="#ff00fc"/><stop offset="0.988" stop-color="#ff00c6"/><stop offset="0.996" stop-color="#ff00c3"/><stop offset="0.999" stop-color="#ff00c3"/><stop offset="1.000" stop-color="#ff00c2"/></linearGradient><linearGradient id="g111"><stop offset="0.000" stop-color="#001eff"/><stop offset="0.259" stop-color="#0000ff"/><stop offset="0.310" stop-color="#0300ff"/><stop offset="0.688" stop-color="#ac00ff"/><stop offset="0.860" stop-color="#ff00fd"/><stop offset="0.993" stop-color="#ff00c7"/><stop offset="0.996" stop-color="#ff00c6"/><stop offset="0.999" stop-color="#ff00c5"/><stop offset="1.000" stop-color="#ff00c5"/></linearGradient><linearGradient id="g112"><stop offset="0.000" stop-color="#001dff"/><stop offset="0.253" stop-color="#0000ff"/><stop offset="0.310" stop-color="#0200ff"/><stop offset="0.694" stop-color="#ac00ff"/><stop offset="0.865" stop-color="#ff00fd"/><stop offset="0.999" stop-color="#ff00c7"/><stop offset="1.000" stop-color="#ff00c7"/></linearGradient><linearGradient id="g113"><stop offset="0.000" stop-color="#001cff"/><stop offset="0.248" stop-color="#0000ff"/><stop offset="0.310" stop-color="#0200ff"/><stop offset="0.699" stop-color="#ad00ff"/><stop offset="0.871" stop-color="#ff00fe"/><stop offset="0.999" stop-color="#ff00ca"/><stop offset="1.000" stop-color="#ff00ca"/></linearGradient><linearGradient id="g114"><stop offset="0.000" stop-color="#001bff"/><stop offset="0.242" stop-color="#0000ff"/><stop offset="0.310" stop-color="#0100ff"/><stop offset="0.699" stop-color="#aa00ff"/><stop offset="0.876" stop-color="#ff00fe"/><stop offset="0.999" stop-color="#ff00cd"/><stop offset="1.000" stop-color="#ff00cc"/></linearGradient><linearGradient id="g115"><stop offset="0.000" stop-color="#001aff"/><stop offset="0.237" stop-color="#0000ff"/><stop offset="0.316" stop-color="#0300ff"/><stop offset="0.710" stop-color="#ad00ff"/><stop offset="0.887" stop-color="#ff00fc"/><stop offset="0.999" stop-color="#ff00cf"/><stop offset="1.000" stop-color="#ff00cf"/></linearGradient><linearGradient id="g116"><stop offset="0.000" stop-color="#0019ff"/><stop offset="0.231" stop-color="#0000ff"/><stop offset="0.316" stop-color="#0200ff"/><stop offset="0.716" stop-color="#ad00ff"/><stop offset="0.893" stop-color="#ff00fd"/><stop offset="0.999" stop-color="#ff00d2"/><stop offset="1.000" stop-color="#ff00d1"/></linearGradient><linearGradient id="g117"><stop offset="0.000" stop-color="#0018ff"/><stop offset="0.226" stop-color="#0000ff"/><stop offset="0.316" stop-color="#0200ff"/><stop offset="0.716" stop-color="#ab00ff"/><stop offset="0.898" stop-color="#ff00fd"/><stop offset="0.999" stop-color="#ff00d4"/><stop offset="1.000" stop-color="#ff00d4"/></linearGradient><linearGradient id="g118"><stop offset="0.000" stop-color="#0017ff"/><stop offset="0.220" stop-color="#0000ff"/><stop offset="0.316" stop-color="#0100ff"/><stop offset="0.721" stop-color="#ac00ff"/><stop offset="0.903" stop-color="#ff00fe"/><stop offset="0.999" stop-color="#ff00d7"/><stop offset="1.000" stop-color="#ff00d6"/></linearGradient><linearGradient id="g119"><stop offset="0.000" stop-color="#0016ff"/><stop offset="0.210" stop-color="#0000ff"/><stop offset="0.321" stop-color="#0300ff"/><stop offset="0.732" stop-color="#ae00ff"/><stop offset="0.909" stop-color="#ff00fe"/><stop offset="0.999" stop-color="#ff00d9"/><stop offset="1.000" stop-color="#ff00d9"/></linearGradient><linearGradient id="g120"><stop offset="0.000" stop-color="#0015ff"/><stop offset="0.204" stop-color="#0000ff"/><stop offset="0.321" stop-color="#0200ff"/><stop offset="0.732" stop-color="#ac00ff"/><stop offset="0.920" stop-color="#ff00fc"/><stop offset="0.999" stop-color="#ff00dc"/><stop offset="1.000" stop-color="#ff00db"/></linearGradient><linearGradient id="g121"><stop offset="0.000" stop-color="#0014ff"/><stop offset="0.199" stop-color="#0000ff"/><stop offset="0.321" stop-color="#0200ff"/><stop offset="0.737" stop-color="#ac00ff"/><stop offset="0.925" stop-color="#ff00fd"/><stop offset="0.999" stop-color="#ff00de"/><stop offset="1.000" stop-color="#ff00de"/></linearGradient><linearGradient id="g122"><stop offset="0.000" stop-color="#0013ff"/><stop offset="0.193" stop-color="#0000ff"/><stop offset="0.321" stop-color="#0100ff"/><stop offset="0.743" stop-color="#ad00ff"/><stop offset="0.931" stop-color="#ff00fd"/><stop offset="0.999" stop-color="#ff00e1"/><stop offset="1.000" stop-color="#ff00e0"/></linearGradient><linearGradient id="g123"><stop offset="0.000" stop-color="#0012ff"/><stop offset="0.188" stop-color="#0000ff"/><stop offset="0.327" stop-color="#0300ff"/><stop offset="0.748" stop-color="#ad00ff"/><stop offset="0.936" stop-color="#ff00fd"/><stop offset="0.999" stop-color="#ff00e4"/><stop offset="1.000" stop-color="#ff00e3"/></linearGradient><linearGradient id="g124"><stop offset="0.000" stop-color="#0011ff"/><stop offset="0.182" stop-color="#0000ff"/><stop offset="0.327" stop-color="#0200ff"/><stop offset="0.754" stop-color="#ad00ff"/><stop offset="0.941" stop-color="#ff00fe"/><stop offset="0.999" stop-color="#ff00e6"/><stop offset="1.000" stop-color="#ff00e6"/></linearGradient><linearGradient id="g125"><stop offset="0.000" stop-color="#0011ff"/><stop offset="0.177" stop-color="#0000ff"/><stop offset="0.327" stop-color="#0200ff"/><stop offset="0.759" stop-color="#ad00ff"/><stop offset="0.952" stop-color="#ff00fc"/><stop offset="0.999" stop-color="#ff00e9"/><stop offset="1.000" stop-color="#ff00e8"/></linearGradient><linearGradient id="g126"><stop offset="0.000" stop-color="#0010ff"/><stop offset="0.171" stop-color="#0000ff"/><stop offset="0.327" stop-color="#0100ff"/><stop offset="0.759" stop-color="#ab00ff"/><stop offset="0.958" stop-color="#ff00fc"/><stop offset="0.999" stop-color="#ff00eb"/><stop offset="1.000" stop-color="#ff00eb"/></linearGradient><linearGradient id="g127"><stop offset="0.000" stop-color="#000fff"/><stop offset="0.166" stop-color="#0000ff"/><stop offset="0.332" stop-color="#0300ff"/><stop offset="0.770" stop-color="#ae00ff"/><stop offset="0.963" stop-color="#ff00fd"/><stop offset="0.999" stop-color="#ff00ee"/><stop offset="1.000" stop-color="#ff00ee"/></linearGradient><linearGradient id="g128"><stop offset="0.000" stop-color="#000eff"/><stop offset="0.161" stop-color="#0000ff"/><stop offset="0.332" stop-color="#0200ff"/><stop offset="0.776" stop-color="#ae00ff"/><stop offset="0.969" stop-color="#ff00fd"/><stop offset="0.999" stop-color="#ff00f1"/><stop offset="1.000" stop-color="#ff00f0"/></linearGradient><linearGradient id="g129"><stop offset="0.000" stop-color="#000dff"/><stop offset="0.155" stop-color="#0000ff"/><stop offset="0.332" stop-color="#0200ff"/><stop offset="0.776" stop-color="#ac00ff"/><stop offset="0.974" stop-color="#ff00fe"/><stop offset="0.999" stop-color="#ff00f3"/><stop offset="1.000" stop-color="#ff00f3"/></linearGradient><linearGradient id="g130"><stop offset="0.000" stop-color="#000dff"/><stop offset="0.150" stop-color="#0000ff"/><stop offset="0.332" stop-color="#0200ff"/><stop offset="0.781" stop-color="#ac00ff"/><stop offset="0.980" stop-color="#ff00fe"/><stop offset="0.999" stop-color="#ff00f6"/><stop offset="1.000" stop-color="#ff00f6"/></linearGradient><linearGradient id="g131"><stop offset="0.000" stop-color="#000cff"/><stop offset="0.144" stop-color="#0000ff"/><stop offset="0.337" stop-color="#0300ff"/><stop offset="0.786" stop-color="#ad00ff"/><stop offset="0.990" stop-color="#ff00fc"/><stop offset="0.999" stop-color="#ff00f9"/><stop offset="1.000" stop-color="#ff00f8"/></linearGradient><linearGradient id="g132"><stop offset="0.000" stop-color="#000bff"/><stop offset="0.139" stop-color="#0000ff"/><stop offset="0.337" stop-color="#0200ff"/><stop offset="0.792" stop-color="#ad00ff"/><stop offset="0.996" stop-color="#ff00fd"/><stop offset="0.999" stop-color="#ff00fb"/><stop offset="1.000" stop-color="#ff00fb"/></linearGradient><linearGradient id="g133"><stop offset="0.000" stop-color="#000aff"/><stop offset="0.139" stop-color="#0000ff"/><stop offset="0.337" stop-color="#0200ff"/><stop offset="0.797" stop-color="#ad00ff"/><stop offset="0.996" stop-color="#ff00ff"/><stop offset="0.999" stop-color="#ff00fe"/><stop offset="1.000" stop-color="#ff00fe"/></linearGradient><linearGradient id="g134"><stop offset="0.000" stop-color="#000aff"/><stop offset="0.133" stop-color="#0000ff"/><stop offset="0.337" stop-color="#0200ff"/><stop offset="0.797" stop-color="#ab00ff"/><stop offset="0.996" stop-color="#fc00ff"/><stop offset="0.999" stop-color="#fd00ff"/><stop offset="1.000" stop-color="#fe00ff"/></linearGradient><linearGradient id="g135"><stop offset="0.000" stop-color="#0009ff"/><stop offset="0.128" stop-color="#0000ff"/><stop offset="0.343" stop-color="#0300ff"/><stop offset="0.808" stop-color="#ad00ff"/><stop offset="0.996" stop-color="#f900ff"/><stop offset="0.999" stop-color="#fb00ff"/><stop offset="1.000" stop-color="#fb00ff"/></linearGradient><linearGradient id="g136"><stop offset="0.000" stop-color="#0008ff"/><stop offset="0.122" stop-color="#0000ff"/><stop offset="0.343" stop-color="#0300ff"/><stop offset="0.814" stop-color="#ae00ff"/><stop offset="0.996" stop-color="#f700ff"/><stop offset="0.999" stop-color="#f800ff"/><stop offset="1.000" stop-color="#f800ff"/></linearGradient><linearGradient id="g137"><stop offset="0.000" stop-color="#0008ff"/><stop offset="0.122" stop-color="#0000ff"/><stop offset="0.343" stop-color="#0200ff"/><stop offset="0.814" stop-color="#ac00ff"/><stop offset="0.996" stop-color="#f400ff"/><stop offset="0.999" stop-color="#f500ff"/><stop offset="1.000" stop-color="#f600ff"/></linearGradient><clipPath id="locclip"><path d="M1485.5 718.4 L1485.5 718.4 L1485.4 718.4 L1485.3 718.5 L1485.2 718.5 L1485.2 718.6 L1485.0 718.7 L1484.9 718.7 L1484.8 718.8 L1484.7 718.8 L1484.5 718.9 L1484.3 718.9 L1484.2 719.0 L1484.0 719.0 L1483.8 719.0 L1483.6 719.1 L1483.3 719.1 L1483.1 719.0 L1482.7 719.0 L1482.4 718.9 L1482.1 718.9 L1481.7 718.9 L1481.2 718.7 L1480.7 718.5 L1479.9 718.1 L1479.0 717.5 L1478.0 716.8 L1476.9 716.0 L1475.6 715.1 L1474.1 714.0 L1472.5 712.7 L1470.5 711.0 L1468.1 709.1 L1465.6 707.0 L1463.1 704.9 L1460.7 702.8 L1458.5 701.0 L1456.6 699.4 L1455.0 698.1 L1453.5 696.8 L1452.0 695.6 L1450.4 694.3 L1448.6 692.8 L1446.7 691.2 L1444.7 689.5 L1442.5 687.8 L1440.3 686.0 L1438.1 684.1 L1435.7 682.2 L1433.3 680.2 L1430.9 678.2 L1428.3 676.1 L1425.7 673.9 L1423.0 671.6 L1420.2 669.1 L1417.2 666.6 L1414.2 663.9 L1411.1 661.1 L1407.9 658.2 L1404.5 655.1 L1401.1 651.9 L1397.6 648.5 L1394.0 645.0 L1390.3 641.4 L1386.5 637.5 L1382.5 633.2 L1378.2 628.4 L1373.6 623.2 L1368.8 617.7 L1363.8 611.7 L1358.6 605.4 L1353.2 598.7 L1347.8 591.6 L1342.1 584.2 L1336.3 576.3 L1330.3 568.1 L1324.3 559.5 L1318.1 550.5 L1311.9 541.3 L1305.5 531.6 L1299.0 521.5 L1292.5 511.0 L1285.9 500.3 L1279.3 489.5 L1272.9 478.6 L1266.5 467.6 L1260.0 456.3 L1253.6 444.9 L1247.2 433.4 L1241.2 422.0 L1235.4 410.8 L1229.9 399.7 L1224.7 388.6 L1219.7 377.5 L1214.9 366.6 L1210.4 356.0 L1206.1 345.8 L1202.1 335.9 L1198.4 326.2 L1195.0 316.8 L1191.8 307.8 L1188.9 299.1 L1186.2 290.9 L1183.9 283.2 L1181.8 275.8 L1180.0 268.9 L1178.4 262.3 L1177.1 256.1 L1175.9 250.2 L1175.0 244.6 L1174.3 239.5 L1173.8 234.7 L1173.5 230.1 L1173.4 225.9 L1173.5 221.8 L1173.7 218.0 L1174.1 214.4 L1174.7 211.0 L1175.4 207.9 L1176.3 205.0 L1177.4 202.3 L1178.6 199.8 L1179.9 197.4 L1181.5 195.3 L1183.1 193.3 L1184.9 191.5 L1186.7 189.9 L1188.7 188.5 L1190.7 187.2 L1192.9 186.1 L1195.2 185.2 L1197.6 184.4 L1199.9 183.6 L1202.4 183.0 L1205.0 182.5 L1207.6 182.1 L1210.3 181.8 L1213.0 181.5 L1215.7 181.3 L1218.5 181.1 L1221.3 180.9 L1224.2 180.8 L1227.1 180.8 L1230.0 180.7 L1232.9 180.7 L1235.8 180.7 L1238.6 180.7 L1241.5 180.7 L1244.4 180.8 L1247.4 180.8 L1250.3 180.9 L1253.3 181.0 L1256.3 181.1 L1259.3 181.3 L1262.3 181.4 L1265.4 181.6 L1268.5 181.8 L1271.7 182.0 L1274.9 182.2 L1278.1 182.4 L1281.4 182.7 L1284.7 182.9 L1288.1 183.2 L1291.5 183.5 L1295.0 183.8 L1298.5 184.1 L1302.1 184.4 L1305.7 184.8 L1309.4 185.1 L1313.2 185.5 L1317.0 185.9 L1320.8 186.2 L1324.8 186.6 L1328.8 187.1 L1332.8 187.5 L1337.0 187.9 L1341.2 188.4 L1345.5 188.8 L1349.8 189.3 L1354.3 189.8 L1358.8 190.3 L1363.4 190.8 L1368.0 191.3 L1372.8 191.8 L1377.6 192.4 L1382.5 192.9 L1387.5 193.5 L1392.6 194.1 L1397.7 194.6 L1403.0 195.2 L1408.3 195.8 L1413.8 196.5 L1419.3 197.1 L1424.9 197.7 L1430.6 198.4 L1436.3 199.0 L1442.2 199.7 L1448.2 200.4 L1454.2 201.1 L1460.3 201.8 L1466.5 202.5 L1472.9 203.3 L1479.2 204.0 L1485.7 204.7 L1492.3 205.5 L1498.9 206.3 L1505.7 207.1 L1512.5 207.8 L1519.4 208.6 L1526.3 209.4 L1533.4 210.2 L1540.5 211.1 L1547.6 211.9 L1554.9 212.7 L1562.2 213.6 L1569.5 214.4 L1576.8 215.2 L1584.2 216.1 L1591.7 217.0 L1599.2 217.8 L1606.6 218.7 L1614.1 219.6 L1621.5 220.4 L1628.8 221.3 L1636.0 222.1 L1643.3 222.9 L1650.5 223.8 L1657.6 224.6 L1664.7 225.4 L1671.9 226.2 L1679.0 227.1 L1686.1 227.9 L1693.2 228.7 L1700.1 229.5 L1706.9 230.3 L1713.5 231.0 L1720.0 231.8 L1726.5 232.5 L1732.8 233.2 L1739.0 233.9 L1745.0 234.6 L1751.0 235.3 L1756.8 236.0 L1762.5 236.6 L1768.0 237.3 L1773.5 237.9 L1778.8 238.5 L1783.9 239.1 L1788.9 239.7 L1793.7 240.3 L1798.4 240.8 L1803.0 241.3 L1807.5 241.9 L1811.8 242.4 L1815.9 242.8 L1820.0 243.3 L1823.9 243.7 L1827.7 244.2 L1831.5 244.6 L1835.1 245.0 L1838.6 245.4 L1842.0 245.8 L1845.3 246.2 L1848.6 246.6 L1851.7 247.0 L1854.9 247.3 L1857.9 247.7 L1860.9 248.0 L1863.8 248.3 L1866.6 248.7 L1869.3 249.0 L1872.0 249.3 L1874.6 249.6 L1877.1 249.9 L1879.5 250.2 L1881.9 250.4 L1884.2 250.7 L1886.4 251.0 L1888.5 251.2 L1890.5 251.4 L1892.5 251.6 L1894.4 251.9 L1896.2 252.1 L1897.9 252.3 L1899.4 252.4 L1900.8 252.6 L1902.2 252.8 L1903.8 252.9 L1905.5 253.1 L1907.4 253.4 L1909.5 253.6 L1911.7 253.9 L1914.0 254.1 L1916.1 254.4 L1918.2 254.6 L1920.2 254.8 L1922.2 255.1 L1924.2 255.3 L1926.1 255.5 L1927.8 255.7 L1929.2 255.9 L1930.4 256.0 L1931.3 256.1 L1932.0 256.2 L1932.6 256.3 L1933.1 256.3 L1933.5 256.4Z"/></clipPath><clipPath id="plotclip"><rect x="1172.5" y="169.8" width="733.7" height="564.4"/></clipPath><filter id="fblur" x="-2%" y="-2%" width="104%" height="104%"><feGaussianBlur stdDeviation="2.0"/></filter><linearGradient id="insb" x1="1657" y1="569" x2="1898" y2="722" gradientUnits="userSpaceOnUse"><stop offset="0" stop-color="#a8ff00"/><stop offset="0.5" stop-color="#ffff00"/><stop offset="1" stop-color="#ffb000"/></linearGradient><linearGradient id="insd" x1="1657" y1="561" x2="1898" y2="700" gradientUnits="userSpaceOnUse"><stop offset="0" stop-color="#649600"/><stop offset="0.5" stop-color="#989800"/><stop offset="1" stop-color="#986c00"/></linearGradient><linearGradient id="rshadow" x1="0" y1="0" x2="1" y2="0"><stop offset="0" stop-color="#000" stop-opacity="0"/><stop offset="0.6" stop-color="#000" stop-opacity="0.35"/><stop offset="1" stop-color="#000" stop-opacity="0.7"/></linearGradient><linearGradient id="tileg" x1="0" y1="0" x2="0" y2="1"><stop offset="0" stop-color="#ababab"/><stop offset="0.45" stop-color="#8c8c8c"/><stop offset="1" stop-color="#575757"/></linearGradient><linearGradient id="seltile" x1="0" y1="0" x2="0" y2="1"><stop offset="0" stop-color="#1c1c1c"/><stop offset="1" stop-color="#303030"/></linearGradient><linearGradient id="ctlg" x1="0" y1="0" x2="0" y2="1"><stop offset="0" stop-color="#a8a8a8"/><stop offset="1" stop-color="#6a6a6a"/></linearGradient><linearGradient id="ctlc" x1="0" y1="0" x2="0" y2="1"><stop offset="0" stop-color="#777"/><stop offset="1" stop-color="#a8a8a8"/></linearGradient><linearGradient id="tvl" x1="0" y1="0" x2="1" y2="1"><stop offset="0" stop-color="#f4f4f4"/><stop offset="1" stop-color="#d8d8d8"/></linearGradient><linearGradient id="tvd" x1="0" y1="0" x2="0" y2="1"><stop offset="0" stop-color="#3a3a3a"/><stop offset="1" stop-color="#111"/></linearGradient><linearGradient id="tvm" x1="0" y1="0" x2="1" y2="1"><stop offset="0" stop-color="#c8c8c8"/><stop offset="1" stop-color="#8a8a8a"/></linearGradient><linearGradient id="stg" x1="0" y1="0" x2="0" y2="1"><stop offset="0" stop-color="#1d6fc0"/><stop offset="1" stop-color="#16407a"/></linearGradient><linearGradient id="copg" x1="0" y1="0" x2="1" y2="1"><stop offset="0" stop-color="#8a6ad8"/><stop offset="1" stop-color="#3a9af0"/></linearGradient></defs>
<rect x="0.0" y="0.0" width="1920.0" height="25.0" fill="#f3f3f3"/>
<rect x="0.0" y="25.0" width="1920.0" height="74.0" fill="#232323"/>
<rect x="0.0" y="25.6" width="1920.0" height="1.2" fill="#161616"/>
<rect x="0.0" y="99.0" width="1920.0" height="975.0" fill="#333333"/>
<rect x="0.0" y="97.5" width="1920.0" height="2.0" fill="#262626"/>
<rect x="0.0" y="99.0" width="1.5" height="975.0" fill="#272727"/>
<rect x="0.0" y="1074.0" width="1920.0" height="72.0" fill="url(#botg)"/>
<rect x="0.0" y="1146.0" width="1920.0" height="54.0" fill="#eeeeee"/>
<path d="M10.5 3.4L15.1 8.0L10.5 12.6L5.9 8.0Z" fill="#f7c52a"/>
<path d="M15.5 7.9L20.1 12.5L15.5 17.1L10.9 12.5Z" fill="#3ccb3c"/>
<path d="M10.5 12.4L15.1 17.0L10.5 21.6L5.9 17.0Z" fill="#ec3b6e"/>
<path d="M5.5 7.9L10.1 12.5L5.5 17.1L0.9 12.5Z" fill="#3a9ee8"/>
<text x="26.0" y="18.3" font-size="15.0" fill="#2a2a2a" textLength="436.0" lengthAdjust="spacingAndGlyphs">Calman 2025 Calman Ultimate for Business 83 Days Remaining  - Untitled</text>
<line x1="1781.0" y1="12.5" x2="1793.0" y2="12.5" stroke="#222" stroke-width="1.0"/>
<rect x="1834.5" y="8.5" width="9" height="9" fill="none" stroke="#222" stroke-width="1" rx="1.5"/>
<path d="M1836.5 8.5V6.5H1845.5V15.5H1843.5" fill="none" stroke="#222" stroke-width="1"/>
<path d="M1886.5 6.5L1898.5 18.5M1898.5 6.5L1886.5 18.5" stroke="#222" stroke-width="1.1"/>
<path d="M1 25H206V53Q206 58 201 58H6Q1 58 1 53Z" fill="url(#redg)"/>
<path d="M0.8 25V53Q0.8 58.3 6 58.3H201Q206.3 58.3 206.3 53V25" fill="none" stroke="#5e5e5e" stroke-width="1"/>
<path d="M34.16 33.79L38.75 29.20L43.34 33.79 M46.56 37.01L51.15 41.60L46.56 46.19 M43.34 49.41L38.75 54.00L34.16 49.41 M30.94 46.19L26.35 41.60L30.94 37.01" fill="none" stroke="#fff" stroke-width="2.6" stroke-linecap="round" stroke-linejoin="round"/>
<path d="M38.8 34.2L41.6 37.1L38.8 40.0L35.9 37.1Z" fill="#fff"/>
<path d="M43.4 38.7L46.2 41.6L43.4 44.5L40.5 41.6Z" fill="#fff"/>
<path d="M38.8 43.3L41.6 46.2L38.8 49.1L35.9 46.2Z" fill="#fff"/>
<path d="M34.1 38.7L37.0 41.6L34.1 44.5L31.2 41.6Z" fill="#fff"/>
<text x="56.0" y="49.0" font-size="29.0" fill="#ffffff" textLength="96.0" lengthAdjust="spacingAndGlyphs">calman</text>
<circle cx="187" cy="42" r="11" fill="url(#ddred)"/>
<path d="M181.5 40H192.5L187 46Z" fill="#fff"/>
<rect x="213.0" y="39.0" width="1707.0" height="6.0" fill="url(#rainb)"/>
<rect x="-4" y="65.5" width="34" height="31" rx="4" fill="url(#playg)" stroke="#b0b0b0" stroke-width="1"/>
<circle cx="14" cy="81" r="11" fill="url(#circg)"/>
<path d="M11 75.5V86.5L18.5 81Z" fill="#fff"/>
<path d="M33.5 99V70Q33.5 65.5 38 65.5H131Q135.5 65.5 135.5 70V99" fill="url(#tabg)" stroke="#6e6e6e" stroke-width="1"/>
<line x1="98.5" y1="66.0" x2="98.5" y2="99.0" stroke="#6e6e6e" stroke-width="1.0"/>
<text x="40.0" y="87.5" font-size="13.6" fill="#dcdcdc" textLength="52.0" lengthAdjust="spacingAndGlyphs">History 1</text>
<circle cx="116" cy="83.5" r="11" fill="url(#plusg)"/>
<path d="M112 85H120M116 81V89" stroke="#8a8a8a" stroke-width="1"/>
<path d="M1278.0 99V69Q1278.0 65 1282.0 65H1435.0Q1439.0 65 1439.0 69V99Z" fill="url(#devg)"/>
<path d="M1278.0 99V69Q1278.0 65 1282.0 65H1285.0V99Z" fill="#10d010"/>
<text x="1288.0" y="78.2" font-size="11.3" fill="#f0f0f0" textLength="74.0" lengthAdjust="spacingAndGlyphs">X-Rite i1Pro 3</text>
<text x="1288.0" y="94.6" font-size="11.3" fill="#f0f0f0" textLength="63.0" lengthAdjust="spacingAndGlyphs">Direct View</text>
<circle cx="1377.0" cy="82.0" r="11" fill="url(#ddg)"/>
<path d="M1371.5 81.0H1382.5L1377.0 87.0Z" fill="#fff"/>
<line x1="1398.5" y1="66.0" x2="1398.5" y2="99.0" stroke="#404040" stroke-width="1.5"/>
<circle cx="1421.8" cy="82" r="14" fill="#0000f0" stroke="#e8e8ff" stroke-width="1"/>
<text x="1421.8" y="85.6" font-size="10.5" fill="#ffffff" textLength="19.0" lengthAdjust="spacingAndGlyphs" text-anchor="middle">718</text>
<path d="M1445.0 99V69Q1445.0 65 1449.0 65H1675.0Q1679.0 65 1679.0 69V99Z" fill="url(#devg)"/>
<path d="M1445.0 99V69Q1445.0 65 1449.0 65H1452.0V99Z" fill="#10d010"/>
<text x="1456.0" y="78.2" font-size="11.3" fill="#f0f0f0" textLength="190.5" lengthAdjust="spacingAndGlyphs">CalMAN Client 3 Pattern Generator</text>
<circle cx="1662.0" cy="82.0" r="11" fill="url(#ddg)"/>
<path d="M1656.5 81.0H1667.5L1662.0 87.0Z" fill="#fff"/>
<path d="M1687.0 99V69Q1687.0 65 1691.0 65H1843.0Q1847.0 65 1847.0 69V99Z" fill="url(#devg)"/>
<path d="M1687.0 99V69Q1687.0 65 1691.0 65H1694.0V99Z" fill="#e0e000"/>
<text x="1697.0" y="78.2" font-size="11.3" fill="#f0f0f0" textLength="118.0" lengthAdjust="spacingAndGlyphs">Direct Display Control</text>
<circle cx="1830.0" cy="82.0" r="11" fill="url(#ddg)"/>
<path d="M1824.5 81.0H1835.5L1830.0 87.0Z" fill="#fff"/>
<rect x="1852.5" y="65.5" width="36" height="30" rx="4" fill="url(#btng)" stroke="#a8a8a8" stroke-width="1"/>
<rect x="1890.5" y="65.5" width="36" height="30" rx="4" fill="url(#btng)" stroke="#a8a8a8" stroke-width="1"/>
<circle cx="1870.3" cy="80.7" r="11" fill="url(#circg)"/>
<rect x="1868.6" y="72.2" width="3.4" height="4" fill="#e8e8e8" transform="rotate(0.0 1870.3 80.7)"/><rect x="1868.6" y="72.2" width="3.4" height="4" fill="#e8e8e8" transform="rotate(45.0 1870.3 80.7)"/><rect x="1868.6" y="72.2" width="3.4" height="4" fill="#e8e8e8" transform="rotate(90.0 1870.3 80.7)"/><rect x="1868.6" y="72.2" width="3.4" height="4" fill="#e8e8e8" transform="rotate(135.0 1870.3 80.7)"/><rect x="1868.6" y="72.2" width="3.4" height="4" fill="#e8e8e8" transform="rotate(180.0 1870.3 80.7)"/><rect x="1868.6" y="72.2" width="3.4" height="4" fill="#e8e8e8" transform="rotate(225.0 1870.3 80.7)"/><rect x="1868.6" y="72.2" width="3.4" height="4" fill="#e8e8e8" transform="rotate(270.0 1870.3 80.7)"/><rect x="1868.6" y="72.2" width="3.4" height="4" fill="#e8e8e8" transform="rotate(315.0 1870.3 80.7)"/>
<circle cx="1870.3" cy="80.7" r="5.6" fill="none" stroke="#e8e8e8" stroke-width="2.6"/>
<circle cx="1905" cy="80.7" r="11" fill="url(#circg)"/>
<path d="M1908.5 75V86.5L1900.5 80.7Z" fill="#fff"/>
<text x="9.0" y="175.5" font-size="47.5" fill="#f2f2f2" textLength="383.0" lengthAdjust="spacingAndGlyphs">Saturation Sweeps</text>
<text x="143.0" y="236.7" font-size="20.5" fill="#f2f2f2" textLength="123.7" lengthAdjust="spacingAndGlyphs">dE Formula:</text>
<rect x="276.5" y="214" width="154.5" height="28.5" fill="url(#dropg)" stroke="#2a2a2a" stroke-width="1"/>
<text x="281.6" y="236.7" font-size="19.5" fill="#f0f0f0" textLength="40.0" lengthAdjust="spacingAndGlyphs">2000</text>
<path d="M413.5 225.5H424L418.8 231Z" fill="#111"/>
<text x="208.8" y="274.0" font-size="16.8" fill="#dcdcdc" textLength="91.0" lengthAdjust="spacingAndGlyphs" text-anchor="middle">DeltaE 2000</text>
<rect x="50.0" y="280.0" width="358.0" height="444.0" fill="#232323"/>
<line x1="97.7" y1="280.0" x2="97.7" y2="730.0" stroke="#a6a6a6" stroke-width="1.6"/>
<line x1="145.5" y1="280.0" x2="145.5" y2="730.0" stroke="#a6a6a6" stroke-width="1.6"/>
<line x1="193.2" y1="280.0" x2="193.2" y2="730.0" stroke="#a6a6a6" stroke-width="1.6"/>
<line x1="240.9" y1="280.0" x2="240.9" y2="730.0" stroke="#a6a6a6" stroke-width="1.6"/>
<line x1="288.7" y1="280.0" x2="288.7" y2="730.0" stroke="#a6a6a6" stroke-width="1.6"/>
<line x1="336.4" y1="280.0" x2="336.4" y2="730.0" stroke="#a6a6a6" stroke-width="1.6"/>
<line x1="384.1" y1="280.0" x2="384.1" y2="730.0" stroke="#a6a6a6" stroke-width="1.6"/>
<line x1="408.0" y1="280.0" x2="408.0" y2="724.0" stroke="#a6a6a6" stroke-width="1.6"/>
<line x1="43.0" y1="280.0" x2="408.0" y2="280.0" stroke="#a6a6a6" stroke-width="1.6"/>
<line x1="50.0" y1="280.0" x2="50.0" y2="729.0" stroke="#a6a6a6" stroke-width="1.6"/>
<line x1="43.0" y1="724.0" x2="408.0" y2="724.0" stroke="#a6a6a6" stroke-width="1.6"/>
<line x1="43.0" y1="280.0" x2="50.0" y2="280.0" stroke="#a6a6a6" stroke-width="1.6"/>
<line x1="43.0" y1="343.3" x2="50.0" y2="343.3" stroke="#a6a6a6" stroke-width="1.6"/>
<line x1="43.0" y1="406.6" x2="50.0" y2="406.6" stroke="#a6a6a6" stroke-width="1.6"/>
<line x1="43.0" y1="469.9" x2="50.0" y2="469.9" stroke="#a6a6a6" stroke-width="1.6"/>
<line x1="43.0" y1="533.2" x2="50.0" y2="533.2" stroke="#a6a6a6" stroke-width="1.6"/>
<line x1="43.0" y1="596.5" x2="50.0" y2="596.5" stroke="#a6a6a6" stroke-width="1.6"/>
<line x1="43.0" y1="659.8" x2="50.0" y2="659.8" stroke="#a6a6a6" stroke-width="1.6"/>
<line x1="43.0" y1="723.1" x2="50.0" y2="723.1" stroke="#a6a6a6" stroke-width="1.6"/>
<line x1="50.0" y1="724.0" x2="50.0" y2="730.0" stroke="#a6a6a6" stroke-width="1.6"/>
<text x="50.0" y="749.0" font-size="17.7" fill="#dcdcdc" text-anchor="middle">0</text>
<text x="97.7" y="749.0" font-size="17.7" fill="#dcdcdc" text-anchor="middle">2</text>
<text x="145.5" y="749.0" font-size="17.7" fill="#dcdcdc" text-anchor="middle">4</text>
<text x="193.2" y="749.0" font-size="17.7" fill="#dcdcdc" text-anchor="middle">6</text>
<text x="240.9" y="749.0" font-size="17.7" fill="#dcdcdc" text-anchor="middle">8</text>
<text x="288.7" y="749.0" font-size="17.7" fill="#dcdcdc" text-anchor="middle">10</text>
<text x="336.4" y="749.0" font-size="17.7" fill="#dcdcdc" text-anchor="middle">12</text>
<text x="384.1" y="749.0" font-size="17.7" fill="#dcdcdc" text-anchor="middle">14</text>
<text x="7.7" y="319.2" font-size="17.5" fill="#dcdcdc" textLength="41.0" lengthAdjust="spacingAndGlyphs">100%</text>
<text x="17.0" y="382.5" font-size="17.5" fill="#dcdcdc" textLength="31.7" lengthAdjust="spacingAndGlyphs">80%</text>
<text x="16.9" y="445.8" font-size="17.5" fill="#dcdcdc" textLength="31.8" lengthAdjust="spacingAndGlyphs">60%</text>
<text x="16.9" y="509.1" font-size="17.5" fill="#dcdcdc" textLength="31.8" lengthAdjust="spacingAndGlyphs">40%</text>
<text x="16.9" y="572.4" font-size="17.5" fill="#dcdcdc" textLength="31.8" lengthAdjust="spacingAndGlyphs">20%</text>
<text x="22.1" y="635.7" font-size="17.5" fill="#dcdcdc" textLength="26.6" lengthAdjust="spacingAndGlyphs">100</text>
<text x="39.7" y="699.0" font-size="17.5" fill="#dcdcdc" textLength="9.0" lengthAdjust="spacingAndGlyphs">0</text>
<rect x="51.0" y="285.0" width="72.5" height="7.6" fill="#050505"/>
<rect x="51.0" y="286.2" width="71.0" height="5.0" fill="url(#hb1)"/>
<rect x="51.0" y="293.0" width="71.3" height="7.6" fill="#050505"/>
<rect x="51.0" y="294.2" width="69.8" height="5.0" fill="url(#hb2)"/>
<rect x="51.0" y="301.0" width="49.7" height="7.6" fill="#050505"/>
<rect x="51.0" y="302.2" width="48.2" height="5.0" fill="url(#hb3)"/>
<rect x="51.0" y="309.0" width="91.7" height="7.6" fill="#050505"/>
<rect x="51.0" y="310.2" width="90.2" height="5.0" fill="url(#hb4)"/>
<rect x="51.0" y="317.0" width="45.7" height="7.6" fill="#050505"/>
<rect x="51.0" y="318.2" width="44.2" height="5.0" fill="url(#hb5)"/>
<rect x="51.0" y="325.0" width="37.7" height="7.6" fill="#050505"/>
<rect x="51.0" y="326.2" width="36.2" height="5.0" fill="url(#hb6)"/>
<rect x="51.0" y="348.3" width="78.4" height="7.6" fill="#050505"/>
<rect x="51.0" y="349.5" width="76.9" height="5.0" fill="url(#hb7)"/>
<rect x="51.0" y="356.3" width="64.8" height="7.6" fill="#050505"/>
<rect x="51.0" y="357.5" width="63.3" height="5.0" fill="url(#hb8)"/>
<rect x="51.0" y="364.3" width="49.4" height="7.6" fill="#050505"/>
<rect x="51.0" y="365.5" width="47.9" height="5.0" fill="url(#hb9)"/>
<rect x="51.0" y="372.3" width="69.7" height="7.6" fill="#050505"/>
<rect x="51.0" y="373.5" width="68.2" height="5.0" fill="url(#hb10)"/>
<rect x="51.0" y="380.3" width="62.7" height="7.6" fill="#050505"/>
<rect x="51.0" y="381.5" width="61.2" height="5.0" fill="url(#hb11)"/>
<rect x="51.0" y="388.3" width="34.5" height="7.6" fill="#050505"/>
<rect x="51.0" y="389.5" width="33.0" height="5.0" fill="url(#hb12)"/>
<rect x="51.0" y="411.6" width="83.5" height="7.6" fill="#050505"/>
<rect x="51.0" y="412.8" width="82.0" height="5.0" fill="url(#hb13)"/>
<rect x="51.0" y="419.6" width="55.1" height="7.6" fill="#050505"/>
<rect x="51.0" y="420.8" width="53.6" height="5.0" fill="url(#hb14)"/>
<rect x="51.0" y="427.6" width="74.0" height="7.6" fill="#050505"/>
<rect x="51.0" y="428.8" width="72.5" height="5.0" fill="url(#hb15)"/>
<rect x="51.0" y="435.6" width="58.4" height="7.6" fill="#050505"/>
<rect x="51.0" y="436.8" width="56.9" height="5.0" fill="url(#hb16)"/>
<rect x="51.0" y="443.6" width="72.5" height="7.6" fill="#050505"/>
<rect x="51.0" y="444.8" width="71.0" height="5.0" fill="url(#hb17)"/>
<rect x="51.0" y="451.6" width="37.5" height="7.6" fill="#050505"/>
<rect x="51.0" y="452.8" width="36.0" height="5.0" fill="url(#hb18)"/>
<rect x="51.0" y="474.9" width="87.0" height="7.6" fill="#050505"/>
<rect x="51.0" y="476.1" width="85.5" height="5.0" fill="url(#hb19)"/>
<rect x="51.0" y="482.9" width="45.1" height="7.6" fill="#050505"/>
<rect x="51.0" y="484.1" width="43.6" height="5.0" fill="url(#hb20)"/>
<rect x="51.0" y="490.9" width="81.8" height="7.6" fill="#050505"/>
<rect x="51.0" y="492.1" width="80.3" height="5.0" fill="url(#hb21)"/>
<rect x="51.0" y="498.9" width="59.5" height="7.6" fill="#050505"/>
<rect x="51.0" y="500.1" width="58.0" height="5.0" fill="url(#hb22)"/>
<rect x="51.0" y="506.9" width="68.1" height="7.6" fill="#050505"/>
<rect x="51.0" y="508.1" width="66.6" height="5.0" fill="url(#hb23)"/>
<rect x="51.0" y="514.9" width="37.5" height="7.6" fill="#050505"/>
<rect x="51.0" y="516.1" width="36.0" height="5.0" fill="url(#hb24)"/>
<rect x="51.0" y="538.2" width="74.3" height="7.6" fill="#050505"/>
<rect x="51.0" y="539.4" width="72.8" height="5.0" fill="url(#hb25)"/>
<rect x="51.0" y="546.2" width="38.9" height="7.6" fill="#050505"/>
<rect x="51.0" y="547.4" width="37.4" height="5.0" fill="url(#hb26)"/>
<rect x="51.0" y="554.2" width="76.9" height="7.6" fill="#050505"/>
<rect x="51.0" y="555.4" width="75.4" height="5.0" fill="url(#hb27)"/>
<rect x="51.0" y="562.2" width="74.0" height="7.6" fill="#050505"/>
<rect x="51.0" y="563.4" width="72.5" height="5.0" fill="url(#hb28)"/>
<rect x="51.0" y="570.2" width="58.4" height="7.6" fill="#050505"/>
<rect x="51.0" y="571.4" width="56.9" height="5.0" fill="url(#hb29)"/>
<rect x="51.0" y="578.2" width="47.3" height="7.6" fill="#050505"/>
<rect x="51.0" y="579.4" width="45.8" height="5.0" fill="url(#hb30)"/>
<rect x="51.0" y="650.2" width="104.2" height="7.2" fill="#050505"/>
<rect x="51.0" y="651.4" width="102.7" height="4.6" fill="url(#hb31)"/>
<text x="58.0" y="812.0" font-size="32.5" fill="#f2f2f2" textLength="268.0" lengthAdjust="spacingAndGlyphs">Avg dE2000: 2,66</text>
<text x="54.0" y="859.0" font-size="32.5" fill="#f2f2f2" textLength="277.0" lengthAdjust="spacingAndGlyphs">Max dE2000: 4,35</text>
<text x="17.6" y="914.4" font-size="32.7" fill="#f2f2f2" textLength="251.2" lengthAdjust="spacingAndGlyphs">Current Reading</text>
<text x="17.6" y="954.4" font-size="26.0" fill="#f2f2f2" textLength="117.4" lengthAdjust="spacingAndGlyphs">x: 0,4368</text>
<text x="197.6" y="954.4" font-size="26.0" fill="#f2f2f2" textLength="118.1" lengthAdjust="spacingAndGlyphs">y: 0,5384</text>
<text x="17.6" y="1001.2" font-size="26.0" fill="#f2f2f2" textLength="109.9" lengthAdjust="spacingAndGlyphs">fL: 56,92</text>
<text x="17.6" y="1040.8" font-size="26.0" fill="#f2f2f2" textLength="181.9" lengthAdjust="spacingAndGlyphs">cd/m²: 195,01</text>
<text x="643.7" y="166.7" font-size="22.5" fill="#f2f2f2" textLength="69.3" lengthAdjust="spacingAndGlyphs">Levels:</text>
<rect x="722.5" y="143" width="388.5" height="29" fill="url(#dropg)" stroke="#2a2a2a" stroke-width="1"/>
<text x="728.0" y="166.7" font-size="19.0" fill="#f0f0f0" textLength="101.7" lengthAdjust="spacingAndGlyphs">20% Sweeps</text>
<path d="M1094.5 155H1105.5L1100 161Z" fill="#111"/>
<rect x="469.4" y="218.0" width="166.5" height="324.5" fill="#232323"/>
<line x1="463.4" y1="218.0" x2="635.9" y2="218.0" stroke="#a6a6a6" stroke-width="1.5"/>
<text x="462.9" y="223.6" font-size="15.6" fill="#dcdcdc" text-anchor="end">15</text>
<line x1="463.4" y1="272.1" x2="635.9" y2="272.1" stroke="#a6a6a6" stroke-width="1.5"/>
<text x="462.9" y="277.7" font-size="15.6" fill="#dcdcdc" text-anchor="end">10</text>
<line x1="463.4" y1="326.2" x2="635.9" y2="326.2" stroke="#a6a6a6" stroke-width="1.5"/>
<text x="462.9" y="331.8" font-size="15.6" fill="#dcdcdc" text-anchor="end">5</text>
<line x1="463.4" y1="380.2" x2="635.9" y2="380.2" stroke="#a6a6a6" stroke-width="1.5"/>
<text x="462.9" y="385.8" font-size="15.6" fill="#dcdcdc" text-anchor="end">0</text>
<line x1="463.4" y1="434.3" x2="635.9" y2="434.3" stroke="#a6a6a6" stroke-width="1.5"/>
<text x="462.9" y="439.9" font-size="15.6" fill="#dcdcdc" text-anchor="end">-5</text>
<line x1="463.4" y1="488.4" x2="635.9" y2="488.4" stroke="#a6a6a6" stroke-width="1.5"/>
<text x="462.9" y="494.0" font-size="15.6" fill="#dcdcdc" text-anchor="end">-10</text>
<line x1="463.4" y1="542.5" x2="635.9" y2="542.5" stroke="#a6a6a6" stroke-width="1.5"/>
<text x="462.9" y="548.1" font-size="15.6" fill="#dcdcdc" text-anchor="end">-15</text>
<line x1="469.4" y1="218.0" x2="469.4" y2="549.0" stroke="#a6a6a6" stroke-width="1.5"/>
<line x1="635.9" y1="218.0" x2="635.9" y2="549.0" stroke="#a6a6a6" stroke-width="1.5"/>
<text x="537.6" y="211.7" font-size="17.0" fill="#dcdcdc" text-anchor="middle">Delta L</text>
<text x="552.6" y="561.0" font-size="17.0" fill="#dcdcdc" text-anchor="middle">100%</text>
<rect x="486.0" y="359.5" width="132.6" height="22.0" fill="#0a0a0a"/>
<rect x="487.5" y="361.0" width="129.6" height="19.5" fill="url(#ybar)"/>
<rect x="696.6" y="218.0" width="166.4" height="324.5" fill="#232323"/>
<line x1="690.6" y1="218.0" x2="863.0" y2="218.0" stroke="#a6a6a6" stroke-width="1.5"/>
<text x="690.1" y="223.6" font-size="15.6" fill="#dcdcdc" text-anchor="end">15</text>
<line x1="690.6" y1="272.1" x2="863.0" y2="272.1" stroke="#a6a6a6" stroke-width="1.5"/>
<text x="690.1" y="277.7" font-size="15.6" fill="#dcdcdc" text-anchor="end">10</text>
<line x1="690.6" y1="326.2" x2="863.0" y2="326.2" stroke="#a6a6a6" stroke-width="1.5"/>
<text x="690.1" y="331.8" font-size="15.6" fill="#dcdcdc" text-anchor="end">5</text>
<line x1="690.6" y1="380.2" x2="863.0" y2="380.2" stroke="#a6a6a6" stroke-width="1.5"/>
<text x="690.1" y="385.8" font-size="15.6" fill="#dcdcdc" text-anchor="end">0</text>
<line x1="690.6" y1="434.3" x2="863.0" y2="434.3" stroke="#a6a6a6" stroke-width="1.5"/>
<text x="690.1" y="439.9" font-size="15.6" fill="#dcdcdc" text-anchor="end">-5</text>
<line x1="690.6" y1="488.4" x2="863.0" y2="488.4" stroke="#a6a6a6" stroke-width="1.5"/>
<text x="690.1" y="494.0" font-size="15.6" fill="#dcdcdc" text-anchor="end">-10</text>
<line x1="690.6" y1="542.5" x2="863.0" y2="542.5" stroke="#a6a6a6" stroke-width="1.5"/>
<text x="690.1" y="548.1" font-size="15.6" fill="#dcdcdc" text-anchor="end">-15</text>
<line x1="696.6" y1="218.0" x2="696.6" y2="549.0" stroke="#a6a6a6" stroke-width="1.5"/>
<line x1="863.0" y1="218.0" x2="863.0" y2="549.0" stroke="#a6a6a6" stroke-width="1.5"/>
<text x="764.5" y="211.7" font-size="17.0" fill="#dcdcdc" text-anchor="middle">Delta C</text>
<text x="779.8" y="561.0" font-size="17.0" fill="#dcdcdc" text-anchor="middle">100%</text>
<rect x="713.8" y="365.5" width="131.2" height="16.0" fill="#0a0a0a"/>
<rect x="715.3" y="367.0" width="128.2" height="13.5" fill="url(#ybar)"/>
<rect x="923.8" y="218.0" width="165.7" height="324.5" fill="#232323"/>
<line x1="917.8" y1="218.0" x2="1089.5" y2="218.0" stroke="#a6a6a6" stroke-width="1.5"/>
<text x="917.3" y="223.6" font-size="15.6" fill="#dcdcdc" text-anchor="end">15</text>
<line x1="917.8" y1="272.1" x2="1089.5" y2="272.1" stroke="#a6a6a6" stroke-width="1.5"/>
<text x="917.3" y="277.7" font-size="15.6" fill="#dcdcdc" text-anchor="end">10</text>
<line x1="917.8" y1="326.2" x2="1089.5" y2="326.2" stroke="#a6a6a6" stroke-width="1.5"/>
<text x="917.3" y="331.8" font-size="15.6" fill="#dcdcdc" text-anchor="end">5</text>
<line x1="917.8" y1="380.2" x2="1089.5" y2="380.2" stroke="#a6a6a6" stroke-width="1.5"/>
<text x="917.3" y="385.8" font-size="15.6" fill="#dcdcdc" text-anchor="end">0</text>
<line x1="917.8" y1="434.3" x2="1089.5" y2="434.3" stroke="#a6a6a6" stroke-width="1.5"/>
<text x="917.3" y="439.9" font-size="15.6" fill="#dcdcdc" text-anchor="end">-5</text>
<line x1="917.8" y1="488.4" x2="1089.5" y2="488.4" stroke="#a6a6a6" stroke-width="1.5"/>
<text x="917.3" y="494.0" font-size="15.6" fill="#dcdcdc" text-anchor="end">-10</text>
<line x1="917.8" y1="542.5" x2="1089.5" y2="542.5" stroke="#a6a6a6" stroke-width="1.5"/>
<text x="917.3" y="548.1" font-size="15.6" fill="#dcdcdc" text-anchor="end">-15</text>
<line x1="923.8" y1="218.0" x2="923.8" y2="549.0" stroke="#a6a6a6" stroke-width="1.5"/>
<line x1="1089.5" y1="218.0" x2="1089.5" y2="549.0" stroke="#a6a6a6" stroke-width="1.5"/>
<text x="991.3" y="211.7" font-size="17.0" fill="#dcdcdc" text-anchor="middle">Delta H</text>
<text x="1006.6" y="561.0" font-size="17.0" fill="#dcdcdc" text-anchor="middle">100%</text>
<rect x="941.0" y="373.7" width="131.0" height="7.8" fill="#0a0a0a"/>
<rect x="942.5" y="375.2" width="128.0" height="5.3" fill="url(#ybar)"/>
<rect x="432.0" y="573.0" width="680.0" height="186.4" fill="#000000"/>
<rect x="455.4" y="580.8" width="114.0" height="151.6" fill="#f0f0f0"/>
<rect x="456.9" y="582.3" width="111.0" height="148.6" fill="rgb(189,193,156)"/>
<rect x="456.9" y="656.6" width="111.0" height="74.3" fill="rgb(187,188,146)"/>
<text x="512.4" y="751.4" font-size="15.5" fill="#f0f0f0" text-anchor="middle">20%</text>
<rect x="588.8" y="580.8" width="114.0" height="151.6" fill="#f0f0f0"/>
<rect x="590.3" y="582.3" width="111.0" height="148.6" fill="rgb(194,195,130)"/>
<rect x="590.3" y="656.6" width="111.0" height="74.3" fill="rgb(188,188,122)"/>
<text x="645.8" y="751.4" font-size="15.5" fill="#f0f0f0" text-anchor="middle">40%</text>
<rect x="721.9" y="580.8" width="114.0" height="151.6" fill="#f0f0f0"/>
<rect x="723.4" y="582.3" width="111.0" height="148.6" fill="rgb(194,196,98)"/>
<rect x="723.4" y="656.6" width="111.0" height="74.3" fill="rgb(190,189,86)"/>
<text x="778.9" y="751.4" font-size="15.5" fill="#f0f0f0" text-anchor="middle">60%</text>
<rect x="854.6" y="580.8" width="114.0" height="151.6" fill="#f0f0f0"/>
<rect x="856.1" y="582.3" width="111.0" height="148.6" fill="rgb(192,192,38)"/>
<rect x="856.1" y="656.6" width="111.0" height="74.3" fill="rgb(188,184,26)"/>
<text x="911.6" y="751.4" font-size="15.5" fill="#f0f0f0" text-anchor="middle">80%</text>
<rect x="987.6" y="580.8" width="114.0" height="151.6" fill="#f0f0f0"/>
<rect x="989.1" y="582.3" width="111.0" height="148.6" fill="rgb(200,200,0)"/>
<rect x="989.1" y="656.6" width="111.0" height="74.3" fill="rgb(196,192,28)"/>
<text x="1044.6" y="751.4" font-size="15.5" fill="#f0f0f0" text-anchor="middle">100%</text>
<text x="0" y="0" font-size="15" fill="#f0f0f0" text-anchor="middle" transform="translate(445.8 614.5) rotate(-90)">Actual</text>
<text x="0" y="0" font-size="15" fill="#f0f0f0" text-anchor="middle" transform="translate(445.8 699.2) rotate(-90)">Target</text>
<text x="537.0" y="813.9" font-size="16.8" fill="#dcdcdc" textLength="92.0" lengthAdjust="spacingAndGlyphs" text-anchor="middle">RGB Balance</text>
<rect x="411.3" y="819.5" width="286.9" height="207.7" fill="#232323"/>
<line x1="404.5" y1="842.0" x2="698.2" y2="842.0" stroke="#a6a6a6" stroke-width="1.5"/>
<text x="404.0" y="847.6" font-size="15.6" fill="#dcdcdc" text-anchor="end">104</text>
<line x1="404.5" y1="883.4" x2="698.2" y2="883.4" stroke="#a6a6a6" stroke-width="1.5"/>
<text x="404.0" y="889.0" font-size="15.6" fill="#dcdcdc" text-anchor="end">102</text>
<line x1="404.5" y1="924.8" x2="698.2" y2="924.8" stroke="#a6a6a6" stroke-width="1.5"/>
<text x="404.0" y="930.4" font-size="15.6" fill="#dcdcdc" text-anchor="end">100</text>
<line x1="404.5" y1="966.3" x2="698.2" y2="966.3" stroke="#a6a6a6" stroke-width="1.5"/>
<text x="404.0" y="971.9" font-size="15.6" fill="#dcdcdc" text-anchor="end">98</text>
<line x1="404.5" y1="1007.7" x2="698.2" y2="1007.7" stroke="#a6a6a6" stroke-width="1.5"/>
<text x="404.0" y="1013.3" font-size="15.6" fill="#dcdcdc" text-anchor="end">96</text>
<line x1="411.3" y1="819.5" x2="698.2" y2="819.5" stroke="#a6a6a6" stroke-width="1.5"/>
<line x1="411.3" y1="819.5" x2="411.3" y2="1034.0" stroke="#a6a6a6" stroke-width="1.5"/>
<line x1="698.2" y1="819.5" x2="698.2" y2="1034.0" stroke="#a6a6a6" stroke-width="1.5"/>
<line x1="411.3" y1="1027.2" x2="698.2" y2="1027.2" stroke="#a6a6a6" stroke-width="1.5"/>
<text x="554.0" y="1046.3" font-size="16.8" fill="#dcdcdc" text-anchor="middle">100%</text>
<rect x="438.7" y="890.0" width="75.7" height="137.2" fill="#080808"/>
<rect x="440.2" y="891.5" width="72.7" height="135.7" fill="url(#rbar)"/>
<rect x="514.4" y="879.5" width="76.5" height="147.7" fill="#080808"/>
<rect x="515.9" y="881.0" width="73.5" height="146.2" fill="url(#gbar)"/>
<rect x="590.9" y="953.0" width="76.5" height="74.2" fill="#080808"/>
<rect x="592.4" y="954.5" width="73.5" height="72.7" fill="url(#bbar)"/>
<rect x="722.0" y="784.2" width="838.0" height="271.0" fill="#000"/>
<rect x="724.0" y="786.0" width="832.3" height="31.0" fill="url(#thead)"/>
<rect x="724.0" y="817.0" width="834.0" height="29.8" fill="#434343"/>
<text x="744.0" y="839.1" font-size="19.0" fill="#f2f2f2" textLength="98.2" lengthAdjust="spacingAndGlyphs" font-weight="bold">x: CIE31</text>
<text x="953.7" y="839.1" font-size="21.6" fill="#ececec" textLength="78.3" lengthAdjust="spacingAndGlyphs">0,3381</text>
<text x="1076.4" y="839.1" font-size="21.6" fill="#ececec" textLength="78.3" lengthAdjust="spacingAndGlyphs">0,3605</text>
<text x="1199.0" y="839.1" font-size="21.6" fill="#ececec" textLength="78.3" lengthAdjust="spacingAndGlyphs">0,3857</text>
<text x="1321.2" y="839.1" font-size="21.6" fill="#ececec" textLength="78.3" lengthAdjust="spacingAndGlyphs">0,4122</text>
<text x="1443.8" y="839.1" font-size="21.6" fill="#ececec" textLength="78.3" lengthAdjust="spacingAndGlyphs">0,4368</text>
<rect x="724.0" y="846.8" width="834.0" height="29.8" fill="#808080"/>
<text x="744.0" y="868.9" font-size="19.0" fill="#f2f2f2" textLength="100.0" lengthAdjust="spacingAndGlyphs" font-weight="bold">y: CIE31</text>
<text x="953.7" y="868.9" font-size="21.6" fill="#ececec" textLength="78.3" lengthAdjust="spacingAndGlyphs">0,3770</text>
<text x="1076.4" y="868.9" font-size="21.6" fill="#ececec" textLength="78.3" lengthAdjust="spacingAndGlyphs">0,4135</text>
<text x="1199.0" y="868.9" font-size="21.6" fill="#ececec" textLength="78.3" lengthAdjust="spacingAndGlyphs">0,4544</text>
<text x="1321.2" y="868.9" font-size="21.6" fill="#ececec" textLength="78.3" lengthAdjust="spacingAndGlyphs">0,4977</text>
<text x="1443.8" y="868.9" font-size="21.6" fill="#ececec" textLength="78.3" lengthAdjust="spacingAndGlyphs">0,5384</text>
<rect x="724.0" y="876.5" width="834.0" height="29.8" fill="#434343"/>
<text x="744.0" y="898.6" font-size="19.0" fill="#f2f2f2" textLength="16.7" lengthAdjust="spacingAndGlyphs" font-weight="bold">Y</text>
<text x="953.7" y="898.6" font-size="21.6" fill="#ececec" textLength="107.2" lengthAdjust="spacingAndGlyphs">203,3653</text>
<text x="1076.4" y="898.6" font-size="21.6" fill="#ececec" textLength="107.2" lengthAdjust="spacingAndGlyphs">200,1802</text>
<text x="1199.0" y="898.6" font-size="21.6" fill="#ececec" textLength="107.2" lengthAdjust="spacingAndGlyphs">197,5493</text>
<text x="1321.2" y="898.6" font-size="21.6" fill="#ececec" textLength="107.2" lengthAdjust="spacingAndGlyphs">195,4326</text>
<text x="1443.8" y="898.6" font-size="21.6" fill="#ececec" textLength="107.2" lengthAdjust="spacingAndGlyphs">195,0131</text>
<rect x="724.0" y="906.2" width="834.0" height="29.8" fill="#808080"/>
<text x="745.2" y="928.4" font-size="19.0" fill="#f2f2f2" textLength="179.3" lengthAdjust="spacingAndGlyphs" font-weight="bold">Target x:CIE31</text>
<text x="953.7" y="928.4" font-size="21.6" fill="#ececec" textLength="78.3" lengthAdjust="spacingAndGlyphs">0,3406</text>
<text x="1076.4" y="928.4" font-size="21.6" fill="#ececec" textLength="78.3" lengthAdjust="spacingAndGlyphs">0,3657</text>
<text x="1199.0" y="928.4" font-size="21.6" fill="#ececec" textLength="78.3" lengthAdjust="spacingAndGlyphs">0,3916</text>
<text x="1321.2" y="928.4" font-size="21.6" fill="#ececec" textLength="78.3" lengthAdjust="spacingAndGlyphs">0,4168</text>
<text x="1443.8" y="928.4" font-size="21.6" fill="#ececec" textLength="78.3" lengthAdjust="spacingAndGlyphs">0,4378</text>
<rect x="724.0" y="936.0" width="834.0" height="29.8" fill="#434343"/>
<text x="745.2" y="958.1" font-size="19.0" fill="#f2f2f2" textLength="179.3" lengthAdjust="spacingAndGlyphs" font-weight="bold">Target y:CIE31</text>
<text x="953.7" y="958.1" font-size="21.6" fill="#ececec" textLength="78.3" lengthAdjust="spacingAndGlyphs">0,3751</text>
<text x="1076.4" y="958.1" font-size="21.6" fill="#ececec" textLength="78.3" lengthAdjust="spacingAndGlyphs">0,4166</text>
<text x="1199.0" y="958.1" font-size="21.6" fill="#ececec" textLength="78.3" lengthAdjust="spacingAndGlyphs">0,4594</text>
<text x="1321.2" y="958.1" font-size="21.6" fill="#ececec" textLength="78.3" lengthAdjust="spacingAndGlyphs">0,5011</text>
<text x="1443.8" y="958.1" font-size="21.6" fill="#ececec" textLength="78.3" lengthAdjust="spacingAndGlyphs">0,5359</text>
<rect x="724.0" y="965.8" width="834.0" height="29.8" fill="#808080"/>
<text x="745.2" y="987.9" font-size="19.0" fill="#f2f2f2" textLength="103.2" lengthAdjust="spacingAndGlyphs" font-weight="bold">Target Y</text>
<text x="953.7" y="987.9" font-size="21.6" fill="#ececec" textLength="107.2" lengthAdjust="spacingAndGlyphs">193,0340</text>
<text x="1076.4" y="987.9" font-size="21.6" fill="#ececec" textLength="107.2" lengthAdjust="spacingAndGlyphs">189,4371</text>
<text x="1199.0" y="987.9" font-size="21.6" fill="#ececec" textLength="107.2" lengthAdjust="spacingAndGlyphs">186,5139</text>
<text x="1321.2" y="987.9" font-size="21.6" fill="#ececec" textLength="107.2" lengthAdjust="spacingAndGlyphs">184,2154</text>
<text x="1443.8" y="987.9" font-size="21.6" fill="#ececec" textLength="107.2" lengthAdjust="spacingAndGlyphs">182,6002</text>
<rect x="724.0" y="995.5" width="834.0" height="29.8" fill="#434343"/>
<text x="744.0" y="1017.6" font-size="19.0" fill="#f2f2f2" textLength="103.0" lengthAdjust="spacingAndGlyphs" font-weight="bold">ΔE 2000</text>
<text x="953.7" y="1017.6" font-size="21.6" fill="#ececec" textLength="78.3" lengthAdjust="spacingAndGlyphs">1,9684</text>
<text x="1076.4" y="1017.6" font-size="21.6" fill="#ececec" textLength="78.3" lengthAdjust="spacingAndGlyphs">1,6089</text>
<text x="1199.0" y="1017.6" font-size="21.6" fill="#ececec" textLength="78.3" lengthAdjust="spacingAndGlyphs">1,5809</text>
<text x="1321.2" y="1017.6" font-size="21.6" fill="#ececec" textLength="78.3" lengthAdjust="spacingAndGlyphs">1,4799</text>
<text x="1443.8" y="1017.6" font-size="21.6" fill="#ececec" textLength="78.3" lengthAdjust="spacingAndGlyphs">1,6170</text>
<rect x="724.0" y="1025.2" width="834.0" height="29.8" fill="#808080"/>
<text x="744.0" y="1047.3" font-size="19.0" fill="#f2f2f2" textLength="82.2" lengthAdjust="spacingAndGlyphs" font-weight="bold">ΔE ITP</text>
<text x="953.7" y="1047.3" font-size="21.6" fill="#ececec" textLength="78.3" lengthAdjust="spacingAndGlyphs">4,3526</text>
<text x="1076.4" y="1047.3" font-size="21.6" fill="#ececec" textLength="78.3" lengthAdjust="spacingAndGlyphs">5,0346</text>
<text x="1199.0" y="1047.3" font-size="21.6" fill="#ececec" textLength="78.3" lengthAdjust="spacingAndGlyphs">5,7809</text>
<text x="1321.2" y="1047.3" font-size="21.6" fill="#ececec" textLength="78.3" lengthAdjust="spacingAndGlyphs">5,6058</text>
<text x="1443.8" y="1047.3" font-size="21.6" fill="#ececec" textLength="78.3" lengthAdjust="spacingAndGlyphs">5,3261</text>
<text x="984.7" y="807.7" font-size="16.6" fill="#f2f2f2" textLength="46.3" lengthAdjust="spacingAndGlyphs" font-weight="bold">20%</text>
<text x="1107.3" y="807.7" font-size="16.6" fill="#f2f2f2" textLength="45.6" lengthAdjust="spacingAndGlyphs" font-weight="bold">40%</text>
<text x="1230.0" y="807.7" font-size="16.6" fill="#f2f2f2" textLength="45.5" lengthAdjust="spacingAndGlyphs" font-weight="bold">60%</text>
<text x="1352.0" y="807.7" font-size="16.6" fill="#f2f2f2" textLength="45.3" lengthAdjust="spacingAndGlyphs" font-weight="bold">80%</text>
<text x="1468.0" y="807.7" font-size="16.6" fill="#f2f2f2" textLength="58.5" lengthAdjust="spacingAndGlyphs" font-weight="bold">100%</text>
<rect x="1124" y="138" width="790" height="633.4" fill="#333333" stroke="#c4c400" stroke-width="8"/>
<text x="1519.2" y="161.4" font-size="16.8" fill="#dcdcdc" textLength="96.0" lengthAdjust="spacingAndGlyphs" text-anchor="middle">CIE 1976 u'v'</text>
<rect x="1171.7" y="169.0" width="735.3" height="566.0" fill="#232323"/>
<g clip-path="url(#plotclip)"><g clip-path="url(#locclip)"><g filter="url(#fblur)"><rect x="1172" y="176" width="735" height="5" fill="url(#g0)"/><rect x="1172" y="180" width="735" height="5" fill="url(#g1)"/><rect x="1172" y="184" width="735" height="5" fill="url(#g2)"/><rect x="1172" y="188" width="735" height="5" fill="url(#g3)"/><rect x="1172" y="192" width="735" height="5" fill="url(#g4)"/><rect x="1172" y="196" width="735" height="5" fill="url(#g5)"/><rect x="1172" y="200" width="735" height="5" fill="url(#g6)"/><rect x="1172" y="204" width="735" height="5" fill="url(#g7)"/><rect x="1172" y="208" width="735" height="5" fill="url(#g8)"/><rect x="1172" y="212" width="735" height="5" fill="url(#g9)"/><rect x="1172" y="216" width="735" height="5" fill="url(#g10)"/><rect x="1172" y="220" width="735" height="5" fill="url(#g11)"/><rect x="1172" y="224" width="735" height="5" fill="url(#g12)"/><rect x="1172" y="228" width="735" height="5" fill="url(#g13)"/><rect x="1172" y="232" width="735" height="5" fill="url(#g14)"/><rect x="1172" y="236" width="735" height="5" fill="url(#g15)"/><rect x="1172" y="240" width="735" height="5" fill="url(#g16)"/><rect x="1172" y="244" width="735" height="5" fill="url(#g17)"/><rect x="1172" y="248" width="735" height="5" fill="url(#g18)"/><rect x="1172" y="252" width="735" height="5" fill="url(#g19)"/><rect x="1172" y="256" width="735" height="5" fill="url(#g20)"/><rect x="1172" y="260" width="735" height="5" fill="url(#g21)"/><rect x="1172" y="264" width="735" height="5" fill="url(#g22)"/><rect x="1172" y="268" width="735" height="5" fill="url(#g23)"/><rect x="1172" y="272" width="735" height="5" fill="url(#g24)"/><rect x="1172" y="276" width="735" height="5" fill="url(#g25)"/><rect x="1172" y="280" width="735" height="5" fill="url(#g26)"/><rect x="1172" y="284" width="735" height="5" fill="url(#g27)"/><rect x="1172" y="288" width="735" height="5" fill="url(#g28)"/><rect x="1172" y="292" width="735" height="5" fill="url(#g29)"/><rect x="1172" y="296" width="735" height="5" fill="url(#g30)"/><rect x="1172" y="300" width="735" height="5" fill="url(#g31)"/><rect x="1172" y="304" width="735" height="5" fill="url(#g32)"/><rect x="1172" y="308" width="735" height="5" fill="url(#g33)"/><rect x="1172" y="312" width="735" height="5" fill="url(#g34)"/><rect x="1172" y="316" width="735" height="5" fill="url(#g35)"/><rect x="1172" y="320" width="735" height="5" fill="url(#g36)"/><rect x="1172" y="324" width="735" height="5" fill="url(#g37)"/><rect x="1172" y="328" width="735" height="5" fill="url(#g38)"/><rect x="1172" y="332" width="735" height="5" fill="url(#g39)"/><rect x="1172" y="336" width="735" height="5" fill="url(#g40)"/><rect x="1172" y="340" width="735" height="5" fill="url(#g41)"/><rect x="1172" y="344" width="735" height="5" fill="url(#g42)"/><rect x="1172" y="348" width="735" height="5" fill="url(#g43)"/><rect x="1172" y="352" width="735" height="5" fill="url(#g44)"/><rect x="1172" y="356" width="735" height="5" fill="url(#g45)"/><rect x="1172" y="360" width="735" height="5" fill="url(#g46)"/><rect x="1172" y="364" width="735" height="5" fill="url(#g47)"/><rect x="1172" y="368" width="735" height="5" fill="url(#g48)"/><rect x="1172" y="372" width="735" height="5" fill="url(#g49)"/><rect x="1172" y="376" width="735" height="5" fill="url(#g50)"/><rect x="1172" y="380" width="735" height="5" fill="url(#g51)"/><rect x="1172" y="384" width="735" height="5" fill="url(#g52)"/><rect x="1172" y="388" width="735" height="5" fill="url(#g53)"/><rect x="1172" y="392" width="735" height="5" fill="url(#g54)"/><rect x="1172" y="396" width="735" height="5" fill="url(#g55)"/><rect x="1172" y="400" width="735" height="5" fill="url(#g56)"/><rect x="1172" y="404" width="735" height="5" fill="url(#g57)"/><rect x="1172" y="408" width="735" height="5" fill="url(#g58)"/><rect x="1172" y="412" width="735" height="5" fill="url(#g59)"/><rect x="1172" y="416" width="735" height="5" fill="url(#g60)"/><rect x="1172" y="420" width="735" height="5" fill="url(#g61)"/><rect x="1172" y="424" width="735" height="5" fill="url(#g62)"/><rect x="1172" y="428" width="735" height="5" fill="url(#g63)"/><rect x="1172" y="432" width="735" height="5" fill="url(#g64)"/><rect x="1172" y="436" width="735" height="5" fill="url(#g65)"/><rect x="1172" y="440" width="735" height="5" fill="url(#g66)"/><rect x="1172" y="444" width="735" height="5" fill="url(#g67)"/><rect x="1172" y="448" width="735" height="5" fill="url(#g68)"/><rect x="1172" y="452" width="735" height="5" fill="url(#g69)"/><rect x="1172" y="456" width="735" height="5" fill="url(#g70)"/><rect x="1172" y="460" width="735" height="5" fill="url(#g71)"/><rect x="1172" y="464" width="735" height="5" fill="url(#g72)"/><rect x="1172" y="468" width="735" height="5" fill="url(#g73)"/><rect x="1172" y="472" width="735" height="5" fill="url(#g74)"/><rect x="1172" y="476" width="735" height="5" fill="url(#g75)"/><rect x="1172" y="480" width="735" height="5" fill="url(#g76)"/><rect x="1172" y="484" width="735" height="5" fill="url(#g77)"/><rect x="1172" y="488" width="735" height="5" fill="url(#g78)"/><rect x="1172" y="492" width="735" height="5" fill="url(#g79)"/><rect x="1172" y="496" width="735" height="5" fill="url(#g80)"/><rect x="1172" y="500" width="735" height="5" fill="url(#g81)"/><rect x="1172" y="504" width="735" height="5" fill="url(#g82)"/><rect x="1172" y="508" width="735" height="5" fill="url(#g83)"/><rect x="1172" y="512" width="735" height="5" fill="url(#g84)"/><rect x="1172" y="516" width="735" height="5" fill="url(#g85)"/><rect x="1172" y="520" width="735" height="5" fill="url(#g86)"/><rect x="1172" y="524" width="735" height="5" fill="url(#g87)"/><rect x="1172" y="528" width="735" height="5" fill="url(#g88)"/><rect x="1172" y="532" width="735" height="5" fill="url(#g89)"/><rect x="1172" y="536" width="735" height="5" fill="url(#g90)"/><rect x="1172" y="540" width="735" height="5" fill="url(#g91)"/><rect x="1172" y="544" width="735" height="5" fill="url(#g92)"/><rect x="1172" y="548" width="735" height="5" fill="url(#g93)"/><rect x="1172" y="552" width="735" height="5" fill="url(#g94)"/><rect x="1172" y="556" width="735" height="5" fill="url(#g95)"/><rect x="1172" y="560" width="735" height="5" fill="url(#g96)"/><rect x="1172" y="564" width="735" height="5" fill="url(#g97)"/><rect x="1172" y="568" width="735" height="5" fill="url(#g98)"/><rect x="1172" y="572" width="735" height="5" fill="url(#g99)"/><rect x="1172" y="576" width="735" height="5" fill="url(#g100)"/><rect x="1172" y="580" width="735" height="5" fill="url(#g101)"/><rect x="1172" y="584" width="735" height="5" fill="url(#g102)"/><rect x="1172" y="588" width="735" height="5" fill="url(#g103)"/><rect x="1172" y="592" width="735" height="5" fill="url(#g104)"/><rect x="1172" y="596" width="735" height="5" fill="url(#g105)"/><rect x="1172" y="600" width="735" height="5" fill="url(#g106)"/><rect x="1172" y="604" width="735" height="5" fill="url(#g107)"/><rect x="1172" y="608" width="735" height="5" fill="url(#g108)"/><rect x="1172" y="612" width="735" height="5" fill="url(#g109)"/><rect x="1172" y="616" width="735" height="5" fill="url(#g110)"/><rect x="1172" y="620" width="735" height="5" fill="url(#g111)"/><rect x="1172" y="624" width="735" height="5" fill="url(#g112)"/><rect x="1172" y="628" width="735" height="5" fill="url(#g113)"/><rect x="1172" y="632" width="735" height="5" fill="url(#g114)"/><rect x="1172" y="636" width="735" height="5" fill="url(#g115)"/><rect x="1172" y="640" width="735" height="5" fill="url(#g116)"/><rect x="1172" y="644" width="735" height="5" fill="url(#g117)"/><rect x="1172" y="648" width="735" height="5" fill="url(#g118)"/><rect x="1172" y="652" width="735" height="5" fill="url(#g119)"/><rect x="1172" y="656" width="735" height="5" fill="url(#g120)"/><rect x="1172" y="660" width="735" height="5" fill="url(#g121)"/><rect x="1172" y="664" width="735" height="5" fill="url(#g122)"/><rect x="1172" y="668" width="735" height="5" fill="url(#g123)"/><rect x="1172" y="672" width="735" height="5" fill="url(#g124)"/><rect x="1172" y="676" width="735" height="5" fill="url(#g125)"/><rect x="1172" y="680" width="735" height="5" fill="url(#g126)"/><rect x="1172" y="684" width="735" height="5" fill="url(#g127)"/><rect x="1172" y="688" width="735" height="5" fill="url(#g128)"/><rect x="1172" y="692" width="735" height="5" fill="url(#g129)"/><rect x="1172" y="696" width="735" height="5" fill="url(#g130)"/><rect x="1172" y="700" width="735" height="5" fill="url(#g131)"/><rect x="1172" y="704" width="735" height="5" fill="url(#g132)"/><rect x="1172" y="708" width="735" height="5" fill="url(#g133)"/><rect x="1172" y="712" width="735" height="5" fill="url(#g134)"/><rect x="1172" y="716" width="735" height="5" fill="url(#g135)"/><rect x="1172" y="720" width="735" height="5" fill="url(#g136)"/><rect x="1172" y="724" width="735" height="5" fill="url(#g137)"/></g></g>
<path d="M1485.5 718.4 L1485.5 718.4 L1485.4 718.4 L1485.3 718.5 L1485.2 718.5 L1485.2 718.6 L1485.0 718.7 L1484.9 718.7 L1484.8 718.8 L1484.7 718.8 L1484.5 718.9 L1484.3 718.9 L1484.2 719.0 L1484.0 719.0 L1483.8 719.0 L1483.6 719.1 L1483.3 719.1 L1483.1 719.0 L1482.7 719.0 L1482.4 718.9 L1482.1 718.9 L1481.7 718.9 L1481.2 718.7 L1480.7 718.5 L1479.9 718.1 L1479.0 717.5 L1478.0 716.8 L1476.9 716.0 L1475.6 715.1 L1474.1 714.0 L1472.5 712.7 L1470.5 711.0 L1468.1 709.1 L1465.6 707.0 L1463.1 704.9 L1460.7 702.8 L1458.5 701.0 L1456.6 699.4 L1455.0 698.1 L1453.5 696.8 L1452.0 695.6 L1450.4 694.3 L1448.6 692.8 L1446.7 691.2 L1444.7 689.5 L1442.5 687.8 L1440.3 686.0 L1438.1 684.1 L1435.7 682.2 L1433.3 680.2 L1430.9 678.2 L1428.3 676.1 L1425.7 673.9 L1423.0 671.6 L1420.2 669.1 L1417.2 666.6 L1414.2 663.9 L1411.1 661.1 L1407.9 658.2 L1404.5 655.1 L1401.1 651.9 L1397.6 648.5 L1394.0 645.0 L1390.3 641.4 L1386.5 637.5 L1382.5 633.2 L1378.2 628.4 L1373.6 623.2 L1368.8 617.7 L1363.8 611.7 L1358.6 605.4 L1353.2 598.7 L1347.8 591.6 L1342.1 584.2 L1336.3 576.3 L1330.3 568.1 L1324.3 559.5 L1318.1 550.5 L1311.9 541.3 L1305.5 531.6 L1299.0 521.5 L1292.5 511.0 L1285.9 500.3 L1279.3 489.5 L1272.9 478.6 L1266.5 467.6 L1260.0 456.3 L1253.6 444.9 L1247.2 433.4 L1241.2 422.0 L1235.4 410.8 L1229.9 399.7 L1224.7 388.6 L1219.7 377.5 L1214.9 366.6 L1210.4 356.0 L1206.1 345.8 L1202.1 335.9 L1198.4 326.2 L1195.0 316.8 L1191.8 307.8 L1188.9 299.1 L1186.2 290.9 L1183.9 283.2 L1181.8 275.8 L1180.0 268.9 L1178.4 262.3 L1177.1 256.1 L1175.9 250.2 L1175.0 244.6 L1174.3 239.5 L1173.8 234.7 L1173.5 230.1 L1173.4 225.9 L1173.5 221.8 L1173.7 218.0 L1174.1 214.4 L1174.7 211.0 L1175.4 207.9 L1176.3 205.0 L1177.4 202.3 L1178.6 199.8 L1179.9 197.4 L1181.5 195.3 L1183.1 193.3 L1184.9 191.5 L1186.7 189.9 L1188.7 188.5 L1190.7 187.2 L1192.9 186.1 L1195.2 185.2 L1197.6 184.4 L1199.9 183.6 L1202.4 183.0 L1205.0 182.5 L1207.6 182.1 L1210.3 181.8 L1213.0 181.5 L1215.7 181.3 L1218.5 181.1 L1221.3 180.9 L1224.2 180.8 L1227.1 180.8 L1230.0 180.7 L1232.9 180.7 L1235.8 180.7 L1238.6 180.7 L1241.5 180.7 L1244.4 180.8 L1247.4 180.8 L1250.3 180.9 L1253.3 181.0 L1256.3 181.1 L1259.3 181.3 L1262.3 181.4 L1265.4 181.6 L1268.5 181.8 L1271.7 182.0 L1274.9 182.2 L1278.1 182.4 L1281.4 182.7 L1284.7 182.9 L1288.1 183.2 L1291.5 183.5 L1295.0 183.8 L1298.5 184.1 L1302.1 184.4 L1305.7 184.8 L1309.4 185.1 L1313.2 185.5 L1317.0 185.9 L1320.8 186.2 L1324.8 186.6 L1328.8 187.1 L1332.8 187.5 L1337.0 187.9 L1341.2 188.4 L1345.5 188.8 L1349.8 189.3 L1354.3 189.8 L1358.8 190.3 L1363.4 190.8 L1368.0 191.3 L1372.8 191.8 L1377.6 192.4 L1382.5 192.9 L1387.5 193.5 L1392.6 194.1 L1397.7 194.6 L1403.0 195.2 L1408.3 195.8 L1413.8 196.5 L1419.3 197.1 L1424.9 197.7 L1430.6 198.4 L1436.3 199.0 L1442.2 199.7 L1448.2 200.4 L1454.2 201.1 L1460.3 201.8 L1466.5 202.5 L1472.9 203.3 L1479.2 204.0 L1485.7 204.7 L1492.3 205.5 L1498.9 206.3 L1505.7 207.1 L1512.5 207.8 L1519.4 208.6 L1526.3 209.4 L1533.4 210.2 L1540.5 211.1 L1547.6 211.9 L1554.9 212.7 L1562.2 213.6 L1569.5 214.4 L1576.8 215.2 L1584.2 216.1 L1591.7 217.0 L1599.2 217.8 L1606.6 218.7 L1614.1 219.6 L1621.5 220.4 L1628.8 221.3 L1636.0 222.1 L1643.3 222.9 L1650.5 223.8 L1657.6 224.6 L1664.7 225.4 L1671.9 226.2 L1679.0 227.1 L1686.1 227.9 L1693.2 228.7 L1700.1 229.5 L1706.9 230.3 L1713.5 231.0 L1720.0 231.8 L1726.5 232.5 L1732.8 233.2 L1739.0 233.9 L1745.0 234.6 L1751.0 235.3 L1756.8 236.0 L1762.5 236.6 L1768.0 237.3 L1773.5 237.9 L1778.8 238.5 L1783.9 239.1 L1788.9 239.7 L1793.7 240.3 L1798.4 240.8 L1803.0 241.3 L1807.5 241.9 L1811.8 242.4 L1815.9 242.8 L1820.0 243.3 L1823.9 243.7 L1827.7 244.2 L1831.5 244.6 L1835.1 245.0 L1838.6 245.4 L1842.0 245.8 L1845.3 246.2 L1848.6 246.6 L1851.7 247.0 L1854.9 247.3 L1857.9 247.7 L1860.9 248.0 L1863.8 248.3 L1866.6 248.7 L1869.3 249.0 L1872.0 249.3 L1874.6 249.6 L1877.1 249.9 L1879.5 250.2 L1881.9 250.4 L1884.2 250.7 L1886.4 251.0 L1888.5 251.2 L1890.5 251.4 L1892.5 251.6 L1894.4 251.9 L1896.2 252.1 L1897.9 252.3 L1899.4 252.4 L1900.8 252.6 L1902.2 252.8 L1903.8 252.9 L1905.5 253.1 L1907.4 253.4 L1909.5 253.6 L1911.7 253.9 L1914.0 254.1 L1916.1 254.4 L1918.2 254.6 L1920.2 254.8 L1922.2 255.1 L1924.2 255.3 L1926.1 255.5 L1927.8 255.7 L1929.2 255.9 L1930.4 256.0 L1931.3 256.1 L1932.0 256.2 L1932.6 256.3 L1933.1 256.3 L1933.5 256.4Z M1778.2 238.4 L1292.2 189.3 L1386.1 585.1 Z" fill="#000" fill-opacity="0.4" fill-rule="evenodd"/></g>
<line x1="1171.7" y1="169.0" x2="1907.0" y2="169.0" stroke="#a6a6a6" stroke-width="1.5"/>
<line x1="1907.0" y1="169.0" x2="1907.0" y2="735.0" stroke="#a6a6a6" stroke-width="1.5"/>
<line x1="1171.7" y1="169.0" x2="1171.7" y2="741.0" stroke="#a6a6a6" stroke-width="1.5"/>
<line x1="1165.0" y1="735.0" x2="1907.0" y2="735.0" stroke="#a6a6a6" stroke-width="1.5"/>
<line x1="1165.0" y1="735.0" x2="1171.7" y2="735.0" stroke="#a6a6a6" stroke-width="1.5"/>
<text x="1163.6" y="741.0" font-size="16.3" fill="#dcdcdc" text-anchor="end">0</text>
<line x1="1171.7" y1="735.0" x2="1171.7" y2="741.0" stroke="#a6a6a6" stroke-width="1.5"/>
<text x="1171.7" y="760.0" font-size="16.3" fill="#dcdcdc" text-anchor="middle">0</text>
<line x1="1165.0" y1="687.9" x2="1171.7" y2="687.9" stroke="#a6a6a6" stroke-width="1.5"/>
<text x="1163.6" y="693.9" font-size="16.3" fill="#dcdcdc" text-anchor="end">0,05</text>
<line x1="1232.9" y1="735.0" x2="1232.9" y2="741.0" stroke="#a6a6a6" stroke-width="1.5"/>
<text x="1232.9" y="760.0" font-size="16.3" fill="#dcdcdc" text-anchor="middle">0,05</text>
<line x1="1165.0" y1="640.8" x2="1171.7" y2="640.8" stroke="#a6a6a6" stroke-width="1.5"/>
<text x="1163.6" y="646.8" font-size="16.3" fill="#dcdcdc" text-anchor="end">0,1</text>
<line x1="1294.1" y1="735.0" x2="1294.1" y2="741.0" stroke="#a6a6a6" stroke-width="1.5"/>
<text x="1294.1" y="760.0" font-size="16.3" fill="#dcdcdc" text-anchor="middle">0,1</text>
<line x1="1165.0" y1="593.7" x2="1171.7" y2="593.7" stroke="#a6a6a6" stroke-width="1.5"/>
<text x="1163.6" y="599.7" font-size="16.3" fill="#dcdcdc" text-anchor="end">0,15</text>
<line x1="1355.3" y1="735.0" x2="1355.3" y2="741.0" stroke="#a6a6a6" stroke-width="1.5"/>
<text x="1355.3" y="760.0" font-size="16.3" fill="#dcdcdc" text-anchor="middle">0,15</text>
<line x1="1165.0" y1="546.6" x2="1171.7" y2="546.6" stroke="#a6a6a6" stroke-width="1.5"/>
<text x="1163.6" y="552.6" font-size="16.3" fill="#dcdcdc" text-anchor="end">0,2</text>
<line x1="1416.5" y1="735.0" x2="1416.5" y2="741.0" stroke="#a6a6a6" stroke-width="1.5"/>
<text x="1416.5" y="760.0" font-size="16.3" fill="#dcdcdc" text-anchor="middle">0,2</text>
<line x1="1165.0" y1="499.4" x2="1171.7" y2="499.4" stroke="#a6a6a6" stroke-width="1.5"/>
<text x="1163.6" y="505.4" font-size="16.3" fill="#dcdcdc" text-anchor="end">0,25</text>
<line x1="1477.8" y1="735.0" x2="1477.8" y2="741.0" stroke="#a6a6a6" stroke-width="1.5"/>
<text x="1477.8" y="760.0" font-size="16.3" fill="#dcdcdc" text-anchor="middle">0,25</text>
<line x1="1165.0" y1="452.3" x2="1171.7" y2="452.3" stroke="#a6a6a6" stroke-width="1.5"/>
<text x="1163.6" y="458.3" font-size="16.3" fill="#dcdcdc" text-anchor="end">0,3</text>
<line x1="1539.0" y1="735.0" x2="1539.0" y2="741.0" stroke="#a6a6a6" stroke-width="1.5"/>
<text x="1539.0" y="760.0" font-size="16.3" fill="#dcdcdc" text-anchor="middle">0,3</text>
<line x1="1165.0" y1="405.2" x2="1171.7" y2="405.2" stroke="#a6a6a6" stroke-width="1.5"/>
<text x="1163.6" y="411.2" font-size="16.3" fill="#dcdcdc" text-anchor="end">0,35</text>
<line x1="1600.2" y1="735.0" x2="1600.2" y2="741.0" stroke="#a6a6a6" stroke-width="1.5"/>
<text x="1600.2" y="760.0" font-size="16.3" fill="#dcdcdc" text-anchor="middle">0,35</text>
<line x1="1165.0" y1="358.1" x2="1171.7" y2="358.1" stroke="#a6a6a6" stroke-width="1.5"/>
<text x="1163.6" y="364.1" font-size="16.3" fill="#dcdcdc" text-anchor="end">0,4</text>
<line x1="1661.4" y1="735.0" x2="1661.4" y2="741.0" stroke="#a6a6a6" stroke-width="1.5"/>
<text x="1661.4" y="760.0" font-size="16.3" fill="#dcdcdc" text-anchor="middle">0,4</text>
<line x1="1165.0" y1="311.0" x2="1171.7" y2="311.0" stroke="#a6a6a6" stroke-width="1.5"/>
<text x="1163.6" y="317.0" font-size="16.3" fill="#dcdcdc" text-anchor="end">0,45</text>
<line x1="1722.6" y1="735.0" x2="1722.6" y2="741.0" stroke="#a6a6a6" stroke-width="1.5"/>
<text x="1722.6" y="760.0" font-size="16.3" fill="#dcdcdc" text-anchor="middle">0,45</text>
<line x1="1165.0" y1="263.9" x2="1171.7" y2="263.9" stroke="#a6a6a6" stroke-width="1.5"/>
<text x="1163.6" y="269.9" font-size="16.3" fill="#dcdcdc" text-anchor="end">0,5</text>
<line x1="1783.8" y1="735.0" x2="1783.8" y2="741.0" stroke="#a6a6a6" stroke-width="1.5"/>
<text x="1783.8" y="760.0" font-size="16.3" fill="#dcdcdc" text-anchor="middle">0,5</text>
<line x1="1165.0" y1="216.8" x2="1171.7" y2="216.8" stroke="#a6a6a6" stroke-width="1.5"/>
<text x="1163.6" y="222.8" font-size="16.3" fill="#dcdcdc" text-anchor="end">0,55</text>
<line x1="1845.0" y1="735.0" x2="1845.0" y2="741.0" stroke="#a6a6a6" stroke-width="1.5"/>
<text x="1845.0" y="760.0" font-size="16.3" fill="#dcdcdc" text-anchor="middle">0,55</text>
<rect x="1284.3" y="180.8" width="16.5" height="16.5" fill="none" stroke="#000" stroke-opacity="0.12" stroke-width="3"/>
<rect x="1284.3" y="180.8" width="16.5" height="16.5" fill="none" stroke="#ffffff" stroke-width="2"/>
<rect x="1296.0" y="191.4" width="16.5" height="16.5" fill="none" stroke="#000" stroke-opacity="0.12" stroke-width="3"/>
<rect x="1296.0" y="191.4" width="16.5" height="16.5" fill="none" stroke="#ffffff" stroke-width="2"/>
<rect x="1312.2" y="205.9" width="16.5" height="16.5" fill="none" stroke="#000" stroke-opacity="0.12" stroke-width="3"/>
<rect x="1312.2" y="205.9" width="16.5" height="16.5" fill="none" stroke="#ffffff" stroke-width="2"/>
<rect x="1335.3" y="224.4" width="16.5" height="16.5" fill="none" stroke="#000" stroke-opacity="0.12" stroke-width="3"/>
<rect x="1335.3" y="224.4" width="16.5" height="16.5" fill="none" stroke="#ffffff" stroke-width="2"/>
<rect x="1365.0" y="250.8" width="16.5" height="16.5" fill="none" stroke="#000" stroke-opacity="0.12" stroke-width="3"/>
<rect x="1365.0" y="250.8" width="16.5" height="16.5" fill="none" stroke="#ffffff" stroke-width="2"/>
<rect x="1414.2" y="192.9" width="16.5" height="16.5" fill="none" stroke="#000" stroke-opacity="0.12" stroke-width="3"/>
<rect x="1414.2" y="192.9" width="16.5" height="16.5" fill="none" stroke="#ffffff" stroke-width="2"/>
<rect x="1412.5" y="205.9" width="16.5" height="16.5" fill="none" stroke="#000" stroke-opacity="0.12" stroke-width="3"/>
<rect x="1412.5" y="205.9" width="16.5" height="16.5" fill="none" stroke="#ffffff" stroke-width="2"/>
<rect x="1411.0" y="221.7" width="16.5" height="16.5" fill="none" stroke="#000" stroke-opacity="0.12" stroke-width="3"/>
<rect x="1411.0" y="221.7" width="16.5" height="16.5" fill="none" stroke="#ffffff" stroke-width="2"/>
<rect x="1409.0" y="238.9" width="16.5" height="16.5" fill="none" stroke="#000" stroke-opacity="0.12" stroke-width="3"/>
<rect x="1409.0" y="238.9" width="16.5" height="16.5" fill="none" stroke="#ffffff" stroke-width="2"/>
<rect x="1407.2" y="259.1" width="16.5" height="16.5" fill="none" stroke="#000" stroke-opacity="0.12" stroke-width="3"/>
<rect x="1407.2" y="259.1" width="16.5" height="16.5" fill="none" stroke="#ffffff" stroke-width="2"/>
<rect x="1310.2" y="298.1" width="16.5" height="16.5" fill="none" stroke="#000" stroke-opacity="0.12" stroke-width="3"/>
<rect x="1310.2" y="298.1" width="16.5" height="16.5" fill="none" stroke="#ffffff" stroke-width="2"/>
<rect x="1328.0" y="294.9" width="16.5" height="16.5" fill="none" stroke="#000" stroke-opacity="0.12" stroke-width="3"/>
<rect x="1328.0" y="294.9" width="16.5" height="16.5" fill="none" stroke="#ffffff" stroke-width="2"/>
<rect x="1345.2" y="293.4" width="16.5" height="16.5" fill="none" stroke="#000" stroke-opacity="0.12" stroke-width="3"/>
<rect x="1345.2" y="293.4" width="16.5" height="16.5" fill="none" stroke="#ffffff" stroke-width="2"/>
<rect x="1364.0" y="290.6" width="16.5" height="16.5" fill="none" stroke="#000" stroke-opacity="0.12" stroke-width="3"/>
<rect x="1364.0" y="290.6" width="16.5" height="16.5" fill="none" stroke="#ffffff" stroke-width="2"/>
<rect x="1384.0" y="286.9" width="16.5" height="16.5" fill="none" stroke="#000" stroke-opacity="0.12" stroke-width="3"/>
<rect x="1384.0" y="286.9" width="16.5" height="16.5" fill="none" stroke="#ffffff" stroke-width="2"/>
<rect x="1377.2" y="576.8" width="16.5" height="16.5" fill="none" stroke="#000" stroke-opacity="0.12" stroke-width="3"/>
<rect x="1377.2" y="576.8" width="16.5" height="16.5" fill="none" stroke="#ffffff" stroke-width="2"/>
<rect x="1383.7" y="498.2" width="16.5" height="16.5" fill="none" stroke="#000" stroke-opacity="0.12" stroke-width="3"/>
<rect x="1383.7" y="498.2" width="16.5" height="16.5" fill="none" stroke="#ffffff" stroke-width="2"/>
<rect x="1391.8" y="427.8" width="16.5" height="16.5" fill="none" stroke="#000" stroke-opacity="0.12" stroke-width="3"/>
<rect x="1391.8" y="427.8" width="16.5" height="16.5" fill="none" stroke="#ffffff" stroke-width="2"/>
<rect x="1396.8" y="369.9" width="16.5" height="16.5" fill="none" stroke="#000" stroke-opacity="0.12" stroke-width="3"/>
<rect x="1396.8" y="369.9" width="16.5" height="16.5" fill="none" stroke="#ffffff" stroke-width="2"/>
<rect x="1401.2" y="320.9" width="16.5" height="16.5" fill="none" stroke="#000" stroke-opacity="0.12" stroke-width="3"/>
<rect x="1401.2" y="320.9" width="16.5" height="16.5" fill="none" stroke="#ffffff" stroke-width="2"/>
<rect x="1560.2" y="415.9" width="16.5" height="16.5" fill="none" stroke="#000" stroke-opacity="0.12" stroke-width="3"/>
<rect x="1560.2" y="415.9" width="16.5" height="16.5" fill="none" stroke="#ffffff" stroke-width="2"/>
<rect x="1523.5" y="383.4" width="16.5" height="16.5" fill="none" stroke="#000" stroke-opacity="0.12" stroke-width="3"/>
<rect x="1523.5" y="383.4" width="16.5" height="16.5" fill="none" stroke="#ffffff" stroke-width="2"/>
<rect x="1486.7" y="353.6" width="16.5" height="16.5" fill="none" stroke="#000" stroke-opacity="0.12" stroke-width="3"/>
<rect x="1486.7" y="353.6" width="16.5" height="16.5" fill="none" stroke="#ffffff" stroke-width="2"/>
<rect x="1455.8" y="326.6" width="16.5" height="16.5" fill="none" stroke="#000" stroke-opacity="0.12" stroke-width="3"/>
<rect x="1455.8" y="326.6" width="16.5" height="16.5" fill="none" stroke="#ffffff" stroke-width="2"/>
<rect x="1428.2" y="302.4" width="16.5" height="16.5" fill="none" stroke="#000" stroke-opacity="0.12" stroke-width="3"/>
<rect x="1428.2" y="302.4" width="16.5" height="16.5" fill="none" stroke="#ffffff" stroke-width="2"/>
<rect x="1771.0" y="229.1" width="16.5" height="16.5" fill="none" stroke="#000" stroke-opacity="0.12" stroke-width="3"/>
<rect x="1771.0" y="229.1" width="16.5" height="16.5" fill="none" stroke="#ffffff" stroke-width="2"/>
<rect x="1706.0" y="238.2" width="16.5" height="16.5" fill="none" stroke="#000" stroke-opacity="0.12" stroke-width="3"/>
<rect x="1706.0" y="238.2" width="16.5" height="16.5" fill="none" stroke="#ffffff" stroke-width="2"/>
<rect x="1632.8" y="249.6" width="16.5" height="16.5" fill="none" stroke="#000" stroke-opacity="0.12" stroke-width="3"/>
<rect x="1632.8" y="249.6" width="16.5" height="16.5" fill="none" stroke="#ffffff" stroke-width="2"/>
<rect x="1550.0" y="261.6" width="16.5" height="16.5" fill="none" stroke="#000" stroke-opacity="0.12" stroke-width="3"/>
<rect x="1550.0" y="261.6" width="16.5" height="16.5" fill="none" stroke="#ffffff" stroke-width="2"/>
<rect x="1475.8" y="273.4" width="16.5" height="16.5" fill="none" stroke="#000" stroke-opacity="0.12" stroke-width="3"/>
<rect x="1475.8" y="273.4" width="16.5" height="16.5" fill="none" stroke="#ffffff" stroke-width="2"/>
<rect x="1404.0" y="283.9" width="16.5" height="16.5" fill="none" stroke="#111111" stroke-width="2"/>
<circle cx="1274.9" cy="187.4" r="4.9" fill="#00bb00" stroke="#1a1a1a" stroke-width="1.4"/>
<circle cx="1292.3" cy="199.7" r="4.9" fill="#44b044" stroke="#1a1a1a" stroke-width="1.4"/>
<circle cx="1312.4" cy="215.3" r="4.9" fill="#64b064" stroke="#1a1a1a" stroke-width="1.4"/>
<circle cx="1339.0" cy="235.6" r="4.9" fill="#84b084" stroke="#1a1a1a" stroke-width="1.4"/>
<circle cx="1370.5" cy="259.2" r="4.9" fill="#a0b0a0" stroke="#1a1a1a" stroke-width="1.4"/>
<circle cx="1420.5" cy="201.2" r="4.9" fill="#c8c000" stroke="#1a1a1a" stroke-width="1.4"/>
<circle cx="1418.9" cy="215.3" r="4.9" fill="#c0b850" stroke="#1a1a1a" stroke-width="1.4"/>
<circle cx="1417.2" cy="231.2" r="4.9" fill="#c0b870" stroke="#1a1a1a" stroke-width="1.4"/>
<circle cx="1414.4" cy="248.3" r="4.9" fill="#c0b888" stroke="#1a1a1a" stroke-width="1.4"/>
<circle cx="1412.5" cy="267.3" r="4.9" fill="#c0c0a0" stroke="#1a1a1a" stroke-width="1.4"/>
<circle cx="1301.4" cy="304.6" r="4.9" fill="#00b0c0" stroke="#1a1a1a" stroke-width="1.4"/>
<circle cx="1325.2" cy="301.7" r="4.9" fill="#50b0b4" stroke="#1a1a1a" stroke-width="1.4"/>
<circle cx="1346.8" cy="298.2" r="4.9" fill="#70b0b4" stroke="#1a1a1a" stroke-width="1.4"/>
<circle cx="1367.6" cy="295.4" r="4.9" fill="#90b0b0" stroke="#1a1a1a" stroke-width="1.4"/>
<circle cx="1389.2" cy="291.8" r="4.9" fill="#a4b0b0" stroke="#1a1a1a" stroke-width="1.4"/>
<circle cx="1373.0" cy="606.7" r="4.9" fill="#0a0ac8" stroke="#1a1a1a" stroke-width="1.4"/>
<circle cx="1384.4" cy="502.2" r="4.9" fill="#4848a8" stroke="#1a1a1a" stroke-width="1.4"/>
<circle cx="1394.1" cy="422.0" r="4.9" fill="#6a6ab0" stroke="#1a1a1a" stroke-width="1.4"/>
<circle cx="1401.7" cy="365.6" r="4.9" fill="#8a8ab8" stroke="#1a1a1a" stroke-width="1.4"/>
<circle cx="1406.6" cy="323.4" r="4.9" fill="#a0a0c0" stroke="#1a1a1a" stroke-width="1.4"/>
<circle cx="1578.8" cy="417.1" r="4.9" fill="#b000b8" stroke="#1a1a1a" stroke-width="1.4"/>
<circle cx="1533.3" cy="380.8" r="4.9" fill="#b850b8" stroke="#1a1a1a" stroke-width="1.4"/>
<circle cx="1492.7" cy="351.6" r="4.9" fill="#b870b8" stroke="#1a1a1a" stroke-width="1.4"/>
<circle cx="1459.7" cy="326.1" r="4.9" fill="#b890b8" stroke="#1a1a1a" stroke-width="1.4"/>
<circle cx="1434.9" cy="307.7" r="4.9" fill="#c0a0c0" stroke="#1a1a1a" stroke-width="1.4"/>
<circle cx="1774.4" cy="237.3" r="4.9" fill="#c00000" stroke="#1a1a1a" stroke-width="1.4"/>
<circle cx="1699.1" cy="248.1" r="4.9" fill="#c04040" stroke="#1a1a1a" stroke-width="1.4"/>
<circle cx="1628.1" cy="259.5" r="4.9" fill="#c06060" stroke="#1a1a1a" stroke-width="1.4"/>
<circle cx="1545.2" cy="270.3" r="4.9" fill="#c07a7a" stroke="#1a1a1a" stroke-width="1.4"/>
<circle cx="1477.0" cy="279.5" r="4.9" fill="#c09494" stroke="#1a1a1a" stroke-width="1.4"/>
<circle cx="1410.8" cy="289.0" r="4.9" fill="#ffffff" stroke="#1a1a1a" stroke-width="1.4"/>
<circle cx="1428.6" cy="287.6" r="5.3" fill="#000"/>
<rect x="1653.0" y="556.7" width="249.8" height="171.9" fill="#2c2c2c"/>
<rect x="1656.5" y="560.5" width="242.5" height="164.0" fill="#232323" stroke="#a8a8a8" stroke-width="2"/>
<path d="M1657.5 561.5H1777.3L1898 642.5V723.8H1657.5Z" fill="url(#insd)"/>
<path d="M1657.5 569.4L1898 714.8V723.8H1657.5Z" fill="url(#insb)"/>
<rect x="1769.5" y="634.2" width="15.5" height="15.5" fill="none" stroke="#000" stroke-opacity="0.12" stroke-width="3"/>
<rect x="1769.5" y="634.2" width="15.5" height="15.5" fill="none" stroke="#ffffff" stroke-width="2"/>
<circle cx="1772.5" cy="634.0" r="4.6" fill="#c4c000" stroke="#1a1a1a" stroke-width="1.4"/>
<rect x="1914.5" y="99.0" width="5.5" height="975.0" fill="url(#rshadow)"/>
<rect x="1.3" y="1076.4" width="50.3" height="68.3" rx="4" fill="url(#tileg)"/>
<circle cx="26.5" cy="1086.3" r="8.5" fill="url(#circg)"/>
<path d="M21.5 1088.8H31.5L26.5 1082.8Z" fill="#222"/>
<rect x="6.9" y="1105.6" width="39.4" height="33.8" fill="#ffff00" rx="3"/>
<rect x="58.8" y="1076.4" width="168.2" height="68.3" rx="4" fill="url(#tileg)"/>
<rect x="64.8" y="1082.3" width="156.7" height="40.4" rx="3" fill="rgb(192,195,160)" stroke="rgba(0,0,0,0.18)" stroke-width="1"/>
<text x="142.8" y="1140.0" font-size="12.5" fill="#2a2a2a" text-anchor="middle" font-weight="bold">20%</text>
<rect x="229.8" y="1076.4" width="168.2" height="68.3" rx="4" fill="url(#tileg)"/>
<rect x="235.8" y="1082.3" width="156.8" height="40.4" rx="3" fill="rgb(192,194,132)" stroke="rgba(0,0,0,0.18)" stroke-width="1"/>
<text x="313.9" y="1140.0" font-size="12.5" fill="#2a2a2a" text-anchor="middle" font-weight="bold">40%</text>
<rect x="400.5" y="1076.4" width="168.5" height="68.3" rx="4" fill="url(#tileg)"/>
<rect x="406.5" y="1082.3" width="157.0" height="40.4" rx="3" fill="rgb(194,195,104)" stroke="rgba(0,0,0,0.18)" stroke-width="1"/>
<text x="484.8" y="1140.0" font-size="12.5" fill="#2a2a2a" text-anchor="middle" font-weight="bold">60%</text>
<rect x="571.5" y="1076.4" width="168.7" height="68.3" rx="4" fill="url(#tileg)"/>
<rect x="577.5" y="1082.3" width="157.2" height="40.4" rx="3" fill="rgb(193,193,82)" stroke="rgba(0,0,0,0.18)" stroke-width="1"/>
<text x="655.9" y="1140.0" font-size="12.5" fill="#2a2a2a" text-anchor="middle" font-weight="bold">80%</text>
<rect x="742.3" y="1076.4" width="168.7" height="68.3" rx="4" fill="url(#seltile)"/>
<rect x="747.9" y="1081.2" width="157.9" height="41.5" rx="3" fill="#c4c000"/>
<text x="826.5" y="1140.0" font-size="12.5" fill="#ffffff" text-anchor="middle" font-weight="bold">100%</text>
<rect x="1556.7" y="1075.8" width="54" height="68.4" rx="4" fill="url(#ctlg)"/>
<line x1="1557.0" y1="1097.0" x2="1610.5" y2="1097.0" stroke="#444" stroke-width="1.5"/>
<circle cx="1583.3" cy="1085.8" r="8.5" fill="url(#ctlc)"/>
<path d="M1578.5 1088.3H1588L1583.3 1082.5Z" fill="#222"/>
<rect x="1567.5" y="1104.5" width="32" height="33" rx="3" fill="#b0b0b0" stroke="#222" stroke-width="2.5"/>
<rect x="1576.0" y="1113.0" width="16.0" height="15.0" fill="#000"/>
<rect x="1612" y="1076" width="305.7" height="34" rx="3" fill="url(#ctlg)"/>
<line x1="1663.3" y1="1076.0" x2="1663.3" y2="1110.0" stroke="#3a3a3a" stroke-width="1.2"/>
<line x1="1714.8" y1="1076.0" x2="1714.8" y2="1110.0" stroke="#3a3a3a" stroke-width="1.2"/>
<line x1="1765.3" y1="1076.0" x2="1765.3" y2="1110.0" stroke="#3a3a3a" stroke-width="1.2"/>
<line x1="1815.6" y1="1076.0" x2="1815.6" y2="1110.0" stroke="#3a3a3a" stroke-width="1.2"/>
<line x1="1866.4" y1="1076.0" x2="1866.4" y2="1110.0" stroke="#3a3a3a" stroke-width="1.2"/>
<circle cx="1637.6" cy="1093" r="11" fill="url(#ctlc)"/>
<circle cx="1689.0" cy="1093" r="11" fill="url(#ctlc)"/>
<circle cx="1740.0" cy="1093" r="11" fill="url(#ctlc)"/>
<circle cx="1790.5" cy="1093" r="11" fill="url(#ctlc)"/>
<circle cx="1841.0" cy="1093" r="11" fill="url(#ctlc)"/>
<circle cx="1892.0" cy="1093" r="11" fill="url(#ctlc)"/>
<rect x="1633.5" y="1089.0" width="8.0" height="8.0" fill="#2a2a2a"/>
<path d="M1685.5 1087V1099L1695 1093Z" fill="#222"/>
<path d="M1735.5 1088H1733.5V1098H1735.5M1744.5 1088H1746.5V1098H1744.5" fill="none" stroke="#2a2a2a" stroke-width="1.6"/><circle cx="1738.5" cy="1092.5" r="0.9" fill="#2a2a2a"/><circle cx="1741.5" cy="1092.5" r="0.9" fill="#2a2a2a"/>
<path d="M1790.5 1093C1788 1090 1783.5 1089.5 1783.5 1093C1783.5 1096.5 1788 1096 1790.5 1093C1793 1090 1797.5 1089.5 1797.5 1093C1797.5 1096.5 1793 1096 1790.5 1093Z" fill="none" stroke="#2a2a2a" stroke-width="2.2"/>
<path d="M1835.5 1091.5A6 6 0 0 1 1846 1089M1846.5 1094.5A6 6 0 0 1 1836 1097" fill="none" stroke="#2a2a2a" stroke-width="2.2"/>
<path d="M1843.5 1086.5L1847.5 1090L1843 1091Z M1838.5 1099.5L1834.5 1096L1839 1095Z" fill="#2a2a2a"/>
<rect x="1612" y="1111" width="305.7" height="33.8" rx="3" fill="url(#ctlg)"/>
<line x1="1765.5" y1="1111.0" x2="1765.5" y2="1144.8" stroke="#3a3a3a" stroke-width="1.2"/>
<circle cx="1646.4" cy="1127.8" r="11" fill="url(#ctlc)"/>
<circle cx="1886.3" cy="1127.8" r="11" fill="url(#ctlc)"/>
<text x="1646.4" y="1134.0" font-size="19.0" fill="#333" text-anchor="middle" font-weight="bold">«</text>
<text x="1886.3" y="1134.0" font-size="19.0" fill="#333" text-anchor="middle" font-weight="bold">»</text>
<text x="1677.0" y="1137.0" font-size="25.0" fill="#2a2a2a" textLength="56.0" lengthAdjust="spacingAndGlyphs" font-weight="bold">Back</text>
<text x="1796.7" y="1137.0" font-size="25.0" fill="#2a2a2a" textLength="57.8" lengthAdjust="spacingAndGlyphs" font-weight="bold">Next</text>
<line x1="0.0" y1="1146.5" x2="1920.0" y2="1146.5" stroke="#d8d8d8" stroke-width="1.0"/>
<rect x="23.5" y="1160.5" width="12.3" height="12.3" rx="0.8" fill="#1f8fe6"/>
<rect x="36.8" y="1160.5" width="12.3" height="12.3" rx="0.8" fill="#1f8fe6"/>
<rect x="23.5" y="1173.8" width="12.3" height="12.3" rx="0.8" fill="#1f8fe6"/>
<rect x="36.8" y="1173.8" width="12.3" height="12.3" rx="0.8" fill="#1f8fe6"/>
<rect x="66" y="1156" width="244.5" height="34" rx="17" fill="#fbfbfb" stroke="#dcdcdc" stroke-width="1"/>
<circle cx="85.5" cy="1171.5" r="6.3" fill="none" stroke="#1a1a1a" stroke-width="1.8"/>
<line x1="90.0" y1="1176.0" x2="94.5" y2="1180.5" stroke="#1a1a1a" stroke-width="2.0"/>
<text x="107.0" y="1179.0" font-size="17.5" fill="#5a5a5a" textLength="41.0" lengthAdjust="spacingAndGlyphs">Suche</text>
<rect x="332.0" y="1160.5" width="20.5" height="17.5" fill="url(#tvl)" rx="2"/>
<rect x="325.5" y="1167.0" width="20.5" height="18.3" fill="url(#tvd)" rx="2"/>
<rect x="332.0" y="1167.0" width="14.0" height="11.0" fill="url(#tvm)" rx="1"/>
<rect x="375.0" y="1159.5" width="27.5" height="27.5" fill="#ffffff"/>
<path d="M384 1187L402.5 1168V1187Z" fill="#5cb030"/>
<rect x="375.0" y="1172.4" width="13.5" height="5.4" fill="#1a0000"/>
<rect x="376.5" y="1173.4" width="10.5" height="3.4" fill="#c00000"/>
<path d="M375.5 1167.5Q388 1156 401.5 1165.5" fill="none" stroke="#222" stroke-width="0.9"/>
<line x1="388.0" y1="1173.5" x2="399.5" y2="1162.5" stroke="#111" stroke-width="1.3"/>
<rect x="425.0" y="1159.5" width="26.5" height="26.5" fill="#e6e6e6" rx="3"/>
<path d="M437.5 1162.5L446.5 1167.5V1178L439 1182.5L429.5 1177V1168Z" fill="#e82020"/>
<path d="M429.5 1168L437.5 1172.5V1182L429.5 1177Z" fill="#f06868"/>
<path d="M437.5 1169L441.5 1171.5V1176L437.5 1173.5Z" fill="#b81010"/>
<path d="M474 1164H500V1183Q500 1186.5 496.5 1186.5H477.5Q474 1186.5 474 1183Z" fill="url(#stg)"/>
<path d="M480.5 1164V1161.5Q480.5 1160.5 481.5 1160.5H492.5Q493.5 1160.5 493.5 1161.5V1164" fill="none" stroke="#3ab4f0" stroke-width="1.3"/>
<rect x="481.5" y="1169.0" width="5.2" height="5.2" fill="#f25022"/>
<rect x="487.5" y="1169.0" width="5.2" height="5.2" fill="#7fba00"/>
<rect x="481.5" y="1175.0" width="5.2" height="5.2" fill="#00a4ef"/>
<rect x="487.5" y="1175.0" width="5.2" height="5.2" fill="#ffb900"/>
<path d="M524.8 1163Q524.8 1162.4 525.5 1162.4H531.5L534 1164.5H548Q549 1164.5 549 1165.5V1181.3H524.8Z" fill="#f0b429"/>
<rect x="524.8" y="1165.8" width="24.2" height="15.5" fill="#ffd966" rx="1"/>
<rect x="533.0" y="1191.0" width="8.0" height="3.0" fill="#8a8a8a" rx="1.5"/>
<text x="559.4" y="1179.0" font-size="15.0" fill="#1a1a1a" textLength="139.4" lengthAdjust="spacingAndGlyphs">acer swift go ai ryzen –</text>
<circle cx="739.5" cy="1172.5" r="12" fill="#eaeaea"/>
<path d="M732 1164Q741 1160 747 1166L744 1172L748 1176Q742 1184 735 1182L738 1175L732 1170Z" fill="#1e1e1e"/>
<path d="M735 1176L745 1172" stroke="#3cc0b0" stroke-width="2"/>
<path d="M789 1160Q791 1171 801.5 1173Q791 1175 789 1186Q787 1175 776.5 1173Q787 1171 789 1160Z" fill="url(#copg)"/>
<ellipse cx="838.0" cy="1172.5" rx="12" ry="13" fill="#e0141e"/>
<ellipse cx="838.0" cy="1172.5" rx="5.6" ry="9.8" fill="#eeeeee"/>
<rect x="834.0" y="1191.0" width="8.0" height="3.0" fill="#8a8a8a" rx="1.5"/>
<text x="861.0" y="1179.0" font-size="15.0" fill="#1a1a1a" textLength="144.5" lengthAdjust="spacingAndGlyphs">Amazon.de: Der letzte B</text>
<ellipse cx="1041.0" cy="1172.5" rx="12" ry="13" fill="#e0141e"/>
<ellipse cx="1041.0" cy="1172.5" rx="5.6" ry="9.8" fill="#eeeeee"/>
<rect x="1037.0" y="1191.0" width="8.0" height="3.0" fill="#8a8a8a" rx="1.5"/>
<text x="1063.0" y="1179.0" font-size="15.0" fill="#1a1a1a" textLength="142.0" lengthAdjust="spacingAndGlyphs">Test Acer Swift Go 16 AI</text>
<rect x="1230.0" y="1160.0" width="26.5" height="26.5" fill="#8a6ae8" rx="4"/>
<rect x="1235.5" y="1165.5" width="15.5" height="15.5" fill="none" stroke="#ffffff" stroke-width="1.2" rx="2"/>
<rect x="1272" y="1152" width="195" height="40" rx="5" fill="#f9f9f9" stroke="#e2e2e2" stroke-width="1"/>
<path d="M1292.5 1158.5L1298.0 1164.0L1292.5 1169.5L1287.0 1164.0Z" fill="#f7c52a"/>
<path d="M1299.0 1165.5L1304.5 1171.0L1299.0 1176.5L1293.5 1171.0Z" fill="#3ccb3c"/>
<path d="M1292.5 1172.5L1298.0 1178.0L1292.5 1183.5L1287.0 1178.0Z" fill="#ec3b6e"/>
<path d="M1286.0 1165.5L1291.5 1171.0L1286.0 1176.5L1280.5 1171.0Z" fill="#3a9ee8"/>
<rect x="1284.0" y="1191.0" width="17.0" height="3.0" fill="#1a6fd8" rx="1.5"/>
<text x="1315.0" y="1179.0" font-size="15.0" fill="#1a1a1a" textLength="144.0" lengthAdjust="spacingAndGlyphs">Calman 2025 Calman UI</text>
<path d="M1659.5 1176L1666 1169.5L1672.5 1176" fill="none" stroke="#1a1a1a" stroke-width="1.3"/>
<text x="1708.5" y="1170.0" font-size="13.0" fill="#1a1a1a" text-anchor="middle">DEU</text>
<text x="1708.5" y="1187.5" font-size="13.0" fill="#1a1a1a" text-anchor="middle">DE</text>
<path d="M1748.6 1177.2A4 4 0 0 1 1754.4 1177.2" fill="none" stroke="#1a1a1a" stroke-width="1.4"/>
<path d="M1745.7 1174.5A8 8 0 0 1 1757.3 1174.5" fill="none" stroke="#1a1a1a" stroke-width="1.4"/>
<path d="M1742.9 1171.7A12 12 0 0 1 1760.1 1171.7" fill="none" stroke="#1a1a1a" stroke-width="1.4"/>
<circle cx="1751.5" cy="1180" r="1.4" fill="#1a1a1a"/>
<path d="M1770.5 1170H1773.5L1777.5 1166.8V1179.2L1773.5 1176H1770.5Z" fill="none" stroke="#1a1a1a" stroke-width="1.2"/>
<path d="M1780 1170Q1782.5 1173 1780 1176M1782.5 1168Q1786 1173 1782.5 1178" fill="none" stroke="#1a1a1a" stroke-width="1.1"/>
<rect x="1797.0" y="1167.0" width="18.0" height="11.0" fill="none" stroke="#1a1a1a" stroke-width="1.2" rx="2"/>
<rect x="1815.5" y="1170.0" width="2.0" height="5.0" fill="#1a1a1a"/>
<rect x="1799.0" y="1169.0" width="10.0" height="7.0" fill="#1a1a1a"/>
<text x="1898.0" y="1169.0" font-size="13.5" fill="#1a1a1a" text-anchor="end">12:53</text>
<text x="1898.0" y="1186.5" font-size="13.5" fill="#1a1a1a" text-anchor="end">12.11.2025</text>
</svg>

</body></html>
